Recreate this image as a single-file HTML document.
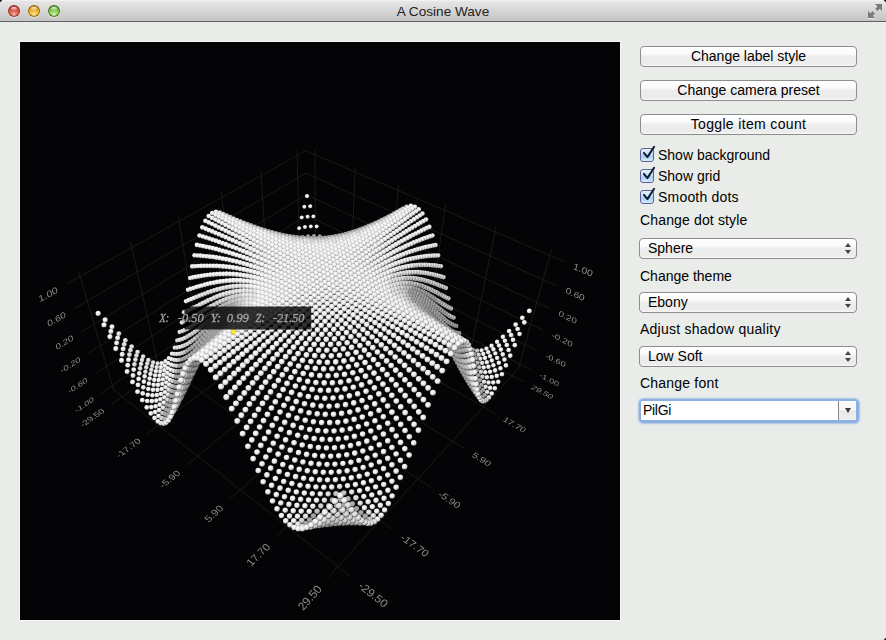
<!DOCTYPE html>
<html><head><meta charset="utf-8">
<style>
*{box-sizing:border-box}
html,body{margin:0;padding:0;width:886px;height:640px;overflow:hidden;background:#eaece9;font-family:"Liberation Sans",sans-serif;}
#title{position:absolute;left:0;top:0;width:886px;height:22px;background:linear-gradient(#f6f6f6 0,#e6e6e6 1.5px,#d6d6d6 50%,#c4c4c4 100%);border-bottom:1px solid #626262;}
#title .t{position:absolute;left:0;width:886px;top:4px;line-height:15px;text-align:center;font-size:13.6px;color:#222}
.tl{position:absolute;top:5px;width:12px;height:12px;border-radius:50%;}
.hl{position:absolute;left:3px;top:1.5px;width:6px;height:3.5px;border-radius:50%;background:linear-gradient(rgba(255,255,255,.9),rgba(255,255,255,.15))}
#plot{position:absolute;left:19px;top:41px;width:602px;height:580px;border:1px solid #f7f8f6;background:#040306}
.t13{position:absolute;font-size:14px;line-height:15px;color:#000;letter-spacing:0px;white-space:nowrap}
.btn{position:absolute;left:640px;width:217px;height:21px;border:1px solid #8e8e8e;border-radius:4px;background:linear-gradient(#fefefe,#fbfbfb 35%,#ececec 52%,#ebecea 85%,#f6f6f6);}
.btn .t13{left:0;width:215px;text-align:center;top:2px}
.cb{position:absolute;left:640px;width:14px;height:14px;border:1px solid #5f5f98;border-radius:3px;background:linear-gradient(#e6f3fe,#c6e2fc 40%,#a6cef6 60%,#d6effe);}
.combo{position:absolute;left:639px;width:218px;height:21px;border:1px solid #8e8e8e;border-radius:4px;background:linear-gradient(#fefefe,#fbfbfb 35%,#ececec 52%,#ebecea 85%,#f6f6f6);}
.combo .t13{left:8px;top:2px}
.arr{position:absolute;left:205px;width:0;height:0;border-left:3px solid transparent;border-right:3px solid transparent}
</style></head><body>
<div id="title"><div class="t">A Cosine Wave</div>
<div class="tl" style="left:8px;background:radial-gradient(circle at 50% 78%,#f2b8ae 0,#e26a5a 30%,transparent 60%),linear-gradient(#b8372a,#d44c3c 50%,#e88070);box-shadow:inset 0 0 0 1px #8c3428,0 1px 0 rgba(255,255,255,.5)"><div class="hl"></div></div>
<div class="tl" style="left:28px;background:radial-gradient(circle at 50% 78%,#fbe8a8 0,#f0c040 30%,transparent 60%),linear-gradient(#c88a10,#e0a828 50%,#f4d070);box-shadow:inset 0 0 0 1px #8e6410,0 1px 0 rgba(255,255,255,.5)"><div class="hl"></div></div>
<div class="tl" style="left:48px;background:radial-gradient(circle at 50% 78%,#d8f2b8 0,#98d060 30%,transparent 60%),linear-gradient(#5c9a2c,#7cba44 50%,#b8e088);box-shadow:inset 0 0 0 1px #3e6e20,0 1px 0 rgba(255,255,255,.5)"><div class="hl"></div></div>
<svg style="position:absolute;left:866px;top:2px" width="18" height="18" viewBox="0 0 18 18"><path d="M9 2h7v7l-2.3-2.3-2.2 2.2-2.2-2.2 2.2-2.2z" fill="#7a7a7a"/><path d="M2 9v7h7l-2.3-2.3 2.2-2.2-2.2-2.2-2.2 2.2z" fill="#7a7a7a"/><path d="M2 16.6h7" stroke="#f4f4f4" stroke-width="0.8"/></svg>
<div style="position:absolute;left:0;top:0;width:3px;height:3px;background:radial-gradient(circle at 100% 100%,transparent 2.5px,#111 3px)"></div><div style="position:absolute;right:0;top:0;width:3px;height:3px;background:radial-gradient(circle at 0 100%,transparent 2.5px,#111 3px)"></div>
</div>
<div id="plot"><svg width="600" height="578" viewBox="0 0 600 578" style="display:block">
<g font-family="Liberation Sans, sans-serif" font-size="10" fill="#8f8e8d" opacity="0.999"><text transform="matrix(0.7979 -0.5436 0.2114 0.6405 73.43 356.61)" text-anchor="end" y="3.6">-1.00</text><text transform="matrix(0.8407 0.4386 -0.1981 0.6405 519.71 332.45)" text-anchor="start" y="3.6">-1.00</text><text transform="matrix(0.8255 -0.5437 0.2235 0.6772 67.03 337.19)" text-anchor="end" y="3.6">-0.60</text><text transform="matrix(0.8676 0.4379 -0.2091 0.6760 525.71 313.05)" text-anchor="start" y="3.6">-0.60</text><text transform="matrix(0.8550 -0.5430 0.2367 0.7173 60.24 316.65)" text-anchor="end" y="3.6">-0.20</text><text transform="matrix(0.8962 0.4364 -0.2210 0.7145 532.05 292.56)" text-anchor="start" y="3.6">-0.20</text><text transform="matrix(0.8866 -0.5411 0.2512 0.7609 53.06 294.87)" text-anchor="end" y="3.6">0.20</text><text transform="matrix(0.9268 0.4340 -0.2340 0.7564 538.75 270.89)" text-anchor="start" y="3.6">0.20</text><text transform="matrix(0.9205 -0.5381 0.2669 0.8087 45.42 271.74)" text-anchor="end" y="3.6">0.60</text><text transform="matrix(0.9594 0.4306 -0.2481 0.8021 545.86 247.93)" text-anchor="start" y="3.6">0.60</text><text transform="matrix(0.9570 -0.5335 0.2842 0.8612 37.30 247.14)" text-anchor="end" y="3.6">1.00</text><text transform="matrix(0.9944 0.4259 -0.2636 0.8520 553.40 223.56)" text-anchor="start" y="3.6">1.00</text><text transform="matrix(0.7930 -0.5539 0.5846 0.4788 83.29 367.86)" text-anchor="end" y="3.6">-29.50</text><text transform="matrix(0.9359 0.7368 -0.7399 0.8521 340.14 542.04)" text-anchor="start" y="3.6">-29.50</text><text transform="matrix(0.7966 -0.6001 0.6334 0.5188 119.45 397.47)" text-anchor="end" y="3.6">-17.70</text><text transform="matrix(0.9182 0.6602 -0.6630 0.7635 381.83 494.04)" text-anchor="start" y="3.6">-17.70</text><text transform="matrix(0.7979 -0.6523 0.6886 0.5640 158.69 429.61)" text-anchor="end" y="3.6">-5.90</text><text transform="matrix(0.8992 0.5949 -0.5975 0.6881 419.29 450.90)" text-anchor="start" y="3.6">-5.90</text><text transform="matrix(0.7964 -0.7117 0.7512 0.6153 201.43 464.61)" text-anchor="end" y="3.6">5.90</text><text transform="matrix(0.8795 0.5389 -0.5412 0.6233 453.13 411.93)" text-anchor="start" y="3.6">5.90</text><text transform="matrix(0.7911 -0.7795 0.8229 0.6740 248.14 502.88)" text-anchor="end" y="3.6">17.70</text><text transform="matrix(0.8595 0.4904 -0.4926 0.5673 483.85 376.54)" text-anchor="start" y="3.6">17.70</text><text transform="matrix(0.7810 -0.8575 0.9053 0.7415 299.43 544.88)" text-anchor="end" y="3.6">29.50</text><text transform="matrix(0.8396 0.4481 -0.4502 0.5184 511.88 344.27)" text-anchor="start" y="3.6">29.50</text></g><defs><radialGradient id="s0" cx="0.42" cy="0.38" r="0.62"><stop offset="0" stop-color="#fafafa"/><stop offset="0.4" stop-color="#f2f2f2"/><stop offset="0.7" stop-color="#d4d4d4"/><stop offset="0.88" stop-color="#9e9e9e"/><stop offset="1" stop-color="#555555"/></radialGradient><radialGradient id="s1" cx="0.42" cy="0.38" r="0.62"><stop offset="0" stop-color="#eaeaea"/><stop offset="0.4" stop-color="#e3e3e3"/><stop offset="0.7" stop-color="#c6c6c6"/><stop offset="0.88" stop-color="#949494"/><stop offset="1" stop-color="#505050"/></radialGradient><radialGradient id="s2" cx="0.42" cy="0.38" r="0.62"><stop offset="0" stop-color="#dadada"/><stop offset="0.4" stop-color="#d3d3d3"/><stop offset="0.7" stop-color="#b9b9b9"/><stop offset="0.88" stop-color="#8a8a8a"/><stop offset="1" stop-color="#4a4a4a"/></radialGradient><radialGradient id="s3" cx="0.42" cy="0.38" r="0.62"><stop offset="0" stop-color="#cacaca"/><stop offset="0.4" stop-color="#c4c4c4"/><stop offset="0.7" stop-color="#ababab"/><stop offset="0.88" stop-color="#808080"/><stop offset="1" stop-color="#454545"/></radialGradient><radialGradient id="s4" cx="0.42" cy="0.38" r="0.62"><stop offset="0" stop-color="#bababa"/><stop offset="0.4" stop-color="#b4b4b4"/><stop offset="0.7" stop-color="#9e9e9e"/><stop offset="0.88" stop-color="#767676"/><stop offset="1" stop-color="#3f3f3f"/></radialGradient><radialGradient id="s5" cx="0.42" cy="0.38" r="0.62"><stop offset="0" stop-color="#aaaaaa"/><stop offset="0.4" stop-color="#a5a5a5"/><stop offset="0.7" stop-color="#909090"/><stop offset="0.88" stop-color="#6b6b6b"/><stop offset="1" stop-color="#3a3a3a"/></radialGradient><radialGradient id="y" cx="0.45" cy="0.4" r="0.6"><stop offset="0" stop-color="#fff27a"/><stop offset="0.6" stop-color="#f5dc0d"/><stop offset="1" stop-color="#a08800"/></radialGradient></defs>
<path d="M90.9 362.5L295.5 219.7M93.7 348.0L331.2 535.0M127.1 391.7L330.8 238.2M137.2 318.2L373.0 487.7M166.3 423.4L368.5 258.1M177.2 290.7L410.7 445.2M209.1 457.8L408.9 279.3M214.0 265.4L444.7 406.8M255.7 495.4L452.1 302.0M248.1 242.0L475.6 371.8M306.9 536.7L498.5 326.3M279.7 220.4L503.8 340.0M93.7 348.0L58.3 228.6M81.1 351.4L287.1 211.1M137.2 318.2L110.6 199.7M74.9 332.0L286.8 192.5M177.2 290.7L158.1 173.6M68.4 311.4L286.5 173.0M214.0 265.4L201.3 149.8M61.6 289.7L286.2 152.6M248.1 242.0L240.7 128.1M54.3 266.6L285.8 131.2M279.7 220.4L277.0 108.1M46.5 242.0L285.5 108.8M295.5 219.7L294.8 107.5M287.1 211.1L511.6 328.2M330.8 238.2L335.2 124.5M286.8 192.5L517.4 308.8M368.5 258.1L378.6 142.9M286.5 173.0L523.5 288.4M408.9 279.3L425.5 162.8M286.2 152.6L529.9 266.7M452.1 302.0L476.2 184.3M285.8 131.2L536.7 243.8M498.5 326.3L531.4 207.6M285.5 108.8L543.9 219.5" stroke="#25221c" stroke-width="0.75" fill="none"/>
<g><circle cx="318.1" cy="235.3" r="2.01" fill="url(#s5)"/><circle cx="315.1" cy="231.2" r="2.01" fill="url(#s5)"/><circle cx="312.4" cy="235.0" r="2.01" fill="url(#s5)"/><circle cx="321.2" cy="238.1" r="2.01" fill="url(#s5)"/><circle cx="309.4" cy="230.7" r="2.01" fill="url(#s5)"/><circle cx="312.0" cy="225.9" r="2.01" fill="url(#s5)"/><circle cx="315.5" cy="238.1" r="2.01" fill="url(#s5)"/><circle cx="306.8" cy="234.8" r="2.01" fill="url(#s5)"/><circle cx="309.8" cy="238.1" r="2.01" fill="url(#s5)"/><circle cx="303.7" cy="230.3" r="2.01" fill="url(#s5)"/><circle cx="301.1" cy="234.7" r="2.01" fill="url(#s5)"/><circle cx="263.9" cy="234.4" r="2.01" fill="url(#s5)"/><circle cx="304.1" cy="238.1" r="2.01" fill="url(#s5)"/><circle cx="306.4" cy="225.3" r="2.01" fill="url(#s5)"/><circle cx="295.4" cy="234.8" r="2.01" fill="url(#s5)"/><circle cx="261.3" cy="238.4" r="2.01" fill="url(#s5)"/><circle cx="298.0" cy="230.2" r="2.01" fill="url(#s5)"/><circle cx="269.6" cy="233.3" r="2.01" fill="url(#s5)"/><circle cx="266.9" cy="237.6" r="2.01" fill="url(#s5)"/><circle cx="289.7" cy="235.0" r="2.01" fill="url(#s5)"/><circle cx="266.5" cy="229.1" r="2.01" fill="url(#s5)"/><circle cx="298.5" cy="238.2" r="2.02" fill="url(#s5)"/><circle cx="272.6" cy="236.8" r="2.02" fill="url(#s5)"/><circle cx="275.3" cy="232.2" r="2.02" fill="url(#s5)"/><circle cx="324.3" cy="239.6" r="2.02" fill="url(#s5)"/><circle cx="292.3" cy="230.4" r="2.02" fill="url(#s5)"/><circle cx="284.0" cy="235.5" r="2.02" fill="url(#s5)"/><circle cx="278.3" cy="236.1" r="2.02" fill="url(#s5)"/><circle cx="318.6" cy="240.0" r="2.02" fill="url(#s5)"/><circle cx="280.9" cy="231.4" r="2.02" fill="url(#s5)"/><circle cx="286.6" cy="230.7" r="2.02" fill="url(#s5)"/><circle cx="292.8" cy="238.5" r="2.02" fill="url(#s5)"/><circle cx="300.7" cy="224.9" r="2.02" fill="url(#s5)"/><circle cx="312.9" cy="240.3" r="2.02" fill="url(#s5)"/><circle cx="287.1" cy="238.8" r="2.02" fill="url(#s5)"/><circle cx="272.2" cy="227.7" r="2.02" fill="url(#s5)"/><circle cx="309.0" cy="219.5" r="2.02" fill="url(#s5)"/><circle cx="281.4" cy="239.2" r="2.02" fill="url(#s5)"/><circle cx="307.2" cy="240.6" r="2.02" fill="url(#s5)"/><circle cx="275.7" cy="239.7" r="2.02" fill="url(#s5)"/><circle cx="269.9" cy="240.2" r="2.02" fill="url(#s5)"/><circle cx="295.0" cy="224.8" r="2.02" fill="url(#s5)"/><circle cx="264.2" cy="240.7" r="2.02" fill="url(#s5)"/><circle cx="277.9" cy="226.5" r="2.02" fill="url(#s5)"/><circle cx="301.5" cy="240.8" r="2.02" fill="url(#s5)"/><circle cx="289.3" cy="225.1" r="2.02" fill="url(#s5)"/><circle cx="258.5" cy="241.0" r="2.02" fill="url(#s5)"/><circle cx="283.6" cy="225.6" r="2.02" fill="url(#s5)"/><circle cx="295.8" cy="241.0" r="2.02" fill="url(#s5)"/><circle cx="269.1" cy="222.5" r="2.02" fill="url(#s5)"/><circle cx="303.3" cy="218.8" r="2.02" fill="url(#s5)"/><circle cx="290.1" cy="241.3" r="2.02" fill="url(#s5)"/><circle cx="284.4" cy="241.6" r="2.02" fill="url(#s5)"/><circle cx="278.7" cy="241.9" r="2.02" fill="url(#s5)"/><circle cx="274.8" cy="221.0" r="2.02" fill="url(#s5)"/><circle cx="297.6" cy="218.4" r="2.02" fill="url(#s5)"/><circle cx="272.9" cy="242.2" r="2.02" fill="url(#s5)"/><circle cx="316.0" cy="241.4" r="2.02" fill="url(#s5)"/><circle cx="267.2" cy="242.4" r="2.02" fill="url(#s5)"/><circle cx="321.7" cy="240.7" r="2.02" fill="url(#s5)"/><circle cx="280.5" cy="219.8" r="2.02" fill="url(#s5)"/><circle cx="310.3" cy="241.9" r="2.02" fill="url(#s5)"/><circle cx="291.9" cy="218.5" r="2.02" fill="url(#s5)"/><circle cx="286.2" cy="219.0" r="2.02" fill="url(#s5)"/><circle cx="304.6" cy="242.3" r="2.02" fill="url(#s5)"/><circle cx="327.5" cy="239.7" r="2.02" fill="url(#s5)"/><circle cx="298.9" cy="242.7" r="2.03" fill="url(#s5)"/><circle cx="261.5" cy="242.5" r="2.03" fill="url(#s5)"/><circle cx="306.0" cy="212.0" r="2.03" fill="url(#s5)"/><circle cx="293.1" cy="243.0" r="2.03" fill="url(#s5)"/><circle cx="287.4" cy="243.2" r="2.03" fill="url(#s5)"/><circle cx="255.7" cy="242.3" r="2.03" fill="url(#s5)"/><circle cx="281.7" cy="243.4" r="2.03" fill="url(#s5)"/><circle cx="271.6" cy="214.8" r="2.03" fill="url(#s5)"/><circle cx="300.3" cy="211.3" r="2.03" fill="url(#s5)"/><circle cx="275.9" cy="243.5" r="2.03" fill="url(#s5)"/><circle cx="277.3" cy="213.2" r="2.03" fill="url(#s5)"/><circle cx="270.2" cy="243.5" r="2.03" fill="url(#s5)"/><circle cx="294.5" cy="211.1" r="2.03" fill="url(#s5)"/><circle cx="283.0" cy="212.1" r="2.03" fill="url(#s5)"/><circle cx="288.8" cy="211.4" r="2.03" fill="url(#s5)"/><circle cx="307.7" cy="242.9" r="2.03" fill="url(#s5)"/><circle cx="264.4" cy="243.4" r="2.03" fill="url(#s5)"/><circle cx="313.4" cy="242.3" r="2.03" fill="url(#s5)"/><circle cx="301.9" cy="243.5" r="2.03" fill="url(#s5)"/><circle cx="319.2" cy="241.4" r="2.03" fill="url(#s5)"/><circle cx="296.2" cy="243.8" r="2.03" fill="url(#s5)"/><circle cx="290.5" cy="244.1" r="2.03" fill="url(#s5)"/><circle cx="324.9" cy="240.2" r="2.03" fill="url(#s5)"/><circle cx="258.6" cy="242.9" r="2.04" fill="url(#s5)"/><circle cx="284.7" cy="244.3" r="2.04" fill="url(#s5)"/><circle cx="302.9" cy="203.6" r="2.04" fill="url(#s5)"/><circle cx="278.9" cy="244.3" r="2.04" fill="url(#s5)"/><circle cx="330.7" cy="238.7" r="2.04" fill="url(#s5)"/><circle cx="274.1" cy="206.1" r="2.04" fill="url(#s5)"/><circle cx="252.8" cy="242.1" r="2.04" fill="url(#s5)"/><circle cx="273.1" cy="244.1" r="2.04" fill="url(#s5)"/><circle cx="297.2" cy="203.1" r="2.04" fill="url(#s5)"/><circle cx="279.9" cy="204.6" r="2.04" fill="url(#s5)"/><circle cx="291.4" cy="203.1" r="2.04" fill="url(#s5)"/><circle cx="285.6" cy="203.6" r="2.04" fill="url(#s5)"/><circle cx="267.3" cy="243.8" r="2.04" fill="url(#s5)"/><circle cx="305.1" cy="243.3" r="2.04" fill="url(#s5)"/><circle cx="299.3" cy="243.9" r="2.04" fill="url(#s5)"/><circle cx="310.8" cy="242.6" r="2.04" fill="url(#s5)"/><circle cx="293.5" cy="244.2" r="2.04" fill="url(#s5)"/><circle cx="316.6" cy="241.6" r="2.04" fill="url(#s5)"/><circle cx="261.5" cy="243.1" r="2.04" fill="url(#s5)"/><circle cx="287.7" cy="244.4" r="2.05" fill="url(#s5)"/><circle cx="322.4" cy="240.3" r="2.05" fill="url(#s5)"/><circle cx="281.9" cy="244.4" r="2.05" fill="url(#s5)"/><circle cx="276.1" cy="244.2" r="2.05" fill="url(#s5)"/><circle cx="255.6" cy="242.1" r="2.05" fill="url(#s5)"/><circle cx="328.2" cy="238.6" r="2.05" fill="url(#s5)"/><circle cx="299.8" cy="194.4" r="2.05" fill="url(#s5)"/><circle cx="276.7" cy="196.5" r="2.05" fill="url(#s5)"/><circle cx="294.0" cy="194.1" r="2.05" fill="url(#s5)"/><circle cx="270.3" cy="243.7" r="2.05" fill="url(#s5)"/><circle cx="282.4" cy="195.1" r="2.05" fill="url(#s5)"/><circle cx="288.2" cy="194.3" r="2.05" fill="url(#s5)"/><circle cx="334.1" cy="236.4" r="2.05" fill="url(#s5)"/><circle cx="249.7" cy="240.6" r="2.05" fill="url(#s5)"/><circle cx="302.4" cy="243.2" r="2.06" fill="url(#s5)"/><circle cx="264.4" cy="242.9" r="2.06" fill="url(#s5)"/><circle cx="296.6" cy="243.7" r="2.06" fill="url(#s5)"/><circle cx="308.2" cy="242.4" r="2.06" fill="url(#s5)"/><circle cx="290.8" cy="243.9" r="2.06" fill="url(#s5)"/><circle cx="314.0" cy="241.3" r="2.06" fill="url(#s5)"/><circle cx="285.0" cy="244.0" r="2.06" fill="url(#s5)"/><circle cx="319.8" cy="239.9" r="2.06" fill="url(#s5)"/><circle cx="258.5" cy="241.8" r="2.06" fill="url(#s5)"/><circle cx="279.1" cy="243.7" r="2.06" fill="url(#s5)"/><circle cx="325.7" cy="238.1" r="2.06" fill="url(#s5)"/><circle cx="296.7" cy="184.6" r="2.06" fill="url(#s0)"/><circle cx="273.3" cy="243.2" r="2.06" fill="url(#s5)"/><circle cx="279.2" cy="186.3" r="2.06" fill="url(#s0)"/><circle cx="290.9" cy="184.6" r="2.06" fill="url(#s0)"/><circle cx="285.0" cy="185.1" r="2.07" fill="url(#s0)"/><circle cx="252.6" cy="240.1" r="2.07" fill="url(#s5)"/><circle cx="331.6" cy="235.8" r="2.07" fill="url(#s5)"/><circle cx="267.4" cy="242.3" r="2.07" fill="url(#s5)"/><circle cx="299.7" cy="242.4" r="2.07" fill="url(#s5)"/><circle cx="305.5" cy="241.7" r="2.07" fill="url(#s5)"/><circle cx="293.9" cy="242.8" r="2.07" fill="url(#s5)"/><circle cx="311.4" cy="240.6" r="2.07" fill="url(#s5)"/><circle cx="288.0" cy="242.9" r="2.07" fill="url(#s5)"/><circle cx="337.5" cy="232.9" r="2.07" fill="url(#s5)"/><circle cx="261.4" cy="241.0" r="2.07" fill="url(#s5)"/><circle cx="317.3" cy="239.2" r="2.07" fill="url(#s5)"/><circle cx="282.1" cy="242.7" r="2.07" fill="url(#s5)"/><circle cx="246.5" cy="237.8" r="2.07" fill="url(#s5)"/><circle cx="323.2" cy="237.3" r="2.08" fill="url(#s5)"/><circle cx="276.2" cy="242.2" r="2.08" fill="url(#s5)"/><circle cx="293.5" cy="174.5" r="2.08" fill="url(#s0)"/><circle cx="281.8" cy="175.6" r="2.08" fill="url(#s0)"/><circle cx="255.4" cy="239.3" r="2.08" fill="url(#s5)"/><circle cx="287.7" cy="174.8" r="2.08" fill="url(#s0)"/><circle cx="270.3" cy="241.3" r="2.08" fill="url(#s5)"/><circle cx="329.1" cy="234.9" r="2.08" fill="url(#s5)"/><circle cx="302.9" cy="240.4" r="2.08" fill="url(#s5)"/><circle cx="297.0" cy="241.1" r="2.08" fill="url(#s5)"/><circle cx="264.3" cy="240.0" r="2.09" fill="url(#s5)"/><circle cx="308.8" cy="239.4" r="2.09" fill="url(#s5)"/><circle cx="291.1" cy="241.3" r="2.09" fill="url(#s5)"/><circle cx="249.4" cy="236.9" r="2.09" fill="url(#s5)"/><circle cx="335.1" cy="232.0" r="2.09" fill="url(#s5)"/><circle cx="285.2" cy="241.3" r="2.09" fill="url(#s5)"/><circle cx="314.7" cy="238.0" r="2.09" fill="url(#s5)"/><circle cx="279.2" cy="240.8" r="2.09" fill="url(#s5)"/><circle cx="320.6" cy="236.2" r="2.09" fill="url(#s5)"/><circle cx="258.3" cy="238.2" r="2.09" fill="url(#s5)"/><circle cx="290.3" cy="164.3" r="2.09" fill="url(#s0)"/><circle cx="284.4" cy="164.8" r="2.09" fill="url(#s0)"/><circle cx="341.1" cy="228.4" r="2.09" fill="url(#s5)"/><circle cx="273.3" cy="239.9" r="2.09" fill="url(#s5)"/><circle cx="326.6" cy="233.8" r="2.10" fill="url(#s5)"/><circle cx="243.2" cy="233.9" r="2.10" fill="url(#s5)"/><circle cx="267.3" cy="238.6" r="2.10" fill="url(#s5)"/><circle cx="252.2" cy="235.8" r="2.10" fill="url(#s5)"/><circle cx="300.1" cy="238.8" r="2.10" fill="url(#s5)"/><circle cx="332.6" cy="230.9" r="2.10" fill="url(#s5)"/><circle cx="294.2" cy="239.2" r="2.10" fill="url(#s5)"/><circle cx="306.1" cy="237.9" r="2.10" fill="url(#s5)"/><circle cx="288.2" cy="239.3" r="2.10" fill="url(#s5)"/><circle cx="312.0" cy="236.5" r="2.10" fill="url(#s5)"/><circle cx="282.3" cy="239.0" r="2.11" fill="url(#s5)"/><circle cx="261.2" cy="236.8" r="2.11" fill="url(#s5)"/><circle cx="318.0" cy="234.7" r="2.11" fill="url(#s5)"/><circle cx="287.1" cy="154.2" r="2.11" fill="url(#s0)"/><circle cx="338.6" cy="227.3" r="2.11" fill="url(#s5)"/><circle cx="246.1" cy="232.7" r="2.11" fill="url(#s5)"/><circle cx="276.3" cy="238.2" r="2.11" fill="url(#s5)"/><circle cx="324.0" cy="232.4" r="2.11" fill="url(#s5)"/><circle cx="255.1" cy="234.4" r="2.11" fill="url(#s5)"/><circle cx="270.3" cy="236.9" r="2.11" fill="url(#s5)"/><circle cx="330.0" cy="229.5" r="2.12" fill="url(#s5)"/><circle cx="344.8" cy="223.0" r="2.12" fill="url(#s5)"/><circle cx="297.4" cy="236.6" r="2.12" fill="url(#s5)"/><circle cx="303.3" cy="235.9" r="2.12" fill="url(#s5)"/><circle cx="291.4" cy="236.9" r="2.12" fill="url(#s5)"/><circle cx="309.3" cy="234.7" r="2.12" fill="url(#s5)"/><circle cx="264.2" cy="235.1" r="2.12" fill="url(#s5)"/><circle cx="239.8" cy="228.9" r="2.12" fill="url(#s5)"/><circle cx="285.4" cy="236.7" r="2.12" fill="url(#s5)"/><circle cx="248.9" cy="231.3" r="2.12" fill="url(#s5)"/><circle cx="315.4" cy="233.0" r="2.12" fill="url(#s5)"/><circle cx="336.2" cy="226.0" r="2.12" fill="url(#s5)"/><circle cx="279.3" cy="236.1" r="2.13" fill="url(#s5)"/><circle cx="321.4" cy="230.8" r="2.13" fill="url(#s5)"/><circle cx="258.0" cy="232.8" r="2.13" fill="url(#s5)"/><circle cx="273.3" cy="234.9" r="2.13" fill="url(#s5)"/><circle cx="327.5" cy="228.0" r="2.13" fill="url(#s5)"/><circle cx="342.3" cy="221.8" r="2.13" fill="url(#s5)"/><circle cx="242.6" cy="227.6" r="2.14" fill="url(#s5)"/><circle cx="267.2" cy="233.2" r="2.14" fill="url(#s5)"/><circle cx="300.6" cy="233.6" r="2.14" fill="url(#s5)"/><circle cx="294.5" cy="234.1" r="2.14" fill="url(#s5)"/><circle cx="251.8" cy="229.8" r="2.14" fill="url(#s5)"/><circle cx="306.6" cy="232.6" r="2.14" fill="url(#s5)"/><circle cx="288.5" cy="234.2" r="2.14" fill="url(#s5)"/><circle cx="333.6" cy="224.5" r="2.14" fill="url(#s5)"/><circle cx="312.7" cy="231.0" r="2.14" fill="url(#s5)"/><circle cx="282.4" cy="233.7" r="2.14" fill="url(#s5)"/><circle cx="261.0" cy="231.0" r="2.14" fill="url(#s5)"/><circle cx="348.6" cy="216.8" r="2.15" fill="url(#s5)"/><circle cx="318.8" cy="228.9" r="2.15" fill="url(#s5)"/><circle cx="276.3" cy="232.7" r="2.15" fill="url(#s5)"/><circle cx="236.2" cy="223.0" r="2.15" fill="url(#s5)"/><circle cx="339.8" cy="220.4" r="2.15" fill="url(#s5)"/><circle cx="245.5" cy="226.1" r="2.15" fill="url(#s5)"/><circle cx="324.9" cy="226.3" r="2.15" fill="url(#s5)"/><circle cx="270.2" cy="231.1" r="2.15" fill="url(#s5)"/><circle cx="254.7" cy="228.1" r="2.15" fill="url(#s5)"/><circle cx="331.1" cy="223.0" r="2.16" fill="url(#s5)"/><circle cx="297.8" cy="231.0" r="2.16" fill="url(#s5)"/><circle cx="303.9" cy="230.2" r="2.16" fill="url(#s5)"/><circle cx="291.7" cy="231.3" r="2.16" fill="url(#s5)"/><circle cx="310.0" cy="228.8" r="2.16" fill="url(#s5)"/><circle cx="264.0" cy="229.0" r="2.16" fill="url(#s5)"/><circle cx="346.1" cy="215.6" r="2.16" fill="url(#s5)"/><circle cx="285.5" cy="231.0" r="2.16" fill="url(#s5)"/><circle cx="316.1" cy="226.9" r="2.16" fill="url(#s5)"/><circle cx="239.0" cy="221.7" r="2.16" fill="url(#s5)"/><circle cx="248.4" cy="224.5" r="2.17" fill="url(#s5)"/><circle cx="279.4" cy="230.2" r="2.17" fill="url(#s5)"/><circle cx="337.3" cy="219.0" r="2.17" fill="url(#s5)"/><circle cx="322.3" cy="224.4" r="2.17" fill="url(#s5)"/><circle cx="257.7" cy="226.3" r="2.17" fill="url(#s5)"/><circle cx="273.2" cy="228.8" r="2.17" fill="url(#s5)"/><circle cx="352.6" cy="210.0" r="2.17" fill="url(#s5)"/><circle cx="328.5" cy="221.3" r="2.17" fill="url(#s5)"/><circle cx="343.6" cy="214.4" r="2.18" fill="url(#s5)"/><circle cx="267.0" cy="226.9" r="2.18" fill="url(#s5)"/><circle cx="301.0" cy="227.5" r="2.18" fill="url(#s5)"/><circle cx="241.9" cy="220.2" r="2.18" fill="url(#s5)"/><circle cx="294.9" cy="228.1" r="2.18" fill="url(#s5)"/><circle cx="232.4" cy="216.4" r="2.18" fill="url(#s5)"/><circle cx="307.2" cy="226.4" r="2.18" fill="url(#s5)"/><circle cx="288.7" cy="228.1" r="2.18" fill="url(#s5)"/><circle cx="251.3" cy="222.9" r="2.18" fill="url(#s5)"/><circle cx="313.4" cy="224.7" r="2.18" fill="url(#s5)"/><circle cx="334.7" cy="217.5" r="2.18" fill="url(#s5)"/><circle cx="282.5" cy="227.5" r="2.18" fill="url(#s5)"/><circle cx="260.7" cy="224.3" r="2.19" fill="url(#s5)"/><circle cx="319.6" cy="222.4" r="2.19" fill="url(#s5)"/><circle cx="276.3" cy="226.4" r="2.19" fill="url(#s5)"/><circle cx="350.1" cy="209.0" r="2.19" fill="url(#s5)"/><circle cx="325.8" cy="219.5" r="2.19" fill="url(#s5)"/><circle cx="341.1" cy="213.1" r="2.19" fill="url(#s5)"/><circle cx="235.3" cy="215.2" r="2.19" fill="url(#s5)"/><circle cx="244.8" cy="218.7" r="2.19" fill="url(#s5)"/><circle cx="270.0" cy="224.6" r="2.19" fill="url(#s5)"/><circle cx="254.3" cy="221.1" r="2.20" fill="url(#s5)"/><circle cx="298.2" cy="224.7" r="2.20" fill="url(#s5)"/><circle cx="304.4" cy="223.8" r="2.20" fill="url(#s5)"/><circle cx="292.0" cy="225.0" r="2.20" fill="url(#s5)"/><circle cx="332.1" cy="215.9" r="2.20" fill="url(#s5)"/><circle cx="310.6" cy="222.4" r="2.20" fill="url(#s5)"/><circle cx="285.7" cy="224.7" r="2.20" fill="url(#s5)"/><circle cx="263.7" cy="222.3" r="2.20" fill="url(#s5)"/><circle cx="356.6" cy="202.9" r="2.20" fill="url(#s5)"/><circle cx="347.5" cy="207.9" r="2.20" fill="url(#s5)"/><circle cx="316.9" cy="220.3" r="2.21" fill="url(#s5)"/><circle cx="279.5" cy="223.8" r="2.21" fill="url(#s5)"/><circle cx="238.2" cy="213.9" r="2.21" fill="url(#s5)"/><circle cx="247.8" cy="217.2" r="2.21" fill="url(#s5)"/><circle cx="338.5" cy="211.7" r="2.21" fill="url(#s5)"/><circle cx="228.6" cy="209.4" r="2.21" fill="url(#s5)"/><circle cx="323.1" cy="217.6" r="2.21" fill="url(#s5)"/><circle cx="273.2" cy="222.3" r="2.21" fill="url(#s5)"/><circle cx="257.3" cy="219.3" r="2.21" fill="url(#s5)"/><circle cx="329.5" cy="214.3" r="2.22" fill="url(#s5)"/><circle cx="354.1" cy="202.1" r="2.22" fill="url(#s5)"/><circle cx="301.5" cy="221.1" r="2.22" fill="url(#s5)"/><circle cx="266.8" cy="220.1" r="2.22" fill="url(#s5)"/><circle cx="295.3" cy="221.7" r="2.22" fill="url(#s5)"/><circle cx="345.0" cy="206.9" r="2.22" fill="url(#s5)"/><circle cx="307.8" cy="219.9" r="2.22" fill="url(#s5)"/><circle cx="289.0" cy="221.7" r="2.22" fill="url(#s5)"/><circle cx="241.2" cy="212.6" r="2.22" fill="url(#s5)"/><circle cx="314.1" cy="218.1" r="2.22" fill="url(#s5)"/><circle cx="250.8" cy="215.6" r="2.22" fill="url(#s5)"/><circle cx="231.5" cy="208.4" r="2.22" fill="url(#s5)"/><circle cx="282.7" cy="221.0" r="2.23" fill="url(#s5)"/><circle cx="335.9" cy="210.4" r="2.23" fill="url(#s5)"/><circle cx="320.4" cy="215.7" r="2.23" fill="url(#s5)"/><circle cx="260.4" cy="217.4" r="2.23" fill="url(#s5)"/><circle cx="276.3" cy="219.8" r="2.23" fill="url(#s5)"/><circle cx="360.8" cy="195.7" r="2.23" fill="url(#s5)"/><circle cx="351.6" cy="201.4" r="2.23" fill="url(#s5)"/><circle cx="326.8" cy="212.7" r="2.24" fill="url(#s5)"/><circle cx="445.7" cy="302.2" r="2.24" fill="url(#s5)"/><circle cx="342.4" cy="205.8" r="2.24" fill="url(#s5)"/><circle cx="269.9" cy="218.0" r="2.24" fill="url(#s5)"/><circle cx="244.2" cy="211.3" r="2.24" fill="url(#s5)"/><circle cx="442.4" cy="297.4" r="2.24" fill="url(#s5)"/><circle cx="234.4" cy="207.3" r="2.24" fill="url(#s5)"/><circle cx="449.2" cy="305.7" r="2.24" fill="url(#s5)"/><circle cx="253.8" cy="214.0" r="2.24" fill="url(#s5)"/><circle cx="298.6" cy="218.3" r="2.24" fill="url(#s5)"/><circle cx="304.9" cy="217.4" r="2.24" fill="url(#s5)"/><circle cx="292.3" cy="218.6" r="2.24" fill="url(#s5)"/><circle cx="224.6" cy="202.2" r="2.24" fill="url(#s5)"/><circle cx="333.2" cy="209.0" r="2.24" fill="url(#s5)"/><circle cx="439.3" cy="291.3" r="2.24" fill="url(#s5)"/><circle cx="311.3" cy="215.9" r="2.24" fill="url(#s5)"/><circle cx="285.9" cy="218.2" r="2.24" fill="url(#s5)"/><circle cx="453.0" cy="307.9" r="2.25" fill="url(#s5)"/><circle cx="263.5" cy="215.5" r="2.25" fill="url(#s5)"/><circle cx="317.7" cy="213.8" r="2.25" fill="url(#s5)"/><circle cx="358.2" cy="195.2" r="2.25" fill="url(#s5)"/><circle cx="349.0" cy="200.6" r="2.25" fill="url(#s5)"/><circle cx="443.5" cy="303.1" r="2.25" fill="url(#s5)"/><circle cx="279.5" cy="217.3" r="2.25" fill="url(#s5)"/><circle cx="447.0" cy="307.3" r="2.25" fill="url(#s5)"/><circle cx="436.4" cy="284.1" r="2.25" fill="url(#s5)"/><circle cx="440.3" cy="297.6" r="2.25" fill="url(#s5)"/><circle cx="339.7" cy="204.7" r="2.25" fill="url(#s5)"/><circle cx="237.4" cy="206.3" r="2.25" fill="url(#s5)"/><circle cx="247.2" cy="209.9" r="2.25" fill="url(#s5)"/><circle cx="324.1" cy="211.0" r="2.25" fill="url(#s5)"/><circle cx="450.6" cy="310.4" r="2.25" fill="url(#s5)"/><circle cx="273.1" cy="215.7" r="2.26" fill="url(#s5)"/><circle cx="457.2" cy="308.8" r="2.26" fill="url(#s3)"/><circle cx="227.5" cy="201.4" r="2.26" fill="url(#s5)"/><circle cx="256.9" cy="212.3" r="2.26" fill="url(#s5)"/><circle cx="437.3" cy="291.1" r="2.26" fill="url(#s5)"/><circle cx="330.5" cy="207.6" r="2.26" fill="url(#s5)"/><circle cx="454.6" cy="312.2" r="2.26" fill="url(#s5)"/><circle cx="444.8" cy="308.4" r="2.26" fill="url(#s5)"/><circle cx="302.0" cy="214.8" r="2.26" fill="url(#s5)"/><circle cx="355.7" cy="194.8" r="2.26" fill="url(#s5)"/><circle cx="295.6" cy="215.4" r="2.26" fill="url(#s5)"/><circle cx="448.3" cy="312.3" r="2.26" fill="url(#s5)"/><circle cx="441.5" cy="303.5" r="2.26" fill="url(#s5)"/><circle cx="266.6" cy="213.5" r="2.26" fill="url(#s5)"/><circle cx="365.0" cy="188.6" r="2.26" fill="url(#s5)"/><circle cx="433.7" cy="275.8" r="2.26" fill="url(#s3)"/><circle cx="308.4" cy="213.6" r="2.26" fill="url(#s5)"/><circle cx="346.3" cy="199.8" r="2.26" fill="url(#s5)"/><circle cx="289.2" cy="215.4" r="2.26" fill="url(#s5)"/><circle cx="314.8" cy="211.8" r="2.27" fill="url(#s5)"/><circle cx="240.5" cy="205.3" r="2.27" fill="url(#s5)"/><circle cx="438.3" cy="297.5" r="2.27" fill="url(#s5)"/><circle cx="282.8" cy="214.7" r="2.27" fill="url(#s5)"/><circle cx="452.1" cy="314.9" r="2.27" fill="url(#s5)"/><circle cx="250.3" cy="208.6" r="2.27" fill="url(#s5)"/><circle cx="434.5" cy="283.5" r="2.27" fill="url(#s5)"/><circle cx="337.1" cy="203.6" r="2.27" fill="url(#s5)"/><circle cx="230.5" cy="200.7" r="2.27" fill="url(#s5)"/><circle cx="461.7" cy="308.4" r="2.27" fill="url(#s0)"/><circle cx="321.3" cy="209.3" r="2.27" fill="url(#s5)"/><circle cx="260.1" cy="210.7" r="2.27" fill="url(#s5)"/><circle cx="458.8" cy="312.8" r="2.27" fill="url(#s2)"/><circle cx="276.3" cy="213.5" r="2.27" fill="url(#s5)"/><circle cx="446.1" cy="313.6" r="2.27" fill="url(#s5)"/><circle cx="442.7" cy="309.1" r="2.28" fill="url(#s5)"/><circle cx="220.5" cy="195.0" r="2.28" fill="url(#s5)"/><circle cx="152.0" cy="311.7" r="2.28" fill="url(#s0)"/><circle cx="435.4" cy="290.5" r="2.28" fill="url(#s5)"/><circle cx="353.0" cy="194.4" r="2.28" fill="url(#s5)"/><circle cx="362.4" cy="188.5" r="2.28" fill="url(#s5)"/><circle cx="456.2" cy="316.4" r="2.28" fill="url(#s5)"/><circle cx="148.9" cy="316.3" r="2.28" fill="url(#s0)"/><circle cx="449.8" cy="317.0" r="2.28" fill="url(#s5)"/><circle cx="431.1" cy="266.6" r="2.28" fill="url(#s3)"/><circle cx="327.8" cy="206.3" r="2.28" fill="url(#s5)"/><circle cx="154.8" cy="305.7" r="2.28" fill="url(#s1)"/><circle cx="439.5" cy="303.6" r="2.28" fill="url(#s5)"/><circle cx="343.7" cy="199.1" r="2.28" fill="url(#s5)"/><circle cx="269.8" cy="211.6" r="2.28" fill="url(#s5)"/><circle cx="431.7" cy="275.0" r="2.28" fill="url(#s3)"/><circle cx="243.5" cy="204.2" r="2.28" fill="url(#s5)"/><circle cx="299.1" cy="212.2" r="2.28" fill="url(#s5)"/><circle cx="145.5" cy="319.4" r="2.28" fill="url(#s0)"/><circle cx="233.6" cy="200.0" r="2.28" fill="url(#s5)"/><circle cx="305.5" cy="211.3" r="2.28" fill="url(#s5)"/><circle cx="453.6" cy="319.5" r="2.28" fill="url(#s5)"/><circle cx="253.4" cy="207.3" r="2.28" fill="url(#s5)"/><circle cx="292.6" cy="212.5" r="2.28" fill="url(#s5)"/><circle cx="436.4" cy="297.1" r="2.29" fill="url(#s5)"/><circle cx="157.3" cy="298.5" r="2.29" fill="url(#s1)"/><circle cx="312.0" cy="209.8" r="2.29" fill="url(#s5)"/><circle cx="334.3" cy="202.6" r="2.29" fill="url(#s5)"/><circle cx="432.5" cy="282.6" r="2.29" fill="url(#s5)"/><circle cx="286.1" cy="212.2" r="2.29" fill="url(#s5)"/><circle cx="151.7" cy="317.3" r="2.29" fill="url(#s0)"/><circle cx="444.0" cy="314.3" r="2.29" fill="url(#s5)"/><circle cx="223.5" cy="194.6" r="2.29" fill="url(#s5)"/><circle cx="154.6" cy="312.1" r="2.29" fill="url(#s1)"/><circle cx="463.4" cy="312.1" r="2.29" fill="url(#s0)"/><circle cx="447.5" cy="318.5" r="2.29" fill="url(#s5)"/><circle cx="263.2" cy="209.1" r="2.29" fill="url(#s5)"/><circle cx="466.5" cy="306.7" r="2.29" fill="url(#s0)"/><circle cx="460.5" cy="316.8" r="2.29" fill="url(#s1)"/><circle cx="318.5" cy="207.7" r="2.29" fill="url(#s5)"/><circle cx="440.7" cy="309.2" r="2.29" fill="url(#s5)"/><circle cx="359.8" cy="188.5" r="2.29" fill="url(#s5)"/><circle cx="148.4" cy="321.3" r="2.29" fill="url(#s0)"/><circle cx="279.6" cy="211.2" r="2.29" fill="url(#s5)"/><circle cx="350.4" cy="194.0" r="2.29" fill="url(#s5)"/><circle cx="451.2" cy="321.8" r="2.29" fill="url(#s5)"/><circle cx="157.3" cy="305.6" r="2.29" fill="url(#s1)"/><circle cx="369.4" cy="182.0" r="2.29" fill="url(#s5)"/><circle cx="457.8" cy="320.8" r="2.29" fill="url(#s4)"/><circle cx="433.4" cy="289.7" r="2.29" fill="url(#s5)"/><circle cx="428.5" cy="256.6" r="2.29" fill="url(#s2)"/><circle cx="141.8" cy="321.2" r="2.29" fill="url(#s0)"/><circle cx="159.7" cy="290.1" r="2.30" fill="url(#s1)"/><circle cx="437.5" cy="303.2" r="2.30" fill="url(#s5)"/><circle cx="325.0" cy="204.9" r="2.30" fill="url(#s5)"/><circle cx="341.0" cy="198.4" r="2.30" fill="url(#s5)"/><circle cx="429.1" cy="265.6" r="2.30" fill="url(#s3)"/><circle cx="246.7" cy="203.3" r="2.30" fill="url(#s5)"/><circle cx="236.7" cy="199.3" r="2.30" fill="url(#s5)"/><circle cx="273.1" cy="209.7" r="2.30" fill="url(#s5)"/><circle cx="429.8" cy="273.9" r="2.30" fill="url(#s3)"/><circle cx="144.9" cy="323.9" r="2.30" fill="url(#s0)"/><circle cx="455.2" cy="324.0" r="2.30" fill="url(#s5)"/><circle cx="256.6" cy="206.0" r="2.30" fill="url(#s5)"/><circle cx="154.4" cy="318.0" r="2.30" fill="url(#s1)"/><circle cx="159.9" cy="297.9" r="2.30" fill="url(#s1)"/><circle cx="226.6" cy="194.3" r="2.30" fill="url(#s5)"/><circle cx="151.3" cy="322.7" r="2.30" fill="url(#s0)"/><circle cx="157.2" cy="312.1" r="2.30" fill="url(#s1)"/><circle cx="445.4" cy="319.4" r="2.30" fill="url(#s5)"/><circle cx="331.6" cy="201.6" r="2.30" fill="url(#s5)"/><circle cx="434.4" cy="296.3" r="2.30" fill="url(#s5)"/><circle cx="441.9" cy="314.6" r="2.30" fill="url(#s5)"/><circle cx="448.9" cy="323.4" r="2.30" fill="url(#s5)"/><circle cx="302.5" cy="209.1" r="2.30" fill="url(#s5)"/><circle cx="296.0" cy="209.7" r="2.30" fill="url(#s5)"/><circle cx="357.2" cy="188.5" r="2.30" fill="url(#s5)"/><circle cx="430.6" cy="281.6" r="2.31" fill="url(#s5)"/><circle cx="309.1" cy="207.9" r="2.31" fill="url(#s5)"/><circle cx="366.7" cy="182.3" r="2.31" fill="url(#s5)"/><circle cx="266.5" cy="207.5" r="2.31" fill="url(#s5)"/><circle cx="465.1" cy="316.1" r="2.31" fill="url(#s0)"/><circle cx="289.5" cy="209.6" r="2.31" fill="url(#s5)"/><circle cx="347.7" cy="193.7" r="2.31" fill="url(#s5)"/><circle cx="147.9" cy="326.2" r="2.31" fill="url(#s0)"/><circle cx="462.2" cy="321.1" r="2.31" fill="url(#s1)"/><circle cx="216.4" cy="188.2" r="2.31" fill="url(#s5)"/><circle cx="438.7" cy="308.9" r="2.31" fill="url(#s5)"/><circle cx="159.9" cy="305.1" r="2.31" fill="url(#s1)"/><circle cx="468.3" cy="310.3" r="2.31" fill="url(#s0)"/><circle cx="452.7" cy="326.5" r="2.31" fill="url(#s5)"/><circle cx="161.9" cy="280.6" r="2.31" fill="url(#s1)"/><circle cx="315.6" cy="206.1" r="2.31" fill="url(#s5)"/><circle cx="137.7" cy="321.5" r="2.31" fill="url(#s1)"/><circle cx="459.4" cy="325.3" r="2.31" fill="url(#s3)"/><circle cx="283.0" cy="209.0" r="2.31" fill="url(#s5)"/><circle cx="239.8" cy="198.7" r="2.31" fill="url(#s5)"/><circle cx="338.2" cy="197.7" r="2.31" fill="url(#s5)"/><circle cx="162.2" cy="289.2" r="2.31" fill="url(#s1)"/><circle cx="141.0" cy="325.3" r="2.31" fill="url(#s0)"/><circle cx="426.0" cy="246.1" r="2.31" fill="url(#s2)"/><circle cx="249.8" cy="202.3" r="2.31" fill="url(#s5)"/><circle cx="426.5" cy="255.7" r="2.31" fill="url(#s2)"/><circle cx="471.6" cy="303.9" r="2.31" fill="url(#s0)"/><circle cx="154.0" cy="323.5" r="2.31" fill="url(#s1)"/><circle cx="431.5" cy="288.7" r="2.31" fill="url(#s5)"/><circle cx="322.2" cy="203.7" r="2.31" fill="url(#s5)"/><circle cx="157.0" cy="318.2" r="2.31" fill="url(#s1)"/><circle cx="435.6" cy="302.4" r="2.31" fill="url(#s5)"/><circle cx="229.7" cy="194.0" r="2.31" fill="url(#s5)"/><circle cx="427.1" cy="264.6" r="2.31" fill="url(#s3)"/><circle cx="276.4" cy="207.8" r="2.32" fill="url(#s5)"/><circle cx="259.8" cy="204.7" r="2.32" fill="url(#s5)"/><circle cx="456.7" cy="328.7" r="2.32" fill="url(#s5)"/><circle cx="150.8" cy="327.8" r="2.32" fill="url(#s0)"/><circle cx="144.3" cy="328.4" r="2.32" fill="url(#s0)"/><circle cx="162.4" cy="297.1" r="2.32" fill="url(#s1)"/><circle cx="446.8" cy="324.4" r="2.32" fill="url(#s5)"/><circle cx="159.8" cy="311.8" r="2.32" fill="url(#s1)"/><circle cx="443.3" cy="319.7" r="2.32" fill="url(#s5)"/><circle cx="427.8" cy="272.8" r="2.32" fill="url(#s4)"/><circle cx="364.1" cy="182.7" r="2.32" fill="url(#s5)"/><circle cx="354.5" cy="188.5" r="2.32" fill="url(#s5)"/><circle cx="450.4" cy="328.2" r="2.32" fill="url(#s5)"/><circle cx="219.4" cy="188.2" r="2.32" fill="url(#s5)"/><circle cx="328.8" cy="200.7" r="2.32" fill="url(#s5)"/><circle cx="373.7" cy="176.0" r="2.32" fill="url(#s5)"/><circle cx="440.0" cy="314.3" r="2.32" fill="url(#s5)"/><circle cx="345.0" cy="193.4" r="2.32" fill="url(#s5)"/><circle cx="432.5" cy="295.2" r="2.32" fill="url(#s5)"/><circle cx="147.3" cy="330.9" r="2.32" fill="url(#s0)"/><circle cx="269.8" cy="205.9" r="2.32" fill="url(#s5)"/><circle cx="463.8" cy="325.6" r="2.32" fill="url(#s0)"/><circle cx="466.9" cy="320.4" r="2.32" fill="url(#s0)"/><circle cx="164.0" cy="270.3" r="2.32" fill="url(#s1)"/><circle cx="454.3" cy="331.2" r="2.32" fill="url(#s5)"/><circle cx="299.5" cy="206.9" r="2.32" fill="url(#s5)"/><circle cx="162.4" cy="304.3" r="2.32" fill="url(#s1)"/><circle cx="428.6" cy="280.4" r="2.32" fill="url(#s5)"/><circle cx="306.1" cy="206.0" r="2.33" fill="url(#s5)"/><circle cx="164.5" cy="279.6" r="2.33" fill="url(#s1)"/><circle cx="243.0" cy="198.1" r="2.33" fill="url(#s5)"/><circle cx="293.0" cy="207.2" r="2.33" fill="url(#s5)"/><circle cx="156.7" cy="323.9" r="2.33" fill="url(#s2)"/><circle cx="461.0" cy="329.9" r="2.33" fill="url(#s2)"/><circle cx="436.8" cy="308.2" r="2.33" fill="url(#s5)"/><circle cx="470.1" cy="314.3" r="2.33" fill="url(#s0)"/><circle cx="253.0" cy="201.4" r="2.33" fill="url(#s5)"/><circle cx="153.6" cy="328.9" r="2.33" fill="url(#s1)"/><circle cx="232.8" cy="193.7" r="2.33" fill="url(#s5)"/><circle cx="312.7" cy="204.5" r="2.33" fill="url(#s5)"/><circle cx="335.4" cy="197.1" r="2.33" fill="url(#s5)"/><circle cx="159.6" cy="318.0" r="2.33" fill="url(#s3)"/><circle cx="136.8" cy="325.3" r="2.33" fill="url(#s1)"/><circle cx="286.4" cy="206.9" r="2.33" fill="url(#s5)"/><circle cx="164.7" cy="288.1" r="2.33" fill="url(#s1)"/><circle cx="423.9" cy="245.3" r="2.33" fill="url(#s2)"/><circle cx="133.2" cy="320.5" r="2.33" fill="url(#s1)"/><circle cx="140.3" cy="329.4" r="2.33" fill="url(#s0)"/><circle cx="424.5" cy="254.7" r="2.33" fill="url(#s2)"/><circle cx="423.5" cy="235.3" r="2.33" fill="url(#s1)"/><circle cx="150.3" cy="332.8" r="2.33" fill="url(#s0)"/><circle cx="319.3" cy="202.4" r="2.33" fill="url(#s5)"/><circle cx="263.1" cy="203.5" r="2.33" fill="url(#s5)"/><circle cx="222.6" cy="188.3" r="2.33" fill="url(#s5)"/><circle cx="361.4" cy="183.1" r="2.33" fill="url(#s5)"/><circle cx="473.5" cy="307.4" r="2.33" fill="url(#s0)"/><circle cx="458.3" cy="333.4" r="2.33" fill="url(#s5)"/><circle cx="351.8" cy="188.6" r="2.33" fill="url(#s5)"/><circle cx="371.0" cy="176.8" r="2.33" fill="url(#s5)"/><circle cx="429.6" cy="287.4" r="2.33" fill="url(#s5)"/><circle cx="143.6" cy="332.9" r="2.33" fill="url(#s0)"/><circle cx="425.1" cy="263.4" r="2.33" fill="url(#s3)"/><circle cx="279.7" cy="205.9" r="2.33" fill="url(#s5)"/><circle cx="448.3" cy="329.2" r="2.33" fill="url(#s5)"/><circle cx="444.7" cy="324.7" r="2.33" fill="url(#s5)"/><circle cx="433.7" cy="301.3" r="2.33" fill="url(#s5)"/><circle cx="162.4" cy="311.1" r="2.33" fill="url(#s2)"/><circle cx="164.9" cy="296.0" r="2.33" fill="url(#s1)"/><circle cx="452.0" cy="333.0" r="2.34" fill="url(#s5)"/><circle cx="441.3" cy="319.4" r="2.34" fill="url(#s5)"/><circle cx="325.9" cy="199.8" r="2.34" fill="url(#s5)"/><circle cx="342.2" cy="193.1" r="2.34" fill="url(#s5)"/><circle cx="425.8" cy="271.5" r="2.34" fill="url(#s4)"/><circle cx="212.2" cy="182.1" r="2.34" fill="url(#s5)"/><circle cx="146.8" cy="335.7" r="2.34" fill="url(#s0)"/><circle cx="477.2" cy="299.9" r="2.34" fill="url(#s0)"/><circle cx="246.2" cy="197.6" r="2.34" fill="url(#s5)"/><circle cx="273.1" cy="204.4" r="2.34" fill="url(#s5)"/><circle cx="465.4" cy="330.3" r="2.34" fill="url(#s0)"/><circle cx="156.4" cy="329.4" r="2.34" fill="url(#s3)"/><circle cx="236.0" cy="193.5" r="2.34" fill="url(#s5)"/><circle cx="438.1" cy="313.5" r="2.34" fill="url(#s5)"/><circle cx="468.5" cy="324.9" r="2.34" fill="url(#s0)"/><circle cx="455.8" cy="336.0" r="2.34" fill="url(#s5)"/><circle cx="159.4" cy="323.8" r="2.34" fill="url(#s5)"/><circle cx="166.6" cy="269.2" r="2.34" fill="url(#s1)"/><circle cx="166.1" cy="259.3" r="2.34" fill="url(#s0)"/><circle cx="256.3" cy="200.5" r="2.34" fill="url(#s5)"/><circle cx="153.2" cy="334.1" r="2.34" fill="url(#s1)"/><circle cx="164.9" cy="303.3" r="2.34" fill="url(#s2)"/><circle cx="462.5" cy="334.8" r="2.34" fill="url(#s2)"/><circle cx="167.0" cy="278.4" r="2.34" fill="url(#s1)"/><circle cx="430.6" cy="293.9" r="2.34" fill="url(#s5)"/><circle cx="332.6" cy="196.6" r="2.34" fill="url(#s5)"/><circle cx="225.7" cy="188.5" r="2.34" fill="url(#s5)"/><circle cx="471.9" cy="318.6" r="2.34" fill="url(#s0)"/><circle cx="358.6" cy="183.5" r="2.34" fill="url(#s5)"/><circle cx="368.3" cy="177.5" r="2.34" fill="url(#s5)"/><circle cx="303.1" cy="204.2" r="2.34" fill="url(#s5)"/><circle cx="162.2" cy="317.4" r="2.34" fill="url(#s5)"/><circle cx="426.7" cy="279.0" r="2.34" fill="url(#s5)"/><circle cx="296.4" cy="204.8" r="2.34" fill="url(#s5)"/><circle cx="309.7" cy="203.0" r="2.35" fill="url(#s5)"/><circle cx="378.1" cy="171.0" r="2.35" fill="url(#s5)"/><circle cx="434.9" cy="307.0" r="2.35" fill="url(#s5)"/><circle cx="349.0" cy="188.7" r="2.35" fill="url(#s5)"/><circle cx="167.3" cy="286.9" r="2.35" fill="url(#s1)"/><circle cx="149.8" cy="337.8" r="2.35" fill="url(#s0)"/><circle cx="289.8" cy="204.8" r="2.35" fill="url(#s5)"/><circle cx="266.4" cy="202.3" r="2.35" fill="url(#s5)"/><circle cx="421.8" cy="244.4" r="2.35" fill="url(#s2)"/><circle cx="421.3" cy="234.7" r="2.35" fill="url(#s1)"/><circle cx="136.0" cy="329.3" r="2.35" fill="url(#s0)"/><circle cx="139.6" cy="333.7" r="2.35" fill="url(#s0)"/><circle cx="459.9" cy="338.3" r="2.35" fill="url(#s5)"/><circle cx="316.4" cy="201.3" r="2.35" fill="url(#s5)"/><circle cx="420.9" cy="224.3" r="2.35" fill="url(#s1)"/><circle cx="422.4" cy="253.6" r="2.35" fill="url(#s2)"/><circle cx="215.3" cy="182.6" r="2.35" fill="url(#s5)"/><circle cx="132.3" cy="324.1" r="2.35" fill="url(#s1)"/><circle cx="446.2" cy="329.4" r="2.35" fill="url(#s5)"/><circle cx="475.4" cy="311.5" r="2.35" fill="url(#s0)"/><circle cx="449.8" cy="333.9" r="2.35" fill="url(#s5)"/><circle cx="142.9" cy="337.5" r="2.35" fill="url(#s0)"/><circle cx="283.2" cy="204.2" r="2.35" fill="url(#s5)"/><circle cx="339.4" cy="193.0" r="2.35" fill="url(#s5)"/><circle cx="442.8" cy="324.3" r="2.35" fill="url(#s5)"/><circle cx="164.9" cy="310.1" r="2.35" fill="url(#s3)"/><circle cx="453.5" cy="337.7" r="2.35" fill="url(#s5)"/><circle cx="167.4" cy="294.7" r="2.35" fill="url(#s2)"/><circle cx="423.1" cy="262.2" r="2.35" fill="url(#s3)"/><circle cx="239.2" cy="193.4" r="2.35" fill="url(#s5)"/><circle cx="249.4" cy="197.1" r="2.35" fill="url(#s5)"/><circle cx="323.0" cy="199.0" r="2.35" fill="url(#s5)"/><circle cx="427.7" cy="285.9" r="2.35" fill="url(#s5)"/><circle cx="128.4" cy="318.2" r="2.35" fill="url(#s1)"/><circle cx="156.0" cy="334.7" r="2.35" fill="url(#s5)"/><circle cx="159.0" cy="329.4" r="2.35" fill="url(#s5)"/><circle cx="431.8" cy="299.9" r="2.35" fill="url(#s5)"/><circle cx="146.2" cy="340.5" r="2.36" fill="url(#s0)"/><circle cx="439.4" cy="318.6" r="2.36" fill="url(#s5)"/><circle cx="467.0" cy="335.3" r="2.36" fill="url(#s0)"/><circle cx="228.9" cy="188.6" r="2.36" fill="url(#s5)"/><circle cx="276.5" cy="203.0" r="2.36" fill="url(#s5)"/><circle cx="470.2" cy="329.8" r="2.36" fill="url(#s0)"/><circle cx="259.6" cy="199.7" r="2.36" fill="url(#s5)"/><circle cx="365.6" cy="178.4" r="2.36" fill="url(#s5)"/><circle cx="457.4" cy="340.8" r="2.36" fill="url(#s5)"/><circle cx="152.7" cy="339.2" r="2.36" fill="url(#s2)"/><circle cx="375.4" cy="172.1" r="2.36" fill="url(#s5)"/><circle cx="355.9" cy="184.0" r="2.36" fill="url(#s5)"/><circle cx="161.9" cy="323.3" r="2.36" fill="url(#s5)"/><circle cx="464.1" cy="339.8" r="2.36" fill="url(#s1)"/><circle cx="168.7" cy="258.2" r="2.36" fill="url(#s0)"/><circle cx="423.8" cy="270.1" r="2.36" fill="url(#s5)"/><circle cx="479.1" cy="303.6" r="2.36" fill="url(#s0)"/><circle cx="169.2" cy="268.0" r="2.36" fill="url(#s1)"/><circle cx="329.8" cy="196.1" r="2.36" fill="url(#s5)"/><circle cx="473.5" cy="323.4" r="2.36" fill="url(#s0)"/><circle cx="168.1" cy="247.8" r="2.36" fill="url(#s0)"/><circle cx="218.5" cy="183.1" r="2.36" fill="url(#s5)"/><circle cx="346.2" cy="188.9" r="2.36" fill="url(#s5)"/><circle cx="167.4" cy="302.0" r="2.36" fill="url(#s2)"/><circle cx="169.6" cy="277.0" r="2.36" fill="url(#s1)"/><circle cx="436.2" cy="312.3" r="2.36" fill="url(#s5)"/><circle cx="164.7" cy="316.4" r="2.36" fill="url(#s5)"/><circle cx="269.7" cy="201.3" r="2.36" fill="url(#s5)"/><circle cx="149.2" cy="342.7" r="2.36" fill="url(#s0)"/><circle cx="300.0" cy="202.5" r="2.36" fill="url(#s5)"/><circle cx="461.5" cy="343.2" r="2.36" fill="url(#s5)"/><circle cx="419.1" cy="234.0" r="2.36" fill="url(#s1)"/><circle cx="306.7" cy="201.6" r="2.36" fill="url(#s5)"/><circle cx="428.7" cy="292.3" r="2.36" fill="url(#s5)"/><circle cx="418.6" cy="224.0" r="2.36" fill="url(#s1)"/><circle cx="169.8" cy="285.5" r="2.37" fill="url(#s1)"/><circle cx="138.8" cy="338.2" r="2.37" fill="url(#s0)"/><circle cx="419.6" cy="243.6" r="2.37" fill="url(#s2)"/><circle cx="293.3" cy="202.8" r="2.37" fill="url(#s5)"/><circle cx="135.2" cy="333.5" r="2.37" fill="url(#s0)"/><circle cx="242.5" cy="193.2" r="2.37" fill="url(#s5)"/><circle cx="424.7" cy="277.4" r="2.37" fill="url(#s5)"/><circle cx="336.5" cy="192.9" r="2.37" fill="url(#s5)"/><circle cx="313.4" cy="200.2" r="2.37" fill="url(#s5)"/><circle cx="208.0" cy="177.0" r="2.37" fill="url(#s5)"/><circle cx="418.2" cy="213.5" r="2.37" fill="url(#s0)"/><circle cx="447.8" cy="334.0" r="2.37" fill="url(#s5)"/><circle cx="477.2" cy="316.0" r="2.37" fill="url(#s0)"/><circle cx="252.7" cy="196.7" r="2.37" fill="url(#s5)"/><circle cx="142.3" cy="342.2" r="2.37" fill="url(#s0)"/><circle cx="451.4" cy="338.5" r="2.37" fill="url(#s5)"/><circle cx="232.1" cy="188.8" r="2.37" fill="url(#s5)"/><circle cx="420.3" cy="252.5" r="2.37" fill="url(#s3)"/><circle cx="286.6" cy="202.5" r="2.37" fill="url(#s5)"/><circle cx="433.0" cy="305.5" r="2.37" fill="url(#s5)"/><circle cx="372.6" cy="173.3" r="2.37" fill="url(#s5)"/><circle cx="444.3" cy="329.0" r="2.37" fill="url(#s5)"/><circle cx="362.8" cy="179.2" r="2.37" fill="url(#s5)"/><circle cx="382.4" cy="167.2" r="2.37" fill="url(#s5)"/><circle cx="483.0" cy="294.9" r="2.37" fill="url(#s0)"/><circle cx="131.4" cy="327.9" r="2.37" fill="url(#s1)"/><circle cx="158.6" cy="334.8" r="2.37" fill="url(#s5)"/><circle cx="455.2" cy="342.3" r="2.37" fill="url(#s5)"/><circle cx="320.1" cy="198.2" r="2.37" fill="url(#s5)"/><circle cx="155.5" cy="339.9" r="2.37" fill="url(#s5)"/><circle cx="353.1" cy="184.6" r="2.37" fill="url(#s5)"/><circle cx="167.4" cy="308.7" r="2.37" fill="url(#s5)"/><circle cx="468.6" cy="340.6" r="2.37" fill="url(#s0)"/><circle cx="262.9" cy="199.0" r="2.37" fill="url(#s5)"/><circle cx="221.7" cy="183.6" r="2.37" fill="url(#s5)"/><circle cx="471.8" cy="335.1" r="2.37" fill="url(#s0)"/><circle cx="161.6" cy="328.9" r="2.37" fill="url(#s5)"/><circle cx="169.9" cy="293.2" r="2.37" fill="url(#s2)"/><circle cx="440.9" cy="323.4" r="2.37" fill="url(#s5)"/><circle cx="145.6" cy="345.3" r="2.37" fill="url(#s0)"/><circle cx="421.0" cy="260.8" r="2.37" fill="url(#s4)"/><circle cx="279.9" cy="201.7" r="2.37" fill="url(#s5)"/><circle cx="152.2" cy="344.2" r="2.37" fill="url(#s3)"/><circle cx="465.7" cy="344.9" r="2.37" fill="url(#s1)"/><circle cx="459.0" cy="345.6" r="2.37" fill="url(#s5)"/><circle cx="343.4" cy="189.2" r="2.37" fill="url(#s5)"/><circle cx="127.4" cy="321.6" r="2.37" fill="url(#s1)"/><circle cx="326.8" cy="195.8" r="2.37" fill="url(#s5)"/><circle cx="171.4" cy="257.1" r="2.38" fill="url(#s0)"/><circle cx="475.2" cy="328.5" r="2.38" fill="url(#s0)"/><circle cx="425.7" cy="284.2" r="2.38" fill="url(#s5)"/><circle cx="164.5" cy="322.3" r="2.38" fill="url(#s5)"/><circle cx="171.8" cy="266.7" r="2.38" fill="url(#s1)"/><circle cx="170.8" cy="246.9" r="2.38" fill="url(#s0)"/><circle cx="481.0" cy="307.7" r="2.38" fill="url(#s0)"/><circle cx="211.2" cy="177.8" r="2.38" fill="url(#s5)"/><circle cx="437.6" cy="317.2" r="2.38" fill="url(#s5)"/><circle cx="429.9" cy="298.2" r="2.38" fill="url(#s5)"/><circle cx="273.1" cy="200.3" r="2.38" fill="url(#s5)"/><circle cx="245.7" cy="193.2" r="2.38" fill="url(#s5)"/><circle cx="170.2" cy="236.1" r="2.38" fill="url(#s0)"/><circle cx="379.7" cy="168.7" r="2.38" fill="url(#s5)"/><circle cx="421.8" cy="268.6" r="2.38" fill="url(#s5)"/><circle cx="172.1" cy="275.6" r="2.38" fill="url(#s1)"/><circle cx="235.4" cy="189.1" r="2.38" fill="url(#s5)"/><circle cx="369.9" cy="174.5" r="2.38" fill="url(#s5)"/><circle cx="148.7" cy="347.7" r="2.38" fill="url(#s1)"/><circle cx="170.0" cy="300.4" r="2.38" fill="url(#s2)"/><circle cx="360.0" cy="180.2" r="2.38" fill="url(#s5)"/><circle cx="463.1" cy="348.2" r="2.38" fill="url(#s5)"/><circle cx="256.0" cy="196.3" r="2.38" fill="url(#s5)"/><circle cx="416.3" cy="223.7" r="2.38" fill="url(#s1)"/><circle cx="333.6" cy="192.8" r="2.38" fill="url(#s5)"/><circle cx="416.9" cy="233.5" r="2.38" fill="url(#s1)"/><circle cx="415.9" cy="213.6" r="2.38" fill="url(#s0)"/><circle cx="167.2" cy="315.0" r="2.38" fill="url(#s5)"/><circle cx="225.0" cy="184.2" r="2.38" fill="url(#s5)"/><circle cx="123.2" cy="314.7" r="2.38" fill="url(#s1)"/><circle cx="138.1" cy="343.0" r="2.38" fill="url(#s0)"/><circle cx="303.6" cy="200.4" r="2.38" fill="url(#s5)"/><circle cx="478.9" cy="320.9" r="2.38" fill="url(#s0)"/><circle cx="415.5" cy="203.2" r="2.38" fill="url(#s0)"/><circle cx="350.3" cy="185.2" r="2.38" fill="url(#s5)"/><circle cx="296.9" cy="200.9" r="2.38" fill="url(#s5)"/><circle cx="417.5" cy="242.7" r="2.38" fill="url(#s2)"/><circle cx="434.4" cy="310.6" r="2.38" fill="url(#s5)"/><circle cx="134.4" cy="338.0" r="2.38" fill="url(#s0)"/><circle cx="310.4" cy="199.3" r="2.38" fill="url(#s5)"/><circle cx="141.7" cy="347.1" r="2.38" fill="url(#s0)"/><circle cx="172.4" cy="283.9" r="2.38" fill="url(#s1)"/><circle cx="449.4" cy="338.4" r="2.39" fill="url(#s5)"/><circle cx="158.2" cy="339.9" r="2.39" fill="url(#s5)"/><circle cx="290.1" cy="201.0" r="2.39" fill="url(#s5)"/><circle cx="453.1" cy="342.9" r="2.39" fill="url(#s5)"/><circle cx="470.2" cy="346.0" r="2.39" fill="url(#s0)"/><circle cx="266.3" cy="198.4" r="2.39" fill="url(#s5)"/><circle cx="473.3" cy="340.6" r="2.39" fill="url(#s0)"/><circle cx="155.0" cy="344.9" r="2.39" fill="url(#s5)"/><circle cx="161.2" cy="334.2" r="2.39" fill="url(#s5)"/><circle cx="317.1" cy="197.6" r="2.39" fill="url(#s5)"/><circle cx="214.5" cy="178.7" r="2.39" fill="url(#s5)"/><circle cx="445.9" cy="333.4" r="2.39" fill="url(#s5)"/><circle cx="426.8" cy="290.4" r="2.39" fill="url(#s5)"/><circle cx="418.1" cy="251.4" r="2.39" fill="url(#s3)"/><circle cx="422.8" cy="275.7" r="2.39" fill="url(#s5)"/><circle cx="386.7" cy="164.8" r="2.39" fill="url(#s2)"/><circle cx="456.8" cy="346.9" r="2.39" fill="url(#s5)"/><circle cx="130.5" cy="332.1" r="2.39" fill="url(#s0)"/><circle cx="485.0" cy="298.8" r="2.39" fill="url(#s0)"/><circle cx="340.5" cy="189.5" r="2.39" fill="url(#s5)"/><circle cx="145.0" cy="350.3" r="2.39" fill="url(#s0)"/><circle cx="283.4" cy="200.4" r="2.39" fill="url(#s5)"/><circle cx="376.9" cy="170.2" r="2.39" fill="url(#s5)"/><circle cx="467.3" cy="350.2" r="2.39" fill="url(#s1)"/><circle cx="442.5" cy="327.8" r="2.39" fill="url(#s5)"/><circle cx="164.2" cy="327.9" r="2.39" fill="url(#s5)"/><circle cx="476.8" cy="334.0" r="2.39" fill="url(#s0)"/><circle cx="151.6" cy="349.2" r="2.39" fill="url(#s4)"/><circle cx="169.9" cy="307.1" r="2.39" fill="url(#s5)"/><circle cx="323.9" cy="195.5" r="2.39" fill="url(#s5)"/><circle cx="367.1" cy="175.8" r="2.39" fill="url(#s5)"/><circle cx="172.5" cy="291.6" r="2.39" fill="url(#s2)"/><circle cx="238.7" cy="189.4" r="2.39" fill="url(#s5)"/><circle cx="431.2" cy="303.6" r="2.39" fill="url(#s5)"/><circle cx="203.9" cy="173.1" r="2.39" fill="url(#s5)"/><circle cx="249.1" cy="193.2" r="2.39" fill="url(#s5)"/><circle cx="460.7" cy="350.3" r="2.39" fill="url(#s5)"/><circle cx="174.1" cy="256.0" r="2.39" fill="url(#s0)"/><circle cx="173.6" cy="246.1" r="2.39" fill="url(#s0)"/><circle cx="357.2" cy="181.1" r="2.39" fill="url(#s5)"/><circle cx="418.9" cy="259.5" r="2.39" fill="url(#s4)"/><circle cx="482.8" cy="312.5" r="2.39" fill="url(#s0)"/><circle cx="228.3" cy="184.8" r="2.39" fill="url(#s5)"/><circle cx="276.6" cy="199.4" r="2.39" fill="url(#s5)"/><circle cx="173.0" cy="235.5" r="2.39" fill="url(#s0)"/><circle cx="174.5" cy="265.4" r="2.39" fill="url(#s1)"/><circle cx="439.1" cy="321.8" r="2.39" fill="url(#s5)"/><circle cx="259.4" cy="196.0" r="2.39" fill="url(#s5)"/><circle cx="126.4" cy="325.5" r="2.39" fill="url(#s1)"/><circle cx="167.0" cy="320.9" r="2.40" fill="url(#s5)"/><circle cx="330.7" cy="192.9" r="2.40" fill="url(#s5)"/><circle cx="347.4" cy="185.9" r="2.40" fill="url(#s5)"/><circle cx="148.1" cy="352.7" r="2.40" fill="url(#s1)"/><circle cx="413.5" cy="213.7" r="2.40" fill="url(#s0)"/><circle cx="217.8" cy="179.7" r="2.40" fill="url(#s5)"/><circle cx="413.0" cy="203.6" r="2.40" fill="url(#s0)"/><circle cx="412.5" cy="193.6" r="2.40" fill="url(#s0)"/><circle cx="414.0" cy="223.5" r="2.40" fill="url(#s1)"/><circle cx="172.3" cy="224.5" r="2.40" fill="url(#s0)"/><circle cx="383.9" cy="166.6" r="2.40" fill="url(#s2)"/><circle cx="464.8" cy="353.2" r="2.40" fill="url(#s5)"/><circle cx="480.5" cy="326.4" r="2.40" fill="url(#s0)"/><circle cx="174.8" cy="274.1" r="2.40" fill="url(#s1)"/><circle cx="423.8" cy="282.3" r="2.40" fill="url(#s5)"/><circle cx="414.6" cy="232.9" r="2.40" fill="url(#s1)"/><circle cx="137.5" cy="348.0" r="2.40" fill="url(#s0)"/><circle cx="374.1" cy="171.7" r="2.40" fill="url(#s5)"/><circle cx="474.9" cy="346.4" r="2.40" fill="url(#s0)"/><circle cx="419.8" cy="267.0" r="2.40" fill="url(#s5)"/><circle cx="435.8" cy="315.4" r="2.40" fill="url(#s5)"/><circle cx="172.5" cy="298.7" r="2.40" fill="url(#s3)"/><circle cx="428.1" cy="296.1" r="2.40" fill="url(#s5)"/><circle cx="269.7" cy="197.8" r="2.40" fill="url(#s5)"/><circle cx="471.8" cy="351.6" r="2.40" fill="url(#s0)"/><circle cx="141.0" cy="352.2" r="2.40" fill="url(#s0)"/><circle cx="207.2" cy="174.3" r="2.40" fill="url(#s5)"/><circle cx="300.5" cy="199.2" r="2.40" fill="url(#s5)"/><circle cx="133.7" cy="342.8" r="2.40" fill="url(#s0)"/><circle cx="307.3" cy="198.4" r="2.40" fill="url(#s5)"/><circle cx="489.2" cy="289.2" r="2.40" fill="url(#s0)"/><circle cx="364.2" cy="177.1" r="2.40" fill="url(#s5)"/><circle cx="415.2" cy="241.8" r="2.40" fill="url(#s2)"/><circle cx="337.6" cy="189.9" r="2.40" fill="url(#s5)"/><circle cx="390.9" cy="164.0" r="2.40" fill="url(#s0)"/><circle cx="157.7" cy="344.9" r="2.40" fill="url(#s5)"/><circle cx="293.7" cy="199.5" r="2.40" fill="url(#s5)"/><circle cx="169.7" cy="313.3" r="2.40" fill="url(#s5)"/><circle cx="160.8" cy="339.3" r="2.40" fill="url(#s5)"/><circle cx="314.1" cy="197.1" r="2.40" fill="url(#s5)"/><circle cx="242.0" cy="189.8" r="2.40" fill="url(#s5)"/><circle cx="122.1" cy="318.1" r="2.40" fill="url(#s1)"/><circle cx="154.4" cy="349.8" r="2.40" fill="url(#s5)"/><circle cx="174.9" cy="282.2" r="2.40" fill="url(#s1)"/><circle cx="478.3" cy="339.9" r="2.40" fill="url(#s0)"/><circle cx="231.6" cy="185.5" r="2.40" fill="url(#s5)"/><circle cx="252.5" cy="193.2" r="2.40" fill="url(#s5)"/><circle cx="354.4" cy="182.1" r="2.40" fill="url(#s5)"/><circle cx="451.2" cy="342.5" r="2.41" fill="url(#s5)"/><circle cx="454.8" cy="347.1" r="2.41" fill="url(#s5)"/><circle cx="286.9" cy="199.3" r="2.41" fill="url(#s5)"/><circle cx="144.4" cy="355.4" r="2.41" fill="url(#s0)"/><circle cx="163.7" cy="333.1" r="2.41" fill="url(#s5)"/><circle cx="469.0" cy="355.5" r="2.41" fill="url(#s1)"/><circle cx="486.9" cy="303.2" r="2.41" fill="url(#s0)"/><circle cx="129.7" cy="336.7" r="2.41" fill="url(#s0)"/><circle cx="320.9" cy="195.3" r="2.41" fill="url(#s5)"/><circle cx="447.6" cy="337.5" r="2.41" fill="url(#s5)"/><circle cx="416.0" cy="250.2" r="2.41" fill="url(#s3)"/><circle cx="221.1" cy="180.7" r="2.41" fill="url(#s5)"/><circle cx="458.6" cy="351.3" r="2.41" fill="url(#s5)"/><circle cx="381.1" cy="168.3" r="2.41" fill="url(#s2)"/><circle cx="432.6" cy="308.6" r="2.41" fill="url(#s5)"/><circle cx="151.0" cy="354.1" r="2.41" fill="url(#s5)"/><circle cx="409.4" cy="185.0" r="2.41" fill="url(#s0)"/><circle cx="262.8" cy="195.8" r="2.41" fill="url(#s5)"/><circle cx="484.5" cy="317.7" r="2.41" fill="url(#s0)"/><circle cx="176.3" cy="245.2" r="2.41" fill="url(#s0)"/><circle cx="344.5" cy="186.6" r="2.41" fill="url(#s5)"/><circle cx="444.2" cy="332.0" r="2.41" fill="url(#s5)"/><circle cx="280.1" cy="198.5" r="2.41" fill="url(#s5)"/><circle cx="175.8" cy="235.0" r="2.41" fill="url(#s0)"/><circle cx="420.8" cy="273.9" r="2.41" fill="url(#s5)"/><circle cx="176.8" cy="254.9" r="2.41" fill="url(#s1)"/><circle cx="409.9" cy="194.5" r="2.41" fill="url(#s0)"/><circle cx="371.3" cy="173.3" r="2.41" fill="url(#s5)"/><circle cx="210.5" cy="175.6" r="2.41" fill="url(#s5)"/><circle cx="462.5" cy="354.9" r="2.41" fill="url(#s5)"/><circle cx="166.6" cy="326.4" r="2.41" fill="url(#s5)"/><circle cx="327.7" cy="193.0" r="2.41" fill="url(#s5)"/><circle cx="424.9" cy="288.4" r="2.41" fill="url(#s5)"/><circle cx="410.5" cy="204.2" r="2.41" fill="url(#s0)"/><circle cx="175.2" cy="224.3" r="2.41" fill="url(#s0)"/><circle cx="172.4" cy="305.2" r="2.41" fill="url(#s5)"/><circle cx="388.1" cy="165.9" r="2.41" fill="url(#s0)"/><circle cx="482.0" cy="332.3" r="2.41" fill="url(#s0)"/><circle cx="411.0" cy="213.8" r="2.41" fill="url(#s0)"/><circle cx="175.0" cy="289.8" r="2.41" fill="url(#s2)"/><circle cx="394.9" cy="164.8" r="2.41" fill="url(#s0)"/><circle cx="177.2" cy="264.1" r="2.41" fill="url(#s1)"/><circle cx="199.9" cy="170.7" r="2.41" fill="url(#s2)"/><circle cx="361.4" cy="178.4" r="2.41" fill="url(#s5)"/><circle cx="416.8" cy="258.1" r="2.41" fill="url(#s4)"/><circle cx="411.6" cy="223.3" r="2.41" fill="url(#s1)"/><circle cx="440.8" cy="326.1" r="2.41" fill="url(#s5)"/><circle cx="125.5" cy="329.8" r="2.41" fill="url(#s1)"/><circle cx="147.5" cy="357.7" r="2.41" fill="url(#s2)"/><circle cx="174.6" cy="213.4" r="2.41" fill="url(#s0)"/><circle cx="117.6" cy="310.1" r="2.42" fill="url(#s1)"/><circle cx="273.2" cy="197.3" r="2.42" fill="url(#s5)"/><circle cx="245.4" cy="190.2" r="2.42" fill="url(#s5)"/><circle cx="234.9" cy="186.2" r="2.42" fill="url(#s5)"/><circle cx="466.5" cy="358.0" r="2.42" fill="url(#s2)"/><circle cx="406.1" cy="177.6" r="2.42" fill="url(#s0)"/><circle cx="136.9" cy="353.2" r="2.42" fill="url(#s0)"/><circle cx="429.4" cy="301.4" r="2.42" fill="url(#s5)"/><circle cx="334.6" cy="190.4" r="2.42" fill="url(#s5)"/><circle cx="412.2" cy="232.4" r="2.42" fill="url(#s1)"/><circle cx="351.5" cy="183.2" r="2.42" fill="url(#s5)"/><circle cx="169.5" cy="319.1" r="2.42" fill="url(#s5)"/><circle cx="378.3" cy="170.2" r="2.42" fill="url(#s1)"/><circle cx="224.4" cy="181.7" r="2.42" fill="url(#s5)"/><circle cx="255.9" cy="193.4" r="2.42" fill="url(#s5)"/><circle cx="177.4" cy="272.6" r="2.42" fill="url(#s1)"/><circle cx="140.4" cy="357.4" r="2.42" fill="url(#s0)"/><circle cx="133.1" cy="347.9" r="2.42" fill="url(#s0)"/><circle cx="398.8" cy="167.4" r="2.42" fill="url(#s0)"/><circle cx="304.2" cy="197.7" r="2.42" fill="url(#s5)"/><circle cx="437.4" cy="319.8" r="2.42" fill="url(#s5)"/><circle cx="402.5" cy="171.7" r="2.42" fill="url(#s0)"/><circle cx="297.3" cy="198.3" r="2.42" fill="url(#s5)"/><circle cx="213.8" cy="176.9" r="2.42" fill="url(#s5)"/><circle cx="311.0" cy="196.7" r="2.42" fill="url(#s5)"/><circle cx="406.7" cy="186.2" r="2.42" fill="url(#s0)"/><circle cx="157.1" cy="349.7" r="2.42" fill="url(#s5)"/><circle cx="413.0" cy="241.0" r="2.42" fill="url(#s2)"/><circle cx="368.4" cy="174.9" r="2.42" fill="url(#s4)"/><circle cx="491.2" cy="293.2" r="2.42" fill="url(#s0)"/><circle cx="160.2" cy="344.2" r="2.42" fill="url(#s5)"/><circle cx="385.3" cy="167.9" r="2.42" fill="url(#s0)"/><circle cx="290.5" cy="198.3" r="2.42" fill="url(#s5)"/><circle cx="421.8" cy="280.3" r="2.42" fill="url(#s5)"/><circle cx="203.2" cy="172.2" r="2.42" fill="url(#s2)"/><circle cx="317.9" cy="195.2" r="2.42" fill="url(#s5)"/><circle cx="175.0" cy="296.7" r="2.42" fill="url(#s3)"/><circle cx="392.1" cy="166.9" r="2.42" fill="url(#s0)"/><circle cx="266.3" cy="195.6" r="2.42" fill="url(#s5)"/><circle cx="417.7" cy="265.4" r="2.42" fill="url(#s5)"/><circle cx="153.8" cy="354.6" r="2.42" fill="url(#s5)"/><circle cx="341.6" cy="187.4" r="2.42" fill="url(#s5)"/><circle cx="488.7" cy="308.2" r="2.42" fill="url(#s0)"/><circle cx="407.4" cy="195.4" r="2.42" fill="url(#s0)"/><circle cx="143.8" cy="360.6" r="2.42" fill="url(#s0)"/><circle cx="486.0" cy="323.5" r="2.42" fill="url(#s0)"/><circle cx="163.3" cy="338.1" r="2.42" fill="url(#s5)"/><circle cx="129.0" cy="341.7" r="2.42" fill="url(#s0)"/><circle cx="177.6" cy="280.5" r="2.42" fill="url(#s2)"/><circle cx="121.1" cy="322.1" r="2.42" fill="url(#s1)"/><circle cx="358.5" cy="179.8" r="2.42" fill="url(#s5)"/><circle cx="172.2" cy="311.3" r="2.42" fill="url(#s5)"/><circle cx="283.6" cy="197.9" r="2.42" fill="url(#s5)"/><circle cx="408.0" cy="204.7" r="2.42" fill="url(#s0)"/><circle cx="178.7" cy="234.5" r="2.43" fill="url(#s0)"/><circle cx="426.2" cy="293.9" r="2.43" fill="url(#s5)"/><circle cx="324.7" cy="193.2" r="2.43" fill="url(#s5)"/><circle cx="179.2" cy="244.4" r="2.43" fill="url(#s0)"/><circle cx="178.2" cy="224.1" r="2.43" fill="url(#s0)"/><circle cx="434.1" cy="313.1" r="2.43" fill="url(#s5)"/><circle cx="150.4" cy="359.0" r="2.43" fill="url(#s5)"/><circle cx="456.7" cy="351.1" r="2.43" fill="url(#s5)"/><circle cx="238.3" cy="187.0" r="2.43" fill="url(#s5)"/><circle cx="453.0" cy="346.4" r="2.43" fill="url(#s5)"/><circle cx="403.4" cy="179.2" r="2.43" fill="url(#s0)"/><circle cx="413.7" cy="249.1" r="2.43" fill="url(#s3)"/><circle cx="375.4" cy="172.0" r="2.43" fill="url(#s1)"/><circle cx="408.6" cy="214.0" r="2.43" fill="url(#s0)"/><circle cx="248.8" cy="190.7" r="2.43" fill="url(#s5)"/><circle cx="177.6" cy="213.6" r="2.43" fill="url(#s0)"/><circle cx="166.2" cy="331.5" r="2.43" fill="url(#s5)"/><circle cx="227.7" cy="182.7" r="2.43" fill="url(#s5)"/><circle cx="179.6" cy="253.8" r="2.43" fill="url(#s1)"/><circle cx="460.5" cy="355.4" r="2.43" fill="url(#s5)"/><circle cx="396.0" cy="169.4" r="2.43" fill="url(#s0)"/><circle cx="449.5" cy="341.3" r="2.43" fill="url(#s5)"/><circle cx="177.0" cy="203.0" r="2.43" fill="url(#s0)"/><circle cx="348.5" cy="184.3" r="2.43" fill="url(#s5)"/><circle cx="217.1" cy="178.2" r="2.43" fill="url(#s5)"/><circle cx="399.8" cy="173.6" r="2.43" fill="url(#s0)"/><circle cx="276.7" cy="196.9" r="2.43" fill="url(#s5)"/><circle cx="196.0" cy="170.0" r="2.43" fill="url(#s0)"/><circle cx="331.7" cy="190.9" r="2.43" fill="url(#s5)"/><circle cx="409.2" cy="223.1" r="2.43" fill="url(#s1)"/><circle cx="259.3" cy="193.6" r="2.43" fill="url(#s5)"/><circle cx="206.6" cy="173.8" r="2.43" fill="url(#s2)"/><circle cx="464.3" cy="359.3" r="2.43" fill="url(#s2)"/><circle cx="382.4" cy="169.9" r="2.43" fill="url(#s0)"/><circle cx="445.9" cy="335.8" r="2.43" fill="url(#s5)"/><circle cx="365.5" cy="176.6" r="2.43" fill="url(#s4)"/><circle cx="389.3" cy="168.9" r="2.43" fill="url(#s0)"/><circle cx="179.9" cy="262.7" r="2.43" fill="url(#s1)"/><circle cx="404.1" cy="187.5" r="2.43" fill="url(#s0)"/><circle cx="146.9" cy="362.7" r="2.43" fill="url(#s5)"/><circle cx="124.7" cy="334.5" r="2.43" fill="url(#s0)"/><circle cx="136.3" cy="358.7" r="2.43" fill="url(#s0)"/><circle cx="418.7" cy="272.0" r="2.43" fill="url(#s5)"/><circle cx="169.1" cy="324.5" r="2.43" fill="url(#s5)"/><circle cx="177.6" cy="287.8" r="2.43" fill="url(#s2)"/><circle cx="430.8" cy="306.1" r="2.43" fill="url(#s5)"/><circle cx="174.9" cy="303.1" r="2.43" fill="url(#s5)"/><circle cx="409.9" cy="231.9" r="2.43" fill="url(#s1)"/><circle cx="139.8" cy="362.8" r="2.43" fill="url(#s0)"/><circle cx="132.5" cy="353.4" r="2.43" fill="url(#s0)"/><circle cx="414.6" cy="256.7" r="2.43" fill="url(#s5)"/><circle cx="442.5" cy="329.9" r="2.43" fill="url(#s5)"/><circle cx="423.0" cy="286.1" r="2.44" fill="url(#s5)"/><circle cx="338.6" cy="188.3" r="2.44" fill="url(#s5)"/><circle cx="404.7" cy="196.3" r="2.44" fill="url(#s0)"/><circle cx="269.8" cy="195.6" r="2.44" fill="url(#s5)"/><circle cx="355.6" cy="181.2" r="2.44" fill="url(#s5)"/><circle cx="301.0" cy="197.2" r="2.44" fill="url(#s5)"/><circle cx="307.9" cy="196.4" r="2.44" fill="url(#s5)"/><circle cx="116.5" cy="313.6" r="2.44" fill="url(#s1)"/><circle cx="372.6" cy="173.8" r="2.44" fill="url(#s1)"/><circle cx="495.7" cy="282.7" r="2.44" fill="url(#s0)"/><circle cx="294.1" cy="197.5" r="2.44" fill="url(#s5)"/><circle cx="180.1" cy="270.9" r="2.44" fill="url(#s1)"/><circle cx="314.8" cy="195.2" r="2.44" fill="url(#s5)"/><circle cx="241.7" cy="187.8" r="2.44" fill="url(#s5)"/><circle cx="400.6" cy="180.8" r="2.44" fill="url(#s0)"/><circle cx="490.3" cy="313.8" r="2.44" fill="url(#s0)"/><circle cx="393.2" cy="171.4" r="2.44" fill="url(#s0)"/><circle cx="231.1" cy="183.8" r="2.44" fill="url(#s5)"/><circle cx="199.4" cy="171.7" r="2.44" fill="url(#s0)"/><circle cx="493.1" cy="297.9" r="2.44" fill="url(#s0)"/><circle cx="220.5" cy="179.5" r="2.44" fill="url(#s5)"/><circle cx="405.4" cy="205.3" r="2.44" fill="url(#s0)"/><circle cx="252.3" cy="191.2" r="2.44" fill="url(#s5)"/><circle cx="209.9" cy="175.3" r="2.44" fill="url(#s2)"/><circle cx="397.0" cy="175.4" r="2.44" fill="url(#s0)"/><circle cx="410.6" cy="240.2" r="2.44" fill="url(#s2)"/><circle cx="171.9" cy="316.9" r="2.44" fill="url(#s5)"/><circle cx="156.4" cy="354.3" r="2.44" fill="url(#s5)"/><circle cx="287.2" cy="197.3" r="2.44" fill="url(#s5)"/><circle cx="128.4" cy="347.1" r="2.44" fill="url(#s0)"/><circle cx="321.7" cy="193.6" r="2.44" fill="url(#s5)"/><circle cx="439.1" cy="323.7" r="2.44" fill="url(#s5)"/><circle cx="179.6" cy="193.6" r="2.44" fill="url(#s0)"/><circle cx="159.6" cy="348.8" r="2.44" fill="url(#s5)"/><circle cx="181.1" cy="224.0" r="2.44" fill="url(#s0)"/><circle cx="143.1" cy="365.8" r="2.44" fill="url(#s1)"/><circle cx="180.6" cy="213.8" r="2.44" fill="url(#s0)"/><circle cx="379.6" cy="171.9" r="2.44" fill="url(#s0)"/><circle cx="180.1" cy="203.6" r="2.44" fill="url(#s0)"/><circle cx="181.6" cy="234.0" r="2.44" fill="url(#s0)"/><circle cx="386.5" cy="170.9" r="2.44" fill="url(#s0)"/><circle cx="345.6" cy="185.5" r="2.44" fill="url(#s5)"/><circle cx="153.2" cy="359.3" r="2.44" fill="url(#s5)"/><circle cx="192.3" cy="171.1" r="2.44" fill="url(#s0)"/><circle cx="362.6" cy="178.3" r="2.44" fill="url(#s3)"/><circle cx="427.6" cy="298.9" r="2.44" fill="url(#s5)"/><circle cx="162.7" cy="342.8" r="2.44" fill="url(#s5)"/><circle cx="406.0" cy="214.3" r="2.44" fill="url(#s0)"/><circle cx="182.0" cy="243.6" r="2.44" fill="url(#s0)"/><circle cx="262.8" cy="193.8" r="2.44" fill="url(#s5)"/><circle cx="120.2" cy="326.5" r="2.44" fill="url(#s1)"/><circle cx="401.4" cy="188.8" r="2.44" fill="url(#s0)"/><circle cx="328.6" cy="191.5" r="2.44" fill="url(#s5)"/><circle cx="280.3" cy="196.7" r="2.44" fill="url(#s5)"/><circle cx="177.6" cy="294.6" r="2.44" fill="url(#s4)"/><circle cx="415.6" cy="263.7" r="2.44" fill="url(#s5)"/><circle cx="149.7" cy="363.8" r="2.45" fill="url(#s5)"/><circle cx="180.2" cy="278.6" r="2.45" fill="url(#s2)"/><circle cx="419.8" cy="278.2" r="2.45" fill="url(#s5)"/><circle cx="182.4" cy="252.7" r="2.45" fill="url(#s1)"/><circle cx="165.7" cy="336.3" r="2.45" fill="url(#s5)"/><circle cx="435.7" cy="317.2" r="2.45" fill="url(#s5)"/><circle cx="202.7" cy="173.4" r="2.45" fill="url(#s0)"/><circle cx="406.7" cy="223.0" r="2.45" fill="url(#s1)"/><circle cx="411.5" cy="248.0" r="2.45" fill="url(#s3)"/><circle cx="369.6" cy="175.7" r="2.45" fill="url(#s1)"/><circle cx="352.6" cy="182.7" r="2.45" fill="url(#s5)"/><circle cx="390.4" cy="173.4" r="2.45" fill="url(#s0)"/><circle cx="182.4" cy="185.5" r="2.45" fill="url(#s0)"/><circle cx="234.6" cy="184.9" r="2.45" fill="url(#s5)"/><circle cx="223.9" cy="180.9" r="2.45" fill="url(#s4)"/><circle cx="213.3" cy="176.9" r="2.45" fill="url(#s1)"/><circle cx="174.7" cy="309.0" r="2.45" fill="url(#s5)"/><circle cx="335.6" cy="189.2" r="2.45" fill="url(#s5)"/><circle cx="135.7" cy="364.4" r="2.45" fill="url(#s0)"/><circle cx="397.9" cy="182.4" r="2.45" fill="url(#s0)"/><circle cx="402.1" cy="197.3" r="2.45" fill="url(#s0)"/><circle cx="245.2" cy="188.7" r="2.45" fill="url(#s5)"/><circle cx="188.8" cy="174.1" r="2.45" fill="url(#s0)"/><circle cx="273.3" cy="195.6" r="2.45" fill="url(#s5)"/><circle cx="124.0" cy="339.8" r="2.45" fill="url(#s0)"/><circle cx="458.7" cy="354.8" r="2.45" fill="url(#s5)"/><circle cx="394.2" cy="177.3" r="2.45" fill="url(#s0)"/><circle cx="455.0" cy="349.9" r="2.45" fill="url(#s5)"/><circle cx="131.9" cy="359.2" r="2.45" fill="url(#s0)"/><circle cx="462.5" cy="359.3" r="2.45" fill="url(#s1)"/><circle cx="376.7" cy="173.9" r="2.45" fill="url(#s0)"/><circle cx="195.7" cy="172.9" r="2.45" fill="url(#s0)"/><circle cx="383.6" cy="173.0" r="2.45" fill="url(#s0)"/><circle cx="168.7" cy="329.4" r="2.45" fill="url(#s5)"/><circle cx="182.7" cy="261.3" r="2.45" fill="url(#s1)"/><circle cx="146.2" cy="367.7" r="2.45" fill="url(#s5)"/><circle cx="185.5" cy="178.9" r="2.45" fill="url(#s0)"/><circle cx="182.8" cy="194.6" r="2.45" fill="url(#s0)"/><circle cx="255.8" cy="191.8" r="2.45" fill="url(#s5)"/><circle cx="424.3" cy="291.4" r="2.45" fill="url(#s5)"/><circle cx="139.2" cy="368.3" r="2.45" fill="url(#s0)"/><circle cx="111.7" cy="304.6" r="2.45" fill="url(#s1)"/><circle cx="451.4" cy="344.7" r="2.45" fill="url(#s5)"/><circle cx="407.5" cy="231.4" r="2.45" fill="url(#s1)"/><circle cx="304.7" cy="196.3" r="2.45" fill="url(#s5)"/><circle cx="183.2" cy="204.2" r="2.45" fill="url(#s0)"/><circle cx="359.7" cy="180.0" r="2.45" fill="url(#s3)"/><circle cx="311.7" cy="195.3" r="2.45" fill="url(#s5)"/><circle cx="297.8" cy="196.8" r="2.45" fill="url(#s5)"/><circle cx="402.8" cy="206.0" r="2.45" fill="url(#s0)"/><circle cx="432.4" cy="310.4" r="2.45" fill="url(#s5)"/><circle cx="342.6" cy="186.7" r="2.45" fill="url(#s5)"/><circle cx="183.7" cy="214.1" r="2.45" fill="url(#s0)"/><circle cx="447.9" cy="339.2" r="2.45" fill="url(#s5)"/><circle cx="494.9" cy="303.3" r="2.45" fill="url(#s0)"/><circle cx="184.2" cy="223.9" r="2.45" fill="url(#s0)"/><circle cx="318.6" cy="194.0" r="2.45" fill="url(#s5)"/><circle cx="290.9" cy="196.9" r="2.45" fill="url(#s5)"/><circle cx="206.1" cy="175.2" r="2.46" fill="url(#s0)"/><circle cx="180.2" cy="285.7" r="2.46" fill="url(#s3)"/><circle cx="398.7" cy="190.2" r="2.46" fill="url(#s0)"/><circle cx="266.3" cy="194.2" r="2.46" fill="url(#s5)"/><circle cx="127.8" cy="352.9" r="2.46" fill="url(#s0)"/><circle cx="412.4" cy="255.3" r="2.46" fill="url(#s5)"/><circle cx="497.7" cy="287.1" r="2.46" fill="url(#s0)"/><circle cx="416.6" cy="270.1" r="2.46" fill="url(#s5)"/><circle cx="184.6" cy="233.5" r="2.46" fill="url(#s0)"/><circle cx="171.5" cy="322.1" r="2.46" fill="url(#s5)"/><circle cx="216.7" cy="178.5" r="2.46" fill="url(#s1)"/><circle cx="387.5" cy="175.4" r="2.46" fill="url(#s0)"/><circle cx="366.7" cy="177.6" r="2.46" fill="url(#s1)"/><circle cx="177.4" cy="300.8" r="2.46" fill="url(#s5)"/><circle cx="192.1" cy="175.9" r="2.46" fill="url(#s0)"/><circle cx="115.5" cy="317.7" r="2.46" fill="url(#s1)"/><circle cx="325.6" cy="192.2" r="2.46" fill="url(#s5)"/><circle cx="185.7" cy="186.8" r="2.46" fill="url(#s0)"/><circle cx="227.4" cy="182.3" r="2.46" fill="url(#s4)"/><circle cx="182.8" cy="269.3" r="2.46" fill="url(#s1)"/><circle cx="403.5" cy="214.6" r="2.46" fill="url(#s0)"/><circle cx="238.0" cy="186.1" r="2.46" fill="url(#s5)"/><circle cx="283.9" cy="196.5" r="2.46" fill="url(#s5)"/><circle cx="444.4" cy="333.3" r="2.46" fill="url(#s5)"/><circle cx="142.5" cy="371.1" r="2.46" fill="url(#s3)"/><circle cx="349.6" cy="184.2" r="2.46" fill="url(#s4)"/><circle cx="199.0" cy="174.7" r="2.46" fill="url(#s0)"/><circle cx="408.3" cy="239.4" r="2.46" fill="url(#s2)"/><circle cx="395.1" cy="184.1" r="2.46" fill="url(#s0)"/><circle cx="185.0" cy="242.8" r="2.46" fill="url(#s0)"/><circle cx="248.7" cy="189.6" r="2.46" fill="url(#s5)"/><circle cx="188.8" cy="180.5" r="2.46" fill="url(#s0)"/><circle cx="391.4" cy="179.1" r="2.46" fill="url(#s0)"/><circle cx="373.7" cy="175.9" r="2.46" fill="url(#s0)"/><circle cx="380.7" cy="175.1" r="2.46" fill="url(#s0)"/><circle cx="421.1" cy="283.8" r="2.46" fill="url(#s5)"/><circle cx="155.7" cy="358.7" r="2.46" fill="url(#s5)"/><circle cx="429.1" cy="303.4" r="2.46" fill="url(#s5)"/><circle cx="158.9" cy="353.1" r="2.46" fill="url(#s5)"/><circle cx="332.6" cy="190.2" r="2.46" fill="url(#s5)"/><circle cx="399.4" cy="198.4" r="2.46" fill="url(#s0)"/><circle cx="119.4" cy="331.5" r="2.46" fill="url(#s0)"/><circle cx="186.0" cy="195.6" r="2.46" fill="url(#s0)"/><circle cx="152.4" cy="363.8" r="2.46" fill="url(#s5)"/><circle cx="276.9" cy="195.7" r="2.46" fill="url(#s5)"/><circle cx="162.1" cy="347.1" r="2.46" fill="url(#s5)"/><circle cx="259.3" cy="192.5" r="2.46" fill="url(#s5)"/><circle cx="440.9" cy="327.2" r="2.46" fill="url(#s5)"/><circle cx="404.2" cy="223.0" r="2.46" fill="url(#s1)"/><circle cx="356.7" cy="181.7" r="2.46" fill="url(#s2)"/><circle cx="209.5" cy="176.9" r="2.46" fill="url(#s0)"/><circle cx="185.3" cy="251.6" r="2.46" fill="url(#s1)"/><circle cx="174.4" cy="314.5" r="2.46" fill="url(#s5)"/><circle cx="135.2" cy="370.2" r="2.46" fill="url(#s0)"/><circle cx="186.4" cy="204.9" r="2.46" fill="url(#s0)"/><circle cx="131.4" cy="365.3" r="2.46" fill="url(#s0)"/><circle cx="123.4" cy="345.5" r="2.47" fill="url(#s0)"/><circle cx="339.6" cy="188.0" r="2.47" fill="url(#s5)"/><circle cx="149.0" cy="368.4" r="2.47" fill="url(#s5)"/><circle cx="165.1" cy="340.8" r="2.47" fill="url(#s5)"/><circle cx="220.1" cy="180.1" r="2.47" fill="url(#s1)"/><circle cx="195.5" cy="177.6" r="2.47" fill="url(#s0)"/><circle cx="182.9" cy="276.7" r="2.47" fill="url(#s2)"/><circle cx="186.8" cy="214.4" r="2.47" fill="url(#s0)"/><circle cx="384.7" cy="177.5" r="2.47" fill="url(#s0)"/><circle cx="202.4" cy="176.5" r="2.47" fill="url(#s0)"/><circle cx="230.8" cy="183.7" r="2.47" fill="url(#s3)"/><circle cx="413.4" cy="262.0" r="2.47" fill="url(#s5)"/><circle cx="400.1" cy="206.7" r="2.47" fill="url(#s0)"/><circle cx="180.2" cy="292.3" r="2.47" fill="url(#s5)"/><circle cx="409.2" cy="246.9" r="2.47" fill="url(#s3)"/><circle cx="395.9" cy="191.6" r="2.47" fill="url(#s0)"/><circle cx="189.0" cy="188.2" r="2.47" fill="url(#s0)"/><circle cx="363.8" cy="179.6" r="2.47" fill="url(#s1)"/><circle cx="308.5" cy="195.6" r="2.47" fill="url(#s5)"/><circle cx="269.9" cy="194.6" r="2.47" fill="url(#s5)"/><circle cx="301.5" cy="196.3" r="2.47" fill="url(#s5)"/><circle cx="241.5" cy="187.3" r="2.47" fill="url(#s5)"/><circle cx="138.6" cy="373.9" r="2.47" fill="url(#s0)"/><circle cx="437.5" cy="320.8" r="2.47" fill="url(#s5)"/><circle cx="192.2" cy="182.1" r="2.47" fill="url(#s0)"/><circle cx="315.5" cy="194.5" r="2.47" fill="url(#s5)"/><circle cx="187.2" cy="223.9" r="2.47" fill="url(#s0)"/><circle cx="425.8" cy="296.2" r="2.47" fill="url(#s5)"/><circle cx="294.6" cy="196.6" r="2.47" fill="url(#s5)"/><circle cx="370.8" cy="178.0" r="2.47" fill="url(#s0)"/><circle cx="405.0" cy="231.0" r="2.47" fill="url(#s1)"/><circle cx="346.6" cy="185.7" r="2.47" fill="url(#s4)"/><circle cx="377.8" cy="177.2" r="2.47" fill="url(#s0)"/><circle cx="185.5" cy="259.9" r="2.47" fill="url(#s1)"/><circle cx="388.5" cy="181.1" r="2.47" fill="url(#s0)"/><circle cx="392.3" cy="185.8" r="2.47" fill="url(#s0)"/><circle cx="168.1" cy="334.0" r="2.47" fill="url(#s5)"/><circle cx="127.3" cy="359.1" r="2.47" fill="url(#s0)"/><circle cx="417.8" cy="276.0" r="2.47" fill="url(#s5)"/><circle cx="145.5" cy="372.5" r="2.47" fill="url(#s5)"/><circle cx="252.2" cy="190.5" r="2.47" fill="url(#s5)"/><circle cx="322.5" cy="193.1" r="2.47" fill="url(#s5)"/><circle cx="287.6" cy="196.5" r="2.47" fill="url(#s5)"/><circle cx="187.6" cy="233.1" r="2.47" fill="url(#s0)"/><circle cx="213.0" cy="178.7" r="2.47" fill="url(#s0)"/><circle cx="177.2" cy="306.5" r="2.47" fill="url(#s5)"/><circle cx="189.3" cy="196.6" r="2.47" fill="url(#s0)"/><circle cx="400.9" cy="214.9" r="2.47" fill="url(#s0)"/><circle cx="499.6" cy="292.1" r="2.47" fill="url(#s0)"/><circle cx="110.5" cy="308.3" r="2.47" fill="url(#s1)"/><circle cx="329.5" cy="191.3" r="2.47" fill="url(#s5)"/><circle cx="353.7" cy="183.5" r="2.47" fill="url(#s2)"/><circle cx="396.7" cy="199.4" r="2.47" fill="url(#s0)"/><circle cx="262.8" cy="193.2" r="2.47" fill="url(#s5)"/><circle cx="198.9" cy="179.4" r="2.47" fill="url(#s0)"/><circle cx="460.8" cy="358.0" r="2.47" fill="url(#s1)"/><circle cx="502.4" cy="275.9" r="2.47" fill="url(#s0)"/><circle cx="223.6" cy="181.8" r="2.47" fill="url(#s1)"/><circle cx="434.1" cy="314.2" r="2.47" fill="url(#s5)"/><circle cx="205.9" cy="178.3" r="2.48" fill="url(#s0)"/><circle cx="457.1" cy="353.0" r="2.48" fill="url(#s3)"/><circle cx="280.6" cy="196.0" r="2.48" fill="url(#s5)"/><circle cx="171.1" cy="326.9" r="2.48" fill="url(#s5)"/><circle cx="187.9" cy="242.0" r="2.48" fill="url(#s0)"/><circle cx="114.5" cy="322.4" r="2.48" fill="url(#s1)"/><circle cx="189.6" cy="205.6" r="2.48" fill="url(#s0)"/><circle cx="234.3" cy="185.2" r="2.48" fill="url(#s3)"/><circle cx="381.8" cy="179.5" r="2.48" fill="url(#s0)"/><circle cx="192.3" cy="189.5" r="2.48" fill="url(#s0)"/><circle cx="453.5" cy="347.7" r="2.48" fill="url(#s5)"/><circle cx="141.8" cy="376.2" r="2.48" fill="url(#s2)"/><circle cx="336.5" cy="189.3" r="2.48" fill="url(#s5)"/><circle cx="410.1" cy="253.9" r="2.48" fill="url(#s5)"/><circle cx="360.8" cy="181.5" r="2.48" fill="url(#s1)"/><circle cx="182.9" cy="283.6" r="2.48" fill="url(#s3)"/><circle cx="422.4" cy="288.8" r="2.48" fill="url(#s5)"/><circle cx="195.5" cy="183.7" r="2.48" fill="url(#s0)"/><circle cx="405.9" cy="238.7" r="2.48" fill="url(#s2)"/><circle cx="118.7" cy="337.1" r="2.48" fill="url(#s0)"/><circle cx="185.6" cy="267.6" r="2.48" fill="url(#s1)"/><circle cx="245.0" cy="188.5" r="2.48" fill="url(#s5)"/><circle cx="393.1" cy="193.0" r="2.48" fill="url(#s0)"/><circle cx="374.9" cy="179.3" r="2.48" fill="url(#s0)"/><circle cx="367.8" cy="180.0" r="2.48" fill="url(#s0)"/><circle cx="401.7" cy="223.0" r="2.48" fill="url(#s1)"/><circle cx="122.8" cy="351.6" r="2.48" fill="url(#s0)"/><circle cx="130.9" cy="371.5" r="2.48" fill="url(#s0)"/><circle cx="190.0" cy="214.7" r="2.48" fill="url(#s0)"/><circle cx="449.9" cy="342.2" r="2.48" fill="url(#s5)"/><circle cx="414.5" cy="268.1" r="2.48" fill="url(#s5)"/><circle cx="134.6" cy="376.1" r="2.48" fill="url(#s0)"/><circle cx="273.5" cy="195.1" r="2.48" fill="url(#s5)"/><circle cx="385.6" cy="183.0" r="2.48" fill="url(#s0)"/><circle cx="216.4" cy="180.5" r="2.48" fill="url(#s0)"/><circle cx="397.5" cy="207.4" r="2.48" fill="url(#s0)"/><circle cx="343.6" cy="187.3" r="2.48" fill="url(#s3)"/><circle cx="389.4" cy="187.5" r="2.48" fill="url(#s0)"/><circle cx="255.7" cy="191.5" r="2.48" fill="url(#s5)"/><circle cx="180.0" cy="298.3" r="2.48" fill="url(#s5)"/><circle cx="430.7" cy="307.4" r="2.48" fill="url(#s5)"/><circle cx="188.2" cy="250.5" r="2.48" fill="url(#s1)"/><circle cx="174.0" cy="319.4" r="2.48" fill="url(#s5)"/><circle cx="305.3" cy="196.0" r="2.48" fill="url(#s5)"/><circle cx="202.3" cy="181.2" r="2.48" fill="url(#s0)"/><circle cx="154.9" cy="362.8" r="2.48" fill="url(#s5)"/><circle cx="312.3" cy="195.2" r="2.48" fill="url(#s5)"/><circle cx="192.5" cy="197.7" r="2.48" fill="url(#s0)"/><circle cx="158.2" cy="357.2" r="2.48" fill="url(#s5)"/><circle cx="190.3" cy="223.9" r="2.48" fill="url(#s0)"/><circle cx="446.4" cy="336.3" r="2.48" fill="url(#s5)"/><circle cx="209.3" cy="180.2" r="2.48" fill="url(#s0)"/><circle cx="298.3" cy="196.5" r="2.48" fill="url(#s5)"/><circle cx="227.1" cy="183.4" r="2.48" fill="url(#s1)"/><circle cx="126.8" cy="365.5" r="2.48" fill="url(#s0)"/><circle cx="151.6" cy="368.0" r="2.48" fill="url(#s5)"/><circle cx="319.4" cy="193.9" r="2.48" fill="url(#s5)"/><circle cx="350.7" cy="185.3" r="2.48" fill="url(#s1)"/><circle cx="161.3" cy="351.2" r="2.48" fill="url(#s5)"/><circle cx="291.3" cy="196.6" r="2.49" fill="url(#s5)"/><circle cx="266.4" cy="194.0" r="2.49" fill="url(#s5)"/><circle cx="237.8" cy="186.7" r="2.49" fill="url(#s2)"/><circle cx="138.0" cy="379.4" r="2.49" fill="url(#s0)"/><circle cx="419.1" cy="281.3" r="2.49" fill="url(#s5)"/><circle cx="378.8" cy="181.6" r="2.49" fill="url(#s0)"/><circle cx="326.4" cy="192.5" r="2.49" fill="url(#s5)"/><circle cx="198.9" cy="185.4" r="2.49" fill="url(#s0)"/><circle cx="195.6" cy="190.9" r="2.49" fill="url(#s0)"/><circle cx="148.2" cy="372.8" r="2.49" fill="url(#s5)"/><circle cx="393.9" cy="200.6" r="2.49" fill="url(#s0)"/><circle cx="406.8" cy="245.9" r="2.49" fill="url(#s3)"/><circle cx="402.5" cy="230.7" r="2.49" fill="url(#s1)"/><circle cx="190.6" cy="232.8" r="2.49" fill="url(#s0)"/><circle cx="357.8" cy="183.5" r="2.49" fill="url(#s0)"/><circle cx="164.4" cy="344.8" r="2.49" fill="url(#s5)"/><circle cx="442.9" cy="330.3" r="2.49" fill="url(#s5)"/><circle cx="185.7" cy="274.8" r="2.49" fill="url(#s2)"/><circle cx="398.3" cy="215.4" r="2.49" fill="url(#s0)"/><circle cx="192.8" cy="206.3" r="2.49" fill="url(#s0)"/><circle cx="248.6" cy="189.8" r="2.49" fill="url(#s4)"/><circle cx="284.2" cy="196.4" r="2.49" fill="url(#s5)"/><circle cx="427.3" cy="300.4" r="2.49" fill="url(#s5)"/><circle cx="219.9" cy="182.3" r="2.49" fill="url(#s0)"/><circle cx="371.9" cy="181.4" r="2.49" fill="url(#s0)"/><circle cx="188.3" cy="258.5" r="2.49" fill="url(#s1)"/><circle cx="333.5" cy="190.7" r="2.49" fill="url(#s4)"/><circle cx="364.9" cy="182.1" r="2.49" fill="url(#s0)"/><circle cx="176.8" cy="311.7" r="2.49" fill="url(#s5)"/><circle cx="411.2" cy="260.3" r="2.49" fill="url(#s5)"/><circle cx="105.4" cy="298.4" r="2.49" fill="url(#s1)"/><circle cx="182.8" cy="289.9" r="2.49" fill="url(#s5)"/><circle cx="382.7" cy="185.0" r="2.49" fill="url(#s0)"/><circle cx="390.3" cy="194.5" r="2.49" fill="url(#s0)"/><circle cx="144.7" cy="377.2" r="2.49" fill="url(#s4)"/><circle cx="205.7" cy="183.0" r="2.49" fill="url(#s0)"/><circle cx="167.5" cy="338.1" r="2.49" fill="url(#s5)"/><circle cx="212.8" cy="182.0" r="2.49" fill="url(#s0)"/><circle cx="259.3" cy="192.6" r="2.49" fill="url(#s5)"/><circle cx="386.6" cy="189.3" r="2.49" fill="url(#s0)"/><circle cx="340.5" cy="188.9" r="2.49" fill="url(#s2)"/><circle cx="277.2" cy="195.7" r="2.49" fill="url(#s5)"/><circle cx="230.6" cy="185.1" r="2.49" fill="url(#s1)"/><circle cx="504.4" cy="280.6" r="2.49" fill="url(#s0)"/><circle cx="193.2" cy="215.1" r="2.49" fill="url(#s0)"/><circle cx="118.1" cy="343.1" r="2.49" fill="url(#s0)"/><circle cx="190.9" cy="241.3" r="2.49" fill="url(#s0)"/><circle cx="439.4" cy="324.0" r="2.49" fill="url(#s5)"/><circle cx="122.4" cy="358.2" r="2.49" fill="url(#s0)"/><circle cx="109.5" cy="312.7" r="2.49" fill="url(#s1)"/><circle cx="113.8" cy="327.7" r="2.49" fill="url(#s0)"/><circle cx="195.9" cy="198.8" r="2.49" fill="url(#s0)"/><circle cx="394.8" cy="208.3" r="2.50" fill="url(#s0)"/><circle cx="415.8" cy="273.7" r="2.50" fill="url(#s5)"/><circle cx="241.4" cy="188.2" r="2.50" fill="url(#s2)"/><circle cx="347.7" cy="187.1" r="2.50" fill="url(#s1)"/><circle cx="202.3" cy="187.0" r="2.50" fill="url(#s0)"/><circle cx="399.1" cy="223.1" r="2.50" fill="url(#s1)"/><circle cx="375.9" cy="183.7" r="2.50" fill="url(#s0)"/><circle cx="199.0" cy="192.3" r="2.50" fill="url(#s0)"/><circle cx="170.5" cy="331.1" r="2.50" fill="url(#s5)"/><circle cx="403.4" cy="238.0" r="2.50" fill="url(#s2)"/><circle cx="423.9" cy="293.3" r="2.50" fill="url(#s5)"/><circle cx="309.1" cy="195.9" r="2.50" fill="url(#s5)"/><circle cx="141.0" cy="381.2" r="2.50" fill="url(#s1)"/><circle cx="270.1" cy="194.8" r="2.50" fill="url(#s5)"/><circle cx="302.1" cy="196.6" r="2.50" fill="url(#s5)"/><circle cx="179.7" cy="303.8" r="2.50" fill="url(#s5)"/><circle cx="193.5" cy="223.9" r="2.50" fill="url(#s0)"/><circle cx="316.2" cy="194.9" r="2.50" fill="url(#s5)"/><circle cx="223.4" cy="184.1" r="2.50" fill="url(#s0)"/><circle cx="354.8" cy="185.5" r="2.50" fill="url(#s0)"/><circle cx="252.1" cy="191.1" r="2.50" fill="url(#s3)"/><circle cx="188.4" cy="265.9" r="2.50" fill="url(#s1)"/><circle cx="295.0" cy="196.9" r="2.50" fill="url(#s5)"/><circle cx="435.9" cy="317.5" r="2.50" fill="url(#s5)"/><circle cx="407.8" cy="252.5" r="2.50" fill="url(#s5)"/><circle cx="368.9" cy="183.6" r="2.50" fill="url(#s0)"/><circle cx="323.3" cy="193.7" r="2.50" fill="url(#s4)"/><circle cx="361.9" cy="184.2" r="2.50" fill="url(#s0)"/><circle cx="391.2" cy="201.8" r="2.50" fill="url(#s0)"/><circle cx="196.1" cy="207.1" r="2.50" fill="url(#s0)"/><circle cx="191.1" cy="249.5" r="2.50" fill="url(#s1)"/><circle cx="209.2" cy="184.8" r="2.50" fill="url(#s0)"/><circle cx="185.6" cy="281.4" r="2.50" fill="url(#s4)"/><circle cx="216.3" cy="183.9" r="2.50" fill="url(#s0)"/><circle cx="379.8" cy="186.9" r="2.50" fill="url(#s0)"/><circle cx="287.9" cy="196.8" r="2.50" fill="url(#s5)"/><circle cx="330.4" cy="192.2" r="2.50" fill="url(#s3)"/><circle cx="234.2" cy="186.8" r="2.50" fill="url(#s1)"/><circle cx="173.5" cy="323.9" r="2.50" fill="url(#s5)"/><circle cx="387.5" cy="196.0" r="2.50" fill="url(#s0)"/><circle cx="262.9" cy="193.7" r="2.50" fill="url(#s4)"/><circle cx="383.7" cy="191.1" r="2.50" fill="url(#s0)"/><circle cx="459.4" cy="355.6" r="2.50" fill="url(#s1)"/><circle cx="193.8" cy="232.5" r="2.50" fill="url(#s0)"/><circle cx="395.6" cy="215.9" r="2.50" fill="url(#s0)"/><circle cx="337.5" cy="190.6" r="2.50" fill="url(#s2)"/><circle cx="412.4" cy="266.2" r="2.50" fill="url(#s5)"/><circle cx="280.9" cy="196.4" r="2.50" fill="url(#s5)"/><circle cx="199.2" cy="200.0" r="2.50" fill="url(#s0)"/><circle cx="420.5" cy="286.0" r="2.51" fill="url(#s5)"/><circle cx="244.9" cy="189.7" r="2.51" fill="url(#s1)"/><circle cx="205.8" cy="188.7" r="2.51" fill="url(#s0)"/><circle cx="432.4" cy="310.9" r="2.51" fill="url(#s5)"/><circle cx="455.8" cy="350.2" r="2.51" fill="url(#s2)"/><circle cx="400.0" cy="230.5" r="2.51" fill="url(#s1)"/><circle cx="196.4" cy="215.6" r="2.51" fill="url(#s0)"/><circle cx="182.6" cy="295.7" r="2.51" fill="url(#s5)"/><circle cx="344.6" cy="189.0" r="2.51" fill="url(#s1)"/><circle cx="202.4" cy="193.8" r="2.51" fill="url(#s0)"/><circle cx="226.9" cy="185.9" r="2.51" fill="url(#s0)"/><circle cx="372.9" cy="185.8" r="2.51" fill="url(#s0)"/><circle cx="117.6" cy="349.7" r="2.51" fill="url(#s0)"/><circle cx="154.0" cy="366.5" r="2.51" fill="url(#s5)"/><circle cx="157.3" cy="360.8" r="2.51" fill="url(#s5)"/><circle cx="404.4" cy="244.9" r="2.51" fill="url(#s3)"/><circle cx="452.1" cy="344.6" r="2.51" fill="url(#s5)"/><circle cx="150.7" cy="371.9" r="2.51" fill="url(#s5)"/><circle cx="351.7" cy="187.5" r="2.51" fill="url(#s0)"/><circle cx="255.8" cy="192.5" r="2.51" fill="url(#s2)"/><circle cx="273.7" cy="195.8" r="2.51" fill="url(#s4)"/><circle cx="191.3" cy="257.2" r="2.51" fill="url(#s1)"/><circle cx="212.7" cy="186.6" r="2.51" fill="url(#s0)"/><circle cx="392.0" cy="209.2" r="2.51" fill="url(#s0)"/><circle cx="176.4" cy="316.4" r="2.51" fill="url(#s5)"/><circle cx="365.9" cy="185.7" r="2.51" fill="url(#s0)"/><circle cx="160.5" cy="354.8" r="2.51" fill="url(#s5)"/><circle cx="219.8" cy="185.7" r="2.51" fill="url(#s0)"/><circle cx="113.1" cy="333.6" r="2.51" fill="url(#s0)"/><circle cx="358.8" cy="186.3" r="2.51" fill="url(#s0)"/><circle cx="188.5" cy="272.8" r="2.51" fill="url(#s3)"/><circle cx="194.0" cy="240.7" r="2.51" fill="url(#s0)"/><circle cx="147.3" cy="376.9" r="2.51" fill="url(#s4)"/><circle cx="237.7" cy="188.5" r="2.51" fill="url(#s0)"/><circle cx="305.9" cy="196.8" r="2.51" fill="url(#s4)"/><circle cx="313.0" cy="196.0" r="2.51" fill="url(#s3)"/><circle cx="448.5" cy="338.8" r="2.51" fill="url(#s5)"/><circle cx="376.9" cy="189.0" r="2.51" fill="url(#s0)"/><circle cx="429.0" cy="304.1" r="2.51" fill="url(#s5)"/><circle cx="108.6" cy="317.7" r="2.51" fill="url(#s0)"/><circle cx="104.3" cy="302.4" r="2.51" fill="url(#s1)"/><circle cx="163.6" cy="348.5" r="2.51" fill="url(#s5)"/><circle cx="320.1" cy="195.0" r="2.51" fill="url(#s3)"/><circle cx="298.8" cy="197.3" r="2.51" fill="url(#s4)"/><circle cx="199.4" cy="208.0" r="2.51" fill="url(#s0)"/><circle cx="196.7" cy="224.0" r="2.51" fill="url(#s0)"/><circle cx="509.4" cy="268.9" r="2.51" fill="url(#s0)"/><circle cx="396.5" cy="223.2" r="2.51" fill="url(#s1)"/><circle cx="408.9" cy="258.7" r="2.51" fill="url(#s5)"/><circle cx="417.1" cy="278.8" r="2.51" fill="url(#s5)"/><circle cx="388.3" cy="203.0" r="2.51" fill="url(#s0)"/><circle cx="327.2" cy="193.7" r="2.51" fill="url(#s2)"/><circle cx="266.6" cy="194.9" r="2.51" fill="url(#s3)"/><circle cx="291.7" cy="197.4" r="2.51" fill="url(#s4)"/><circle cx="143.8" cy="381.6" r="2.51" fill="url(#s1)"/><circle cx="209.2" cy="190.4" r="2.51" fill="url(#s0)"/><circle cx="380.8" cy="192.9" r="2.51" fill="url(#s0)"/><circle cx="248.5" cy="191.3" r="2.51" fill="url(#s1)"/><circle cx="384.6" cy="197.6" r="2.51" fill="url(#s0)"/><circle cx="185.5" cy="287.4" r="2.52" fill="url(#s5)"/><circle cx="334.3" cy="192.3" r="2.52" fill="url(#s1)"/><circle cx="230.5" cy="187.7" r="2.52" fill="url(#s0)"/><circle cx="166.7" cy="341.9" r="2.52" fill="url(#s5)"/><circle cx="202.6" cy="201.2" r="2.52" fill="url(#s0)"/><circle cx="445.0" cy="332.8" r="2.52" fill="url(#s5)"/><circle cx="400.9" cy="237.5" r="2.52" fill="url(#s2)"/><circle cx="179.3" cy="308.7" r="2.52" fill="url(#s5)"/><circle cx="205.8" cy="195.3" r="2.52" fill="url(#s0)"/><circle cx="284.6" cy="197.2" r="2.52" fill="url(#s3)"/><circle cx="369.9" cy="188.0" r="2.52" fill="url(#s0)"/><circle cx="341.5" cy="190.9" r="2.52" fill="url(#s1)"/><circle cx="216.2" cy="188.4" r="2.52" fill="url(#s0)"/><circle cx="223.3" cy="187.6" r="2.52" fill="url(#s0)"/><circle cx="194.2" cy="248.5" r="2.52" fill="url(#s1)"/><circle cx="425.5" cy="297.2" r="2.52" fill="url(#s5)"/><circle cx="392.9" cy="216.4" r="2.52" fill="url(#s0)"/><circle cx="348.6" cy="189.6" r="2.52" fill="url(#s0)"/><circle cx="259.4" cy="193.9" r="2.52" fill="url(#s2)"/><circle cx="196.9" cy="232.2" r="2.52" fill="url(#s0)"/><circle cx="199.7" cy="216.1" r="2.52" fill="url(#s0)"/><circle cx="362.9" cy="187.9" r="2.52" fill="url(#s0)"/><circle cx="191.3" cy="264.3" r="2.52" fill="url(#s2)"/><circle cx="355.8" cy="188.5" r="2.52" fill="url(#s0)"/><circle cx="241.3" cy="190.3" r="2.52" fill="url(#s0)"/><circle cx="169.8" cy="335.0" r="2.52" fill="url(#s5)"/><circle cx="277.4" cy="196.8" r="2.52" fill="url(#s3)"/><circle cx="441.4" cy="326.6" r="2.52" fill="url(#s5)"/><circle cx="413.6" cy="271.5" r="2.52" fill="url(#s5)"/><circle cx="405.5" cy="251.3" r="2.52" fill="url(#s5)"/><circle cx="373.9" cy="191.0" r="2.52" fill="url(#s0)"/><circle cx="389.2" cy="210.1" r="2.52" fill="url(#s0)"/><circle cx="397.4" cy="230.3" r="2.52" fill="url(#s1)"/><circle cx="212.7" cy="192.1" r="2.52" fill="url(#s0)"/><circle cx="188.4" cy="279.2" r="2.52" fill="url(#s4)"/><circle cx="112.6" cy="340.1" r="2.52" fill="url(#s0)"/><circle cx="182.3" cy="300.9" r="2.52" fill="url(#s5)"/><circle cx="202.8" cy="208.9" r="2.52" fill="url(#s0)"/><circle cx="234.1" cy="189.6" r="2.52" fill="url(#s0)"/><circle cx="309.8" cy="197.2" r="2.52" fill="url(#s2)"/><circle cx="252.2" cy="192.9" r="2.52" fill="url(#s1)"/><circle cx="270.3" cy="196.1" r="2.52" fill="url(#s2)"/><circle cx="316.9" cy="196.4" r="2.52" fill="url(#s2)"/><circle cx="302.6" cy="197.8" r="2.52" fill="url(#s3)"/><circle cx="172.8" cy="327.9" r="2.53" fill="url(#s5)"/><circle cx="324.0" cy="195.3" r="2.53" fill="url(#s1)"/><circle cx="377.8" cy="194.7" r="2.53" fill="url(#s0)"/><circle cx="437.9" cy="320.3" r="2.53" fill="url(#s5)"/><circle cx="422.0" cy="290.2" r="2.53" fill="url(#s5)"/><circle cx="385.5" cy="204.4" r="2.53" fill="url(#s0)"/><circle cx="295.5" cy="198.1" r="2.53" fill="url(#s3)"/><circle cx="209.3" cy="196.8" r="2.53" fill="url(#s0)"/><circle cx="206.0" cy="202.4" r="2.53" fill="url(#s0)"/><circle cx="199.9" cy="224.2" r="2.53" fill="url(#s0)"/><circle cx="381.7" cy="199.2" r="2.53" fill="url(#s0)"/><circle cx="331.2" cy="194.1" r="2.53" fill="url(#s1)"/><circle cx="226.9" cy="189.5" r="2.53" fill="url(#s0)"/><circle cx="219.7" cy="190.3" r="2.53" fill="url(#s0)"/><circle cx="366.9" cy="190.1" r="2.53" fill="url(#s0)"/><circle cx="197.1" cy="240.1" r="2.53" fill="url(#s0)"/><circle cx="338.3" cy="192.8" r="2.53" fill="url(#s1)"/><circle cx="288.3" cy="198.1" r="2.53" fill="url(#s2)"/><circle cx="402.0" cy="244.0" r="2.53" fill="url(#s4)"/><circle cx="410.2" cy="264.2" r="2.53" fill="url(#s5)"/><circle cx="194.3" cy="255.8" r="2.53" fill="url(#s1)"/><circle cx="107.8" cy="323.3" r="2.53" fill="url(#s0)"/><circle cx="263.1" cy="195.4" r="2.53" fill="url(#s1)"/><circle cx="244.9" cy="192.0" r="2.53" fill="url(#s0)"/><circle cx="393.8" cy="223.5" r="2.53" fill="url(#s1)"/><circle cx="359.8" cy="190.1" r="2.53" fill="url(#s0)"/><circle cx="345.5" cy="191.6" r="2.53" fill="url(#s0)"/><circle cx="352.7" cy="190.7" r="2.53" fill="url(#s0)"/><circle cx="175.8" cy="320.6" r="2.53" fill="url(#s5)"/><circle cx="434.3" cy="313.8" r="2.53" fill="url(#s5)"/><circle cx="281.2" cy="197.9" r="2.53" fill="url(#s2)"/><circle cx="98.9" cy="291.7" r="2.53" fill="url(#s1)"/><circle cx="185.2" cy="292.9" r="2.53" fill="url(#s5)"/><circle cx="103.2" cy="307.0" r="2.53" fill="url(#s0)"/><circle cx="203.0" cy="216.7" r="2.53" fill="url(#s0)"/><circle cx="191.3" cy="270.9" r="2.53" fill="url(#s3)"/><circle cx="370.9" cy="193.0" r="2.53" fill="url(#s0)"/><circle cx="418.6" cy="283.2" r="2.53" fill="url(#s5)"/><circle cx="216.2" cy="193.9" r="2.53" fill="url(#s0)"/><circle cx="237.7" cy="191.5" r="2.53" fill="url(#s0)"/><circle cx="255.8" cy="194.5" r="2.53" fill="url(#s1)"/><circle cx="153.0" cy="369.9" r="2.53" fill="url(#s5)"/><circle cx="390.1" cy="217.1" r="2.53" fill="url(#s0)"/><circle cx="149.7" cy="375.4" r="2.53" fill="url(#s3)"/><circle cx="156.3" cy="364.1" r="2.53" fill="url(#s5)"/><circle cx="200.1" cy="232.1" r="2.53" fill="url(#s0)"/><circle cx="274.0" cy="197.4" r="2.54" fill="url(#s2)"/><circle cx="398.4" cy="237.0" r="2.54" fill="url(#s2)"/><circle cx="230.5" cy="191.4" r="2.54" fill="url(#s0)"/><circle cx="223.3" cy="192.1" r="2.54" fill="url(#s0)"/><circle cx="206.2" cy="209.8" r="2.54" fill="url(#s0)"/><circle cx="406.6" cy="257.1" r="2.54" fill="url(#s5)"/><circle cx="159.5" cy="358.0" r="2.54" fill="url(#s5)"/><circle cx="146.2" cy="380.6" r="2.54" fill="url(#s0)"/><circle cx="212.8" cy="198.3" r="2.54" fill="url(#s0)"/><circle cx="458.2" cy="352.1" r="2.54" fill="url(#s0)"/><circle cx="374.8" cy="196.6" r="2.54" fill="url(#s0)"/><circle cx="197.2" cy="247.6" r="2.54" fill="url(#s1)"/><circle cx="430.8" cy="307.2" r="2.54" fill="url(#s5)"/><circle cx="313.7" cy="197.8" r="2.54" fill="url(#s1)"/><circle cx="386.4" cy="211.1" r="2.54" fill="url(#s0)"/><circle cx="306.5" cy="198.5" r="2.54" fill="url(#s2)"/><circle cx="178.9" cy="313.1" r="2.54" fill="url(#s5)"/><circle cx="320.8" cy="197.0" r="2.54" fill="url(#s1)"/><circle cx="363.8" cy="192.3" r="2.54" fill="url(#s0)"/><circle cx="209.4" cy="203.7" r="2.54" fill="url(#s0)"/><circle cx="328.0" cy="195.9" r="2.54" fill="url(#s1)"/><circle cx="299.3" cy="199.0" r="2.54" fill="url(#s2)"/><circle cx="248.6" cy="193.8" r="2.54" fill="url(#s0)"/><circle cx="162.7" cy="351.7" r="2.54" fill="url(#s5)"/><circle cx="378.7" cy="200.9" r="2.54" fill="url(#s0)"/><circle cx="382.6" cy="205.7" r="2.54" fill="url(#s0)"/><circle cx="335.2" cy="194.8" r="2.54" fill="url(#s0)"/><circle cx="454.6" cy="346.5" r="2.54" fill="url(#s2)"/><circle cx="266.8" cy="196.8" r="2.54" fill="url(#s1)"/><circle cx="188.2" cy="284.9" r="2.54" fill="url(#s5)"/><circle cx="356.7" cy="192.3" r="2.54" fill="url(#s0)"/><circle cx="415.0" cy="276.2" r="2.54" fill="url(#s5)"/><circle cx="342.4" cy="193.7" r="2.54" fill="url(#s0)"/><circle cx="292.1" cy="199.1" r="2.54" fill="url(#s2)"/><circle cx="349.6" cy="192.8" r="2.54" fill="url(#s0)"/><circle cx="194.3" cy="262.7" r="2.54" fill="url(#s2)"/><circle cx="203.2" cy="224.4" r="2.54" fill="url(#s0)"/><circle cx="394.8" cy="230.2" r="2.54" fill="url(#s1)"/><circle cx="165.9" cy="345.1" r="2.54" fill="url(#s5)"/><circle cx="241.3" cy="193.3" r="2.54" fill="url(#s0)"/><circle cx="219.8" cy="195.6" r="2.54" fill="url(#s0)"/><circle cx="450.9" cy="340.7" r="2.54" fill="url(#s4)"/><circle cx="285.0" cy="199.1" r="2.54" fill="url(#s1)"/><circle cx="403.1" cy="250.1" r="2.54" fill="url(#s5)"/><circle cx="427.3" cy="300.6" r="2.54" fill="url(#s5)"/><circle cx="367.9" cy="195.1" r="2.54" fill="url(#s0)"/><circle cx="259.5" cy="196.2" r="2.54" fill="url(#s1)"/><circle cx="107.2" cy="329.6" r="2.54" fill="url(#s0)"/><circle cx="181.9" cy="305.5" r="2.54" fill="url(#s5)"/><circle cx="200.3" cy="239.6" r="2.54" fill="url(#s0)"/><circle cx="234.1" cy="193.3" r="2.54" fill="url(#s0)"/><circle cx="226.9" cy="194.0" r="2.54" fill="url(#s0)"/><circle cx="206.4" cy="217.3" r="2.55" fill="url(#s0)"/><circle cx="169.0" cy="338.3" r="2.55" fill="url(#s5)"/><circle cx="391.1" cy="223.8" r="2.55" fill="url(#s0)"/><circle cx="277.7" cy="198.8" r="2.55" fill="url(#s1)"/><circle cx="447.3" cy="334.7" r="2.55" fill="url(#s5)"/><circle cx="216.3" cy="199.9" r="2.55" fill="url(#s0)"/><circle cx="411.5" cy="269.3" r="2.55" fill="url(#s5)"/><circle cx="191.2" cy="276.9" r="2.55" fill="url(#s5)"/><circle cx="252.3" cy="195.6" r="2.55" fill="url(#s0)"/><circle cx="360.8" cy="194.5" r="2.55" fill="url(#s0)"/><circle cx="209.6" cy="210.8" r="2.55" fill="url(#s0)"/><circle cx="371.8" cy="198.6" r="2.55" fill="url(#s0)"/><circle cx="212.9" cy="205.0" r="2.55" fill="url(#s0)"/><circle cx="197.3" cy="254.6" r="2.55" fill="url(#s1)"/><circle cx="399.5" cy="243.2" r="2.55" fill="url(#s4)"/><circle cx="423.7" cy="293.9" r="2.55" fill="url(#s5)"/><circle cx="387.3" cy="217.8" r="2.55" fill="url(#s0)"/><circle cx="317.6" cy="198.7" r="2.55" fill="url(#s1)"/><circle cx="310.4" cy="199.4" r="2.55" fill="url(#s1)"/><circle cx="270.5" cy="198.4" r="2.55" fill="url(#s1)"/><circle cx="324.8" cy="197.8" r="2.55" fill="url(#s1)"/><circle cx="102.3" cy="312.4" r="2.55" fill="url(#s0)"/><circle cx="353.6" cy="194.5" r="2.55" fill="url(#s0)"/><circle cx="303.2" cy="199.9" r="2.55" fill="url(#s1)"/><circle cx="332.0" cy="196.8" r="2.55" fill="url(#s0)"/><circle cx="172.1" cy="331.4" r="2.55" fill="url(#s5)"/><circle cx="203.4" cy="232.0" r="2.55" fill="url(#s0)"/><circle cx="443.6" cy="328.6" r="2.55" fill="url(#s5)"/><circle cx="339.2" cy="195.9" r="2.55" fill="url(#s0)"/><circle cx="375.8" cy="202.6" r="2.55" fill="url(#s0)"/><circle cx="346.4" cy="195.1" r="2.55" fill="url(#s0)"/><circle cx="184.9" cy="297.8" r="2.55" fill="url(#s5)"/><circle cx="245.0" cy="195.2" r="2.55" fill="url(#s0)"/><circle cx="383.5" cy="212.2" r="2.55" fill="url(#s0)"/><circle cx="296.0" cy="200.2" r="2.55" fill="url(#s1)"/><circle cx="223.4" cy="197.4" r="2.55" fill="url(#s0)"/><circle cx="379.7" cy="207.1" r="2.55" fill="url(#s0)"/><circle cx="97.7" cy="296.0" r="2.55" fill="url(#s0)"/><circle cx="407.9" cy="262.4" r="2.55" fill="url(#s5)"/><circle cx="263.2" cy="197.9" r="2.55" fill="url(#s0)"/><circle cx="237.7" cy="195.3" r="2.55" fill="url(#s0)"/><circle cx="288.8" cy="200.3" r="2.55" fill="url(#s1)"/><circle cx="230.5" cy="195.9" r="2.55" fill="url(#s0)"/><circle cx="364.8" cy="197.2" r="2.55" fill="url(#s0)"/><circle cx="395.8" cy="236.6" r="2.55" fill="url(#s2)"/><circle cx="194.2" cy="269.0" r="2.55" fill="url(#s3)"/><circle cx="440.0" cy="322.4" r="2.56" fill="url(#s5)"/><circle cx="206.5" cy="224.7" r="2.56" fill="url(#s0)"/><circle cx="420.1" cy="287.1" r="2.56" fill="url(#s5)"/><circle cx="200.4" cy="246.7" r="2.56" fill="url(#s1)"/><circle cx="175.2" cy="324.3" r="2.56" fill="url(#s5)"/><circle cx="281.5" cy="200.2" r="2.56" fill="url(#s1)"/><circle cx="219.9" cy="201.5" r="2.56" fill="url(#s0)"/><circle cx="256.0" cy="197.4" r="2.56" fill="url(#s0)"/><circle cx="187.9" cy="290.1" r="2.56" fill="url(#s5)"/><circle cx="357.7" cy="196.7" r="2.56" fill="url(#s0)"/><circle cx="209.8" cy="218.0" r="2.56" fill="url(#s0)"/><circle cx="392.1" cy="230.3" r="2.56" fill="url(#s1)"/><circle cx="216.4" cy="206.3" r="2.56" fill="url(#s0)"/><circle cx="404.3" cy="255.6" r="2.56" fill="url(#s5)"/><circle cx="368.8" cy="200.5" r="2.56" fill="url(#s0)"/><circle cx="274.3" cy="199.9" r="2.56" fill="url(#s1)"/><circle cx="213.1" cy="211.9" r="2.56" fill="url(#s0)"/><circle cx="436.4" cy="316.1" r="2.56" fill="url(#s5)"/><circle cx="248.7" cy="197.1" r="2.56" fill="url(#s0)"/><circle cx="350.5" cy="196.8" r="2.56" fill="url(#s0)"/><circle cx="178.3" cy="317.0" r="2.56" fill="url(#s5)"/><circle cx="321.6" cy="199.7" r="2.56" fill="url(#s0)"/><circle cx="226.9" cy="199.2" r="2.56" fill="url(#s0)"/><circle cx="314.3" cy="200.4" r="2.56" fill="url(#s1)"/><circle cx="328.8" cy="198.9" r="2.56" fill="url(#s0)"/><circle cx="203.5" cy="239.2" r="2.56" fill="url(#s0)"/><circle cx="343.3" cy="197.3" r="2.56" fill="url(#s0)"/><circle cx="416.5" cy="280.4" r="2.56" fill="url(#s5)"/><circle cx="336.0" cy="198.0" r="2.56" fill="url(#s0)"/><circle cx="307.1" cy="201.0" r="2.56" fill="url(#s1)"/><circle cx="197.3" cy="261.1" r="2.56" fill="url(#s2)"/><circle cx="388.3" cy="224.3" r="2.56" fill="url(#s0)"/><circle cx="241.4" cy="197.2" r="2.56" fill="url(#s0)"/><circle cx="372.8" cy="204.3" r="2.56" fill="url(#s0)"/><circle cx="299.8" cy="201.5" r="2.56" fill="url(#s1)"/><circle cx="234.1" cy="197.8" r="2.56" fill="url(#s0)"/><circle cx="267.0" cy="199.6" r="2.56" fill="url(#s0)"/><circle cx="151.8" cy="372.7" r="2.56" fill="url(#s2)"/><circle cx="148.5" cy="378.4" r="2.56" fill="url(#s0)"/><circle cx="155.2" cy="366.8" r="2.56" fill="url(#s5)"/><circle cx="384.5" cy="218.6" r="2.56" fill="url(#s0)"/><circle cx="191.0" cy="282.4" r="2.56" fill="url(#s5)"/><circle cx="292.6" cy="201.7" r="2.56" fill="url(#s1)"/><circle cx="400.6" cy="249.0" r="2.56" fill="url(#s5)"/><circle cx="376.7" cy="208.6" r="2.56" fill="url(#s0)"/><circle cx="432.8" cy="309.8" r="2.57" fill="url(#s5)"/><circle cx="361.7" cy="199.4" r="2.57" fill="url(#s0)"/><circle cx="380.6" cy="213.4" r="2.57" fill="url(#s0)"/><circle cx="158.4" cy="360.7" r="2.57" fill="url(#s5)"/><circle cx="206.7" cy="231.9" r="2.57" fill="url(#s0)"/><circle cx="101.6" cy="318.4" r="2.57" fill="url(#s0)"/><circle cx="259.7" cy="199.3" r="2.57" fill="url(#s0)"/><circle cx="223.4" cy="203.1" r="2.57" fill="url(#s0)"/><circle cx="181.4" cy="309.6" r="2.57" fill="url(#s5)"/><circle cx="285.3" cy="201.7" r="2.57" fill="url(#s1)"/><circle cx="412.9" cy="273.7" r="2.57" fill="url(#s5)"/><circle cx="161.7" cy="354.4" r="2.57" fill="url(#s5)"/><circle cx="200.4" cy="253.4" r="2.57" fill="url(#s1)"/><circle cx="354.5" cy="199.0" r="2.57" fill="url(#s0)"/><circle cx="252.4" cy="199.1" r="2.57" fill="url(#s0)"/><circle cx="396.9" cy="242.5" r="2.57" fill="url(#s3)"/><circle cx="209.9" cy="225.1" r="2.57" fill="url(#s0)"/><circle cx="278.1" cy="201.6" r="2.57" fill="url(#s0)"/><circle cx="220.0" cy="207.7" r="2.57" fill="url(#s0)"/><circle cx="429.2" cy="303.4" r="2.57" fill="url(#s5)"/><circle cx="230.6" cy="201.0" r="2.57" fill="url(#s0)"/><circle cx="365.7" cy="202.5" r="2.57" fill="url(#s0)"/><circle cx="164.9" cy="347.9" r="2.57" fill="url(#s5)"/><circle cx="347.3" cy="199.1" r="2.57" fill="url(#s0)"/><circle cx="194.1" cy="274.7" r="2.57" fill="url(#s5)"/><circle cx="213.2" cy="218.8" r="2.57" fill="url(#s0)"/><circle cx="245.1" cy="199.2" r="2.57" fill="url(#s0)"/><circle cx="216.6" cy="213.0" r="2.57" fill="url(#s0)"/><circle cx="340.1" cy="199.5" r="2.57" fill="url(#s0)"/><circle cx="237.8" cy="199.8" r="2.57" fill="url(#s0)"/><circle cx="332.8" cy="200.2" r="2.57" fill="url(#s0)"/><circle cx="325.5" cy="200.9" r="2.57" fill="url(#s0)"/><circle cx="96.7" cy="301.0" r="2.57" fill="url(#s0)"/><circle cx="184.4" cy="302.2" r="2.57" fill="url(#s5)"/><circle cx="318.3" cy="201.7" r="2.57" fill="url(#s0)"/><circle cx="409.2" cy="267.1" r="2.57" fill="url(#s5)"/><circle cx="270.8" cy="201.4" r="2.57" fill="url(#s0)"/><circle cx="311.0" cy="202.3" r="2.57" fill="url(#s0)"/><circle cx="393.1" cy="236.3" r="2.57" fill="url(#s2)"/><circle cx="203.5" cy="246.0" r="2.57" fill="url(#s1)"/><circle cx="457.2" cy="347.7" r="2.57" fill="url(#s0)"/><circle cx="303.7" cy="202.8" r="2.57" fill="url(#s0)"/><circle cx="168.1" cy="341.2" r="2.57" fill="url(#s5)"/><circle cx="92.1" cy="284.8" r="2.57" fill="url(#s0)"/><circle cx="369.8" cy="206.1" r="2.58" fill="url(#s0)"/><circle cx="425.5" cy="296.9" r="2.58" fill="url(#s5)"/><circle cx="296.5" cy="203.1" r="2.58" fill="url(#s0)"/><circle cx="263.5" cy="201.1" r="2.58" fill="url(#s0)"/><circle cx="358.6" cy="201.5" r="2.58" fill="url(#s0)"/><circle cx="389.3" cy="230.4" r="2.58" fill="url(#s1)"/><circle cx="227.0" cy="204.8" r="2.58" fill="url(#s0)"/><circle cx="453.5" cy="341.9" r="2.58" fill="url(#s1)"/><circle cx="197.2" cy="267.1" r="2.58" fill="url(#s3)"/><circle cx="289.2" cy="203.2" r="2.58" fill="url(#s0)"/><circle cx="373.7" cy="210.2" r="2.58" fill="url(#s0)"/><circle cx="405.6" cy="260.6" r="2.58" fill="url(#s5)"/><circle cx="171.2" cy="334.3" r="2.58" fill="url(#s5)"/><circle cx="206.7" cy="238.8" r="2.58" fill="url(#s0)"/><circle cx="187.6" cy="294.7" r="2.58" fill="url(#s5)"/><circle cx="385.5" cy="224.8" r="2.58" fill="url(#s0)"/><circle cx="256.1" cy="201.0" r="2.58" fill="url(#s0)"/><circle cx="377.7" cy="214.7" r="2.58" fill="url(#s0)"/><circle cx="381.6" cy="219.5" r="2.58" fill="url(#s0)"/><circle cx="351.4" cy="201.2" r="2.58" fill="url(#s0)"/><circle cx="281.9" cy="203.2" r="2.58" fill="url(#s0)"/><circle cx="449.8" cy="336.0" r="2.58" fill="url(#s3)"/><circle cx="234.2" cy="202.9" r="2.58" fill="url(#s0)"/><circle cx="421.8" cy="290.5" r="2.58" fill="url(#s5)"/><circle cx="248.8" cy="201.2" r="2.58" fill="url(#s0)"/><circle cx="223.5" cy="209.2" r="2.58" fill="url(#s0)"/><circle cx="241.5" cy="201.7" r="2.58" fill="url(#s0)"/><circle cx="344.1" cy="201.4" r="2.58" fill="url(#s0)"/><circle cx="210.0" cy="232.0" r="2.58" fill="url(#s0)"/><circle cx="362.7" cy="204.5" r="2.58" fill="url(#s0)"/><circle cx="401.8" cy="254.2" r="2.58" fill="url(#s5)"/><circle cx="174.4" cy="327.4" r="2.58" fill="url(#s5)"/><circle cx="274.6" cy="203.1" r="2.58" fill="url(#s0)"/><circle cx="336.9" cy="201.8" r="2.58" fill="url(#s0)"/><circle cx="200.4" cy="259.6" r="2.58" fill="url(#s2)"/><circle cx="329.6" cy="202.4" r="2.58" fill="url(#s0)"/><circle cx="220.1" cy="214.1" r="2.58" fill="url(#s0)"/><circle cx="322.3" cy="203.1" r="2.58" fill="url(#s0)"/><circle cx="213.3" cy="225.6" r="2.58" fill="url(#s0)"/><circle cx="446.1" cy="330.1" r="2.58" fill="url(#s5)"/><circle cx="315.0" cy="203.7" r="2.58" fill="url(#s0)"/><circle cx="190.7" cy="287.3" r="2.58" fill="url(#s5)"/><circle cx="216.7" cy="219.6" r="2.58" fill="url(#s0)"/><circle cx="307.7" cy="204.2" r="2.59" fill="url(#s0)"/><circle cx="267.2" cy="203.0" r="2.59" fill="url(#s0)"/><circle cx="418.2" cy="284.0" r="2.59" fill="url(#s5)"/><circle cx="300.4" cy="204.6" r="2.59" fill="url(#s0)"/><circle cx="398.1" cy="248.0" r="2.59" fill="url(#s5)"/><circle cx="230.7" cy="206.5" r="2.59" fill="url(#s0)"/><circle cx="366.7" cy="208.0" r="2.59" fill="url(#s0)"/><circle cx="355.5" cy="203.7" r="2.59" fill="url(#s0)"/><circle cx="177.6" cy="320.3" r="2.59" fill="url(#s5)"/><circle cx="442.3" cy="324.0" r="2.59" fill="url(#s5)"/><circle cx="293.1" cy="204.8" r="2.59" fill="url(#s0)"/><circle cx="203.5" cy="252.4" r="2.59" fill="url(#s1)"/><circle cx="259.9" cy="203.0" r="2.59" fill="url(#s0)"/><circle cx="252.5" cy="203.1" r="2.59" fill="url(#s0)"/><circle cx="394.3" cy="242.0" r="2.59" fill="url(#s3)"/><circle cx="237.9" cy="204.7" r="2.59" fill="url(#s0)"/><circle cx="285.7" cy="204.9" r="2.59" fill="url(#s0)"/><circle cx="193.8" cy="279.9" r="2.59" fill="url(#s5)"/><circle cx="95.9" cy="306.7" r="2.59" fill="url(#s0)"/><circle cx="414.5" cy="277.6" r="2.59" fill="url(#s5)"/><circle cx="348.2" cy="203.5" r="2.59" fill="url(#s0)"/><circle cx="370.7" cy="211.8" r="2.59" fill="url(#s0)"/><circle cx="245.2" cy="203.7" r="2.59" fill="url(#s0)"/><circle cx="438.6" cy="317.9" r="2.59" fill="url(#s5)"/><circle cx="227.2" cy="210.7" r="2.59" fill="url(#s0)"/><circle cx="180.7" cy="313.2" r="2.59" fill="url(#s5)"/><circle cx="206.8" cy="245.3" r="2.59" fill="url(#s1)"/><circle cx="340.9" cy="203.7" r="2.59" fill="url(#s0)"/><circle cx="278.4" cy="205.0" r="2.59" fill="url(#s0)"/><circle cx="390.4" cy="236.2" r="2.59" fill="url(#s2)"/><circle cx="374.7" cy="216.0" r="2.59" fill="url(#s0)"/><circle cx="333.6" cy="204.1" r="2.59" fill="url(#s0)"/><circle cx="359.5" cy="206.6" r="2.59" fill="url(#s0)"/><circle cx="386.6" cy="230.7" r="2.59" fill="url(#s1)"/><circle cx="326.3" cy="204.6" r="2.59" fill="url(#s0)"/><circle cx="378.7" cy="220.5" r="2.59" fill="url(#s0)"/><circle cx="410.7" cy="271.3" r="2.59" fill="url(#s5)"/><circle cx="319.0" cy="205.2" r="2.59" fill="url(#s0)"/><circle cx="382.6" cy="225.5" r="2.59" fill="url(#s0)"/><circle cx="271.1" cy="204.9" r="2.60" fill="url(#s0)"/><circle cx="210.1" cy="238.6" r="2.60" fill="url(#s0)"/><circle cx="197.0" cy="272.5" r="2.60" fill="url(#s5)"/><circle cx="91.0" cy="289.4" r="2.60" fill="url(#s0)"/><circle cx="223.7" cy="215.3" r="2.60" fill="url(#s0)"/><circle cx="311.7" cy="205.8" r="2.60" fill="url(#s0)"/><circle cx="434.9" cy="311.8" r="2.60" fill="url(#s5)"/><circle cx="150.5" cy="375.0" r="2.60" fill="url(#s0)"/><circle cx="304.3" cy="206.2" r="2.60" fill="url(#s0)"/><circle cx="183.9" cy="306.0" r="2.60" fill="url(#s5)"/><circle cx="234.3" cy="208.2" r="2.60" fill="url(#s0)"/><circle cx="153.8" cy="369.0" r="2.60" fill="url(#s2)"/><circle cx="213.4" cy="232.2" r="2.60" fill="url(#s0)"/><circle cx="263.7" cy="205.0" r="2.60" fill="url(#s0)"/><circle cx="220.2" cy="220.5" r="2.60" fill="url(#s0)"/><circle cx="216.8" cy="226.1" r="2.60" fill="url(#s0)"/><circle cx="297.0" cy="206.5" r="2.60" fill="url(#s0)"/><circle cx="352.3" cy="206.0" r="2.60" fill="url(#s0)"/><circle cx="157.2" cy="362.8" r="2.60" fill="url(#s5)"/><circle cx="407.0" cy="265.0" r="2.60" fill="url(#s5)"/><circle cx="363.6" cy="209.9" r="2.60" fill="url(#s0)"/><circle cx="256.3" cy="205.1" r="2.60" fill="url(#s0)"/><circle cx="241.6" cy="206.6" r="2.60" fill="url(#s0)"/><circle cx="431.2" cy="305.6" r="2.60" fill="url(#s5)"/><circle cx="200.2" cy="265.3" r="2.60" fill="url(#s3)"/><circle cx="289.6" cy="206.7" r="2.60" fill="url(#s0)"/><circle cx="249.0" cy="205.6" r="2.60" fill="url(#s0)"/><circle cx="160.5" cy="356.5" r="2.60" fill="url(#s5)"/><circle cx="345.0" cy="205.8" r="2.60" fill="url(#s0)"/><circle cx="187.1" cy="298.8" r="2.60" fill="url(#s5)"/><circle cx="282.3" cy="206.8" r="2.60" fill="url(#s0)"/><circle cx="403.2" cy="258.9" r="2.60" fill="url(#s5)"/><circle cx="230.8" cy="212.2" r="2.60" fill="url(#s0)"/><circle cx="163.7" cy="350.0" r="2.60" fill="url(#s5)"/><circle cx="337.7" cy="206.0" r="2.60" fill="url(#s0)"/><circle cx="367.7" cy="213.5" r="2.60" fill="url(#s0)"/><circle cx="427.5" cy="299.4" r="2.60" fill="url(#s5)"/><circle cx="203.5" cy="258.3" r="2.60" fill="url(#s2)"/><circle cx="330.4" cy="206.4" r="2.60" fill="url(#s0)"/><circle cx="274.9" cy="206.9" r="2.60" fill="url(#s0)"/><circle cx="323.0" cy="206.9" r="2.61" fill="url(#s0)"/><circle cx="356.4" cy="208.7" r="2.61" fill="url(#s0)"/><circle cx="399.3" cy="253.0" r="2.61" fill="url(#s5)"/><circle cx="167.0" cy="343.4" r="2.61" fill="url(#s5)"/><circle cx="315.7" cy="207.4" r="2.61" fill="url(#s0)"/><circle cx="190.3" cy="291.6" r="2.61" fill="url(#s5)"/><circle cx="267.5" cy="207.0" r="2.61" fill="url(#s0)"/><circle cx="371.7" cy="217.4" r="2.61" fill="url(#s0)"/><circle cx="308.3" cy="207.9" r="2.61" fill="url(#s0)"/><circle cx="227.3" cy="216.6" r="2.61" fill="url(#s0)"/><circle cx="238.0" cy="210.0" r="2.61" fill="url(#s0)"/><circle cx="206.8" cy="251.4" r="2.61" fill="url(#s1)"/><circle cx="423.7" cy="293.2" r="2.61" fill="url(#s5)"/><circle cx="395.5" cy="247.2" r="2.61" fill="url(#s5)"/><circle cx="300.9" cy="208.2" r="2.61" fill="url(#s0)"/><circle cx="260.1" cy="207.2" r="2.61" fill="url(#s0)"/><circle cx="170.2" cy="336.7" r="2.61" fill="url(#s5)"/><circle cx="245.4" cy="208.5" r="2.61" fill="url(#s0)"/><circle cx="349.1" cy="208.2" r="2.61" fill="url(#s0)"/><circle cx="375.7" cy="221.6" r="2.61" fill="url(#s0)"/><circle cx="252.7" cy="207.6" r="2.61" fill="url(#s0)"/><circle cx="293.6" cy="208.5" r="2.61" fill="url(#s0)"/><circle cx="391.6" cy="241.6" r="2.61" fill="url(#s3)"/><circle cx="223.8" cy="221.5" r="2.61" fill="url(#s0)"/><circle cx="210.1" cy="244.8" r="2.61" fill="url(#s1)"/><circle cx="379.7" cy="226.2" r="2.61" fill="url(#s0)"/><circle cx="193.5" cy="284.5" r="2.61" fill="url(#s5)"/><circle cx="387.7" cy="236.2" r="2.61" fill="url(#s2)"/><circle cx="360.5" cy="211.8" r="2.61" fill="url(#s0)"/><circle cx="383.7" cy="231.1" r="2.61" fill="url(#s1)"/><circle cx="213.5" cy="238.4" r="2.61" fill="url(#s0)"/><circle cx="220.3" cy="226.8" r="2.61" fill="url(#s0)"/><circle cx="286.2" cy="208.7" r="2.61" fill="url(#s0)"/><circle cx="419.9" cy="287.1" r="2.61" fill="url(#s5)"/><circle cx="341.8" cy="208.1" r="2.61" fill="url(#s0)"/><circle cx="216.9" cy="232.4" r="2.61" fill="url(#s0)"/><circle cx="173.5" cy="330.0" r="2.61" fill="url(#s5)"/><circle cx="234.5" cy="213.8" r="2.61" fill="url(#s0)"/><circle cx="334.4" cy="208.3" r="2.61" fill="url(#s0)"/><circle cx="278.8" cy="208.8" r="2.61" fill="url(#s0)"/><circle cx="90.0" cy="294.7" r="2.61" fill="url(#s0)"/><circle cx="456.3" cy="342.4" r="2.62" fill="url(#s0)"/><circle cx="327.1" cy="208.7" r="2.62" fill="url(#s0)"/><circle cx="196.8" cy="277.4" r="2.62" fill="url(#s5)"/><circle cx="416.1" cy="281.0" r="2.62" fill="url(#s5)"/><circle cx="271.4" cy="209.0" r="2.62" fill="url(#s0)"/><circle cx="319.7" cy="209.2" r="2.62" fill="url(#s0)"/><circle cx="176.7" cy="323.1" r="2.62" fill="url(#s5)"/><circle cx="364.6" cy="215.2" r="2.62" fill="url(#s0)"/><circle cx="353.2" cy="210.9" r="2.62" fill="url(#s0)"/><circle cx="312.3" cy="209.6" r="2.62" fill="url(#s0)"/><circle cx="241.8" cy="211.8" r="2.62" fill="url(#s0)"/><circle cx="85.2" cy="277.9" r="2.62" fill="url(#s0)"/><circle cx="452.5" cy="336.7" r="2.62" fill="url(#s1)"/><circle cx="263.9" cy="209.2" r="2.62" fill="url(#s0)"/><circle cx="304.9" cy="210.0" r="2.62" fill="url(#s0)"/><circle cx="230.9" cy="218.0" r="2.62" fill="url(#s0)"/><circle cx="249.1" cy="210.5" r="2.62" fill="url(#s0)"/><circle cx="256.5" cy="209.6" r="2.62" fill="url(#s0)"/><circle cx="412.3" cy="274.9" r="2.62" fill="url(#s5)"/><circle cx="200.0" cy="270.5" r="2.62" fill="url(#s5)"/><circle cx="297.5" cy="210.4" r="2.62" fill="url(#s0)"/><circle cx="180.0" cy="316.2" r="2.62" fill="url(#s5)"/><circle cx="345.9" cy="210.5" r="2.62" fill="url(#s0)"/><circle cx="448.7" cy="330.9" r="2.62" fill="url(#s3)"/><circle cx="368.7" cy="218.9" r="2.62" fill="url(#s0)"/><circle cx="290.1" cy="210.6" r="2.62" fill="url(#s0)"/><circle cx="408.5" cy="269.0" r="2.62" fill="url(#s5)"/><circle cx="203.4" cy="263.6" r="2.62" fill="url(#s4)"/><circle cx="227.4" cy="222.5" r="2.62" fill="url(#s0)"/><circle cx="338.5" cy="210.5" r="2.62" fill="url(#s0)"/><circle cx="357.3" cy="213.8" r="2.62" fill="url(#s0)"/><circle cx="444.9" cy="325.0" r="2.62" fill="url(#s4)"/><circle cx="282.7" cy="210.8" r="2.62" fill="url(#s0)"/><circle cx="183.2" cy="309.3" r="2.62" fill="url(#s5)"/><circle cx="372.7" cy="222.8" r="2.62" fill="url(#s0)"/><circle cx="238.2" cy="215.4" r="2.62" fill="url(#s0)"/><circle cx="404.6" cy="263.1" r="2.62" fill="url(#s5)"/><circle cx="331.1" cy="210.7" r="2.62" fill="url(#s0)"/><circle cx="206.7" cy="257.0" r="2.63" fill="url(#s2)"/><circle cx="275.2" cy="211.0" r="2.63" fill="url(#s0)"/><circle cx="223.9" cy="227.5" r="2.63" fill="url(#s0)"/><circle cx="323.7" cy="211.1" r="2.63" fill="url(#s0)"/><circle cx="441.0" cy="319.1" r="2.63" fill="url(#s5)"/><circle cx="376.8" cy="227.1" r="2.63" fill="url(#s0)"/><circle cx="400.7" cy="257.4" r="2.63" fill="url(#s5)"/><circle cx="210.1" cy="250.6" r="2.63" fill="url(#s1)"/><circle cx="316.3" cy="211.5" r="2.63" fill="url(#s0)"/><circle cx="267.8" cy="211.2" r="2.63" fill="url(#s0)"/><circle cx="220.4" cy="232.8" r="2.63" fill="url(#s0)"/><circle cx="245.5" cy="213.6" r="2.63" fill="url(#s0)"/><circle cx="186.5" cy="302.3" r="2.63" fill="url(#s5)"/><circle cx="213.5" cy="244.4" r="2.63" fill="url(#s1)"/><circle cx="216.9" cy="238.4" r="2.63" fill="url(#s0)"/><circle cx="350.0" cy="213.0" r="2.63" fill="url(#s0)"/><circle cx="260.4" cy="211.7" r="2.63" fill="url(#s0)"/><circle cx="308.9" cy="211.9" r="2.63" fill="url(#s0)"/><circle cx="396.8" cy="251.9" r="2.63" fill="url(#s5)"/><circle cx="380.8" cy="231.6" r="2.63" fill="url(#s1)"/><circle cx="252.9" cy="212.4" r="2.63" fill="url(#s0)"/><circle cx="361.5" cy="217.0" r="2.63" fill="url(#s0)"/><circle cx="392.8" cy="246.5" r="2.63" fill="url(#s5)"/><circle cx="437.2" cy="313.2" r="2.63" fill="url(#s5)"/><circle cx="384.8" cy="236.3" r="2.63" fill="url(#s2)"/><circle cx="301.5" cy="212.3" r="2.63" fill="url(#s0)"/><circle cx="388.8" cy="241.3" r="2.63" fill="url(#s3)"/><circle cx="234.6" cy="219.3" r="2.63" fill="url(#s0)"/><circle cx="189.8" cy="295.4" r="2.63" fill="url(#s5)"/><circle cx="294.0" cy="212.6" r="2.63" fill="url(#s0)"/><circle cx="342.6" cy="212.8" r="2.63" fill="url(#s0)"/><circle cx="433.4" cy="307.2" r="2.63" fill="url(#s5)"/><circle cx="286.6" cy="212.8" r="2.63" fill="url(#s0)"/><circle cx="152.3" cy="370.4" r="2.63" fill="url(#s0)"/><circle cx="335.2" cy="212.8" r="2.63" fill="url(#s0)"/><circle cx="365.6" cy="220.5" r="2.63" fill="url(#s0)"/><circle cx="155.7" cy="364.3" r="2.63" fill="url(#s1)"/><circle cx="193.1" cy="288.6" r="2.63" fill="url(#s5)"/><circle cx="279.1" cy="213.0" r="2.64" fill="url(#s0)"/><circle cx="241.9" cy="217.0" r="2.64" fill="url(#s0)"/><circle cx="231.0" cy="223.7" r="2.64" fill="url(#s0)"/><circle cx="354.2" cy="215.8" r="2.64" fill="url(#s0)"/><circle cx="429.6" cy="301.3" r="2.64" fill="url(#s5)"/><circle cx="327.8" cy="213.1" r="2.64" fill="url(#s0)"/><circle cx="159.1" cy="358.0" r="2.64" fill="url(#s4)"/><circle cx="271.7" cy="213.3" r="2.64" fill="url(#s0)"/><circle cx="320.4" cy="213.4" r="2.64" fill="url(#s0)"/><circle cx="249.3" cy="215.4" r="2.64" fill="url(#s0)"/><circle cx="84.1" cy="282.9" r="2.64" fill="url(#s0)"/><circle cx="196.4" cy="281.8" r="2.64" fill="url(#s5)"/><circle cx="264.2" cy="213.7" r="2.64" fill="url(#s0)"/><circle cx="162.4" cy="351.6" r="2.64" fill="url(#s5)"/><circle cx="312.9" cy="213.8" r="2.64" fill="url(#s0)"/><circle cx="256.8" cy="214.4" r="2.64" fill="url(#s0)"/><circle cx="425.7" cy="295.4" r="2.64" fill="url(#s5)"/><circle cx="369.7" cy="224.1" r="2.64" fill="url(#s0)"/><circle cx="227.5" cy="228.3" r="2.64" fill="url(#s0)"/><circle cx="305.5" cy="214.2" r="2.64" fill="url(#s0)"/><circle cx="346.8" cy="215.3" r="2.64" fill="url(#s0)"/><circle cx="165.8" cy="345.1" r="2.64" fill="url(#s5)"/><circle cx="199.8" cy="275.1" r="2.64" fill="url(#s5)"/><circle cx="421.8" cy="289.6" r="2.64" fill="url(#s5)"/><circle cx="298.0" cy="214.5" r="2.64" fill="url(#s0)"/><circle cx="238.3" cy="220.8" r="2.64" fill="url(#s0)"/><circle cx="358.3" cy="218.9" r="2.64" fill="url(#s0)"/><circle cx="223.9" cy="233.3" r="2.64" fill="url(#s0)"/><circle cx="373.8" cy="228.1" r="2.64" fill="url(#s0)"/><circle cx="169.1" cy="338.6" r="2.64" fill="url(#s5)"/><circle cx="203.1" cy="268.5" r="2.64" fill="url(#s5)"/><circle cx="339.4" cy="215.1" r="2.64" fill="url(#s0)"/><circle cx="290.6" cy="214.8" r="2.64" fill="url(#s0)"/><circle cx="417.9" cy="283.8" r="2.64" fill="url(#s5)"/><circle cx="220.4" cy="238.5" r="2.64" fill="url(#s0)"/><circle cx="206.5" cy="262.1" r="2.64" fill="url(#s4)"/><circle cx="283.1" cy="215.1" r="2.64" fill="url(#s0)"/><circle cx="331.9" cy="215.2" r="2.65" fill="url(#s0)"/><circle cx="172.4" cy="331.9" r="2.65" fill="url(#s5)"/><circle cx="377.9" cy="232.3" r="2.65" fill="url(#s1)"/><circle cx="216.9" cy="244.1" r="2.65" fill="url(#s1)"/><circle cx="210.0" cy="255.9" r="2.65" fill="url(#s2)"/><circle cx="414.0" cy="278.0" r="2.65" fill="url(#s5)"/><circle cx="245.7" cy="218.7" r="2.65" fill="url(#s0)"/><circle cx="213.4" cy="249.9" r="2.65" fill="url(#s1)"/><circle cx="275.6" cy="215.4" r="2.65" fill="url(#s0)"/><circle cx="324.5" cy="215.5" r="2.65" fill="url(#s0)"/><circle cx="350.9" cy="217.9" r="2.65" fill="url(#s0)"/><circle cx="268.1" cy="215.8" r="2.65" fill="url(#s0)"/><circle cx="410.1" cy="272.4" r="2.65" fill="url(#s5)"/><circle cx="382.0" cy="236.6" r="2.65" fill="url(#s1)"/><circle cx="234.7" cy="224.9" r="2.65" fill="url(#s0)"/><circle cx="253.1" cy="217.3" r="2.65" fill="url(#s0)"/><circle cx="362.4" cy="222.1" r="2.65" fill="url(#s0)"/><circle cx="175.8" cy="325.3" r="2.65" fill="url(#s5)"/><circle cx="317.0" cy="215.8" r="2.65" fill="url(#s0)"/><circle cx="260.6" cy="216.4" r="2.65" fill="url(#s0)"/><circle cx="406.1" cy="266.8" r="2.65" fill="url(#s5)"/><circle cx="386.0" cy="241.2" r="2.65" fill="url(#s2)"/><circle cx="309.5" cy="216.2" r="2.65" fill="url(#s0)"/><circle cx="402.1" cy="261.4" r="2.65" fill="url(#s5)"/><circle cx="390.1" cy="246.0" r="2.65" fill="url(#s4)"/><circle cx="179.1" cy="318.6" r="2.65" fill="url(#s5)"/><circle cx="398.1" cy="256.1" r="2.65" fill="url(#s5)"/><circle cx="394.1" cy="251.0" r="2.65" fill="url(#s5)"/><circle cx="302.0" cy="216.6" r="2.65" fill="url(#s0)"/><circle cx="343.5" cy="217.5" r="2.65" fill="url(#s0)"/><circle cx="294.5" cy="216.9" r="2.65" fill="url(#s0)"/><circle cx="231.1" cy="229.2" r="2.65" fill="url(#s0)"/><circle cx="366.6" cy="225.6" r="2.65" fill="url(#s0)"/><circle cx="242.1" cy="222.3" r="2.65" fill="url(#s0)"/><circle cx="182.5" cy="311.9" r="2.65" fill="url(#s5)"/><circle cx="336.1" cy="217.5" r="2.65" fill="url(#s0)"/><circle cx="287.0" cy="217.2" r="2.65" fill="url(#s0)"/><circle cx="355.1" cy="220.8" r="2.66" fill="url(#s0)"/><circle cx="279.5" cy="217.5" r="2.66" fill="url(#s0)"/><circle cx="185.8" cy="305.3" r="2.66" fill="url(#s5)"/><circle cx="328.6" cy="217.6" r="2.66" fill="url(#s0)"/><circle cx="249.5" cy="220.5" r="2.66" fill="url(#s0)"/><circle cx="227.5" cy="233.9" r="2.66" fill="url(#s0)"/><circle cx="272.0" cy="217.9" r="2.66" fill="url(#s0)"/><circle cx="321.1" cy="217.9" r="2.66" fill="url(#s0)"/><circle cx="370.7" cy="229.2" r="2.66" fill="url(#s0)"/><circle cx="257.0" cy="219.2" r="2.66" fill="url(#s0)"/><circle cx="264.5" cy="218.4" r="2.66" fill="url(#s0)"/><circle cx="455.4" cy="336.6" r="2.66" fill="url(#s0)"/><circle cx="189.2" cy="298.6" r="2.66" fill="url(#s5)"/><circle cx="313.6" cy="218.3" r="2.66" fill="url(#s0)"/><circle cx="347.7" cy="220.1" r="2.66" fill="url(#s0)"/><circle cx="78.2" cy="271.4" r="2.66" fill="url(#s0)"/><circle cx="238.4" cy="226.1" r="2.66" fill="url(#s0)"/><circle cx="223.9" cy="238.8" r="2.66" fill="url(#s0)"/><circle cx="451.5" cy="331.0" r="2.66" fill="url(#s1)"/><circle cx="306.1" cy="218.6" r="2.66" fill="url(#s0)"/><circle cx="192.6" cy="292.1" r="2.66" fill="url(#s5)"/><circle cx="359.3" cy="223.9" r="2.66" fill="url(#s0)"/><circle cx="374.9" cy="233.1" r="2.66" fill="url(#s1)"/><circle cx="298.6" cy="219.0" r="2.66" fill="url(#s0)"/><circle cx="447.6" cy="325.3" r="2.66" fill="url(#s3)"/><circle cx="196.0" cy="285.6" r="2.66" fill="url(#s5)"/><circle cx="220.4" cy="243.9" r="2.66" fill="url(#s1)"/><circle cx="340.2" cy="219.8" r="2.66" fill="url(#s0)"/><circle cx="291.0" cy="219.3" r="2.66" fill="url(#s0)"/><circle cx="443.7" cy="319.6" r="2.66" fill="url(#s4)"/><circle cx="199.4" cy="279.2" r="2.66" fill="url(#s5)"/><circle cx="245.9" cy="223.9" r="2.67" fill="url(#s0)"/><circle cx="216.8" cy="249.3" r="2.67" fill="url(#s1)"/><circle cx="332.7" cy="219.8" r="2.67" fill="url(#s0)"/><circle cx="283.5" cy="219.6" r="2.67" fill="url(#s0)"/><circle cx="379.0" cy="237.1" r="2.67" fill="url(#s1)"/><circle cx="202.9" cy="272.9" r="2.67" fill="url(#s5)"/><circle cx="213.3" cy="254.9" r="2.67" fill="url(#s2)"/><circle cx="234.8" cy="230.2" r="2.67" fill="url(#s0)"/><circle cx="206.3" cy="266.7" r="2.67" fill="url(#s5)"/><circle cx="439.7" cy="314.0" r="2.67" fill="url(#s5)"/><circle cx="209.8" cy="260.7" r="2.67" fill="url(#s3)"/><circle cx="276.0" cy="220.0" r="2.67" fill="url(#s0)"/><circle cx="351.9" cy="222.8" r="2.67" fill="url(#s0)"/><circle cx="253.3" cy="222.3" r="2.67" fill="url(#s0)"/><circle cx="363.5" cy="227.1" r="2.67" fill="url(#s0)"/><circle cx="325.2" cy="220.1" r="2.67" fill="url(#s0)"/><circle cx="268.4" cy="220.5" r="2.67" fill="url(#s0)"/><circle cx="260.9" cy="221.2" r="2.67" fill="url(#s0)"/><circle cx="435.8" cy="308.3" r="2.67" fill="url(#s5)"/><circle cx="383.2" cy="241.4" r="2.67" fill="url(#s2)"/><circle cx="317.7" cy="220.4" r="2.67" fill="url(#s0)"/><circle cx="431.8" cy="302.7" r="2.67" fill="url(#s5)"/><circle cx="310.2" cy="220.7" r="2.67" fill="url(#s0)"/><circle cx="387.3" cy="245.8" r="2.67" fill="url(#s3)"/><circle cx="231.2" cy="234.6" r="2.67" fill="url(#s0)"/><circle cx="344.4" cy="222.3" r="2.67" fill="url(#s0)"/><circle cx="427.8" cy="297.1" r="2.67" fill="url(#s5)"/><circle cx="302.6" cy="221.1" r="2.67" fill="url(#s0)"/><circle cx="242.2" cy="227.5" r="2.67" fill="url(#s0)"/><circle cx="391.4" cy="250.3" r="2.67" fill="url(#s5)"/><circle cx="423.9" cy="291.5" r="2.67" fill="url(#s5)"/><circle cx="367.7" cy="230.5" r="2.67" fill="url(#s0)"/><circle cx="295.1" cy="221.4" r="2.67" fill="url(#s0)"/><circle cx="419.9" cy="286.0" r="2.67" fill="url(#s5)"/><circle cx="395.5" cy="255.1" r="2.67" fill="url(#s5)"/><circle cx="154.1" cy="365.0" r="2.68" fill="url(#s0)"/><circle cx="356.1" cy="225.7" r="2.68" fill="url(#s0)"/><circle cx="336.9" cy="222.2" r="2.68" fill="url(#s0)"/><circle cx="415.8" cy="280.6" r="2.68" fill="url(#s5)"/><circle cx="287.5" cy="221.7" r="2.68" fill="url(#s0)"/><circle cx="399.6" cy="259.9" r="2.68" fill="url(#s5)"/><circle cx="157.5" cy="358.8" r="2.68" fill="url(#s1)"/><circle cx="411.8" cy="275.3" r="2.68" fill="url(#s5)"/><circle cx="403.7" cy="264.9" r="2.68" fill="url(#s5)"/><circle cx="407.8" cy="270.0" r="2.68" fill="url(#s5)"/><circle cx="227.5" cy="239.1" r="2.68" fill="url(#s0)"/><circle cx="249.7" cy="225.5" r="2.68" fill="url(#s0)"/><circle cx="279.9" cy="222.1" r="2.68" fill="url(#s0)"/><circle cx="160.9" cy="352.5" r="2.68" fill="url(#s4)"/><circle cx="329.4" cy="222.3" r="2.68" fill="url(#s0)"/><circle cx="272.3" cy="222.5" r="2.68" fill="url(#s0)"/><circle cx="257.2" cy="224.1" r="2.68" fill="url(#s0)"/><circle cx="164.4" cy="346.1" r="2.68" fill="url(#s5)"/><circle cx="371.8" cy="234.0" r="2.68" fill="url(#s1)"/><circle cx="264.8" cy="223.2" r="2.68" fill="url(#s0)"/><circle cx="321.8" cy="222.5" r="2.68" fill="url(#s0)"/><circle cx="238.5" cy="231.3" r="2.68" fill="url(#s0)"/><circle cx="167.8" cy="339.7" r="2.68" fill="url(#s5)"/><circle cx="348.6" cy="224.9" r="2.68" fill="url(#s0)"/><circle cx="223.9" cy="243.9" r="2.68" fill="url(#s1)"/><circle cx="314.3" cy="222.8" r="2.68" fill="url(#s0)"/><circle cx="171.2" cy="333.3" r="2.68" fill="url(#s5)"/><circle cx="360.3" cy="228.7" r="2.68" fill="url(#s0)"/><circle cx="306.7" cy="223.2" r="2.68" fill="url(#s0)"/><circle cx="174.7" cy="326.9" r="2.68" fill="url(#s5)"/><circle cx="376.0" cy="237.8" r="2.68" fill="url(#s1)"/><circle cx="220.3" cy="248.9" r="2.68" fill="url(#s1)"/><circle cx="299.1" cy="223.5" r="2.68" fill="url(#s0)"/><circle cx="341.1" cy="224.6" r="2.68" fill="url(#s0)"/><circle cx="246.0" cy="229.0" r="2.69" fill="url(#s0)"/><circle cx="178.1" cy="320.5" r="2.69" fill="url(#s5)"/><circle cx="291.5" cy="223.8" r="2.69" fill="url(#s0)"/><circle cx="234.9" cy="235.4" r="2.69" fill="url(#s0)"/><circle cx="216.7" cy="254.2" r="2.69" fill="url(#s2)"/><circle cx="181.6" cy="314.0" r="2.69" fill="url(#s5)"/><circle cx="333.6" cy="224.5" r="2.69" fill="url(#s0)"/><circle cx="283.9" cy="224.2" r="2.69" fill="url(#s0)"/><circle cx="380.2" cy="241.7" r="2.69" fill="url(#s2)"/><circle cx="253.5" cy="227.2" r="2.69" fill="url(#s0)"/><circle cx="185.0" cy="307.7" r="2.69" fill="url(#s5)"/><circle cx="352.8" cy="227.6" r="2.69" fill="url(#s0)"/><circle cx="276.3" cy="224.6" r="2.69" fill="url(#s0)"/><circle cx="213.1" cy="259.6" r="2.69" fill="url(#s3)"/><circle cx="364.5" cy="231.9" r="2.69" fill="url(#s0)"/><circle cx="326.0" cy="224.7" r="2.69" fill="url(#s0)"/><circle cx="261.1" cy="226.0" r="2.69" fill="url(#s0)"/><circle cx="268.7" cy="225.2" r="2.69" fill="url(#s0)"/><circle cx="188.5" cy="301.3" r="2.69" fill="url(#s5)"/><circle cx="209.6" cy="265.1" r="2.69" fill="url(#s5)"/><circle cx="192.0" cy="295.0" r="2.69" fill="url(#s5)"/><circle cx="318.4" cy="225.0" r="2.69" fill="url(#s0)"/><circle cx="206.0" cy="270.9" r="2.69" fill="url(#s5)"/><circle cx="195.5" cy="288.8" r="2.69" fill="url(#s5)"/><circle cx="202.5" cy="276.7" r="2.69" fill="url(#s5)"/><circle cx="199.0" cy="282.7" r="2.69" fill="url(#s5)"/><circle cx="384.4" cy="245.7" r="2.69" fill="url(#s3)"/><circle cx="231.2" cy="239.7" r="2.69" fill="url(#s0)"/><circle cx="310.8" cy="225.3" r="2.69" fill="url(#s0)"/><circle cx="242.3" cy="232.6" r="2.69" fill="url(#s0)"/><circle cx="345.3" cy="227.1" r="2.69" fill="url(#s0)"/><circle cx="303.2" cy="225.7" r="2.69" fill="url(#s0)"/><circle cx="368.8" cy="235.2" r="2.70" fill="url(#s0)"/><circle cx="388.6" cy="249.9" r="2.70" fill="url(#s5)"/><circle cx="295.6" cy="226.0" r="2.70" fill="url(#s0)"/><circle cx="357.1" cy="230.5" r="2.70" fill="url(#s0)"/><circle cx="337.8" cy="226.9" r="2.70" fill="url(#s0)"/><circle cx="249.9" cy="230.5" r="2.70" fill="url(#s0)"/><circle cx="288.0" cy="226.4" r="2.70" fill="url(#s0)"/><circle cx="227.5" cy="244.1" r="2.70" fill="url(#s0)"/><circle cx="392.8" cy="254.2" r="2.70" fill="url(#s5)"/><circle cx="280.3" cy="226.8" r="2.70" fill="url(#s0)"/><circle cx="330.2" cy="226.9" r="2.70" fill="url(#s0)"/><circle cx="257.4" cy="229.0" r="2.70" fill="url(#s0)"/><circle cx="272.7" cy="227.3" r="2.70" fill="url(#s0)"/><circle cx="265.1" cy="228.0" r="2.70" fill="url(#s0)"/><circle cx="238.6" cy="236.4" r="2.70" fill="url(#s0)"/><circle cx="397.0" cy="258.7" r="2.70" fill="url(#s5)"/><circle cx="322.6" cy="227.2" r="2.70" fill="url(#s0)"/><circle cx="373.0" cy="238.6" r="2.70" fill="url(#s1)"/><circle cx="349.6" cy="229.7" r="2.70" fill="url(#s0)"/><circle cx="223.9" cy="248.8" r="2.70" fill="url(#s1)"/><circle cx="314.9" cy="227.5" r="2.70" fill="url(#s0)"/><circle cx="401.2" cy="263.3" r="2.70" fill="url(#s5)"/><circle cx="361.3" cy="233.4" r="2.70" fill="url(#s0)"/><circle cx="307.3" cy="227.8" r="2.70" fill="url(#s0)"/><circle cx="405.3" cy="268.0" r="2.70" fill="url(#s5)"/><circle cx="454.6" cy="330.4" r="2.71" fill="url(#s0)"/><circle cx="342.0" cy="229.3" r="2.71" fill="url(#s0)"/><circle cx="299.7" cy="228.2" r="2.71" fill="url(#s0)"/><circle cx="450.5" cy="325.0" r="2.71" fill="url(#s1)"/><circle cx="246.2" cy="233.9" r="2.71" fill="url(#s0)"/><circle cx="409.5" cy="272.8" r="2.71" fill="url(#s5)"/><circle cx="220.2" cy="253.6" r="2.71" fill="url(#s2)"/><circle cx="377.3" cy="242.2" r="2.71" fill="url(#s1)"/><circle cx="446.5" cy="319.6" r="2.71" fill="url(#s3)"/><circle cx="413.7" cy="277.7" r="2.71" fill="url(#s5)"/><circle cx="442.4" cy="314.2" r="2.71" fill="url(#s5)"/><circle cx="292.0" cy="228.5" r="2.71" fill="url(#s0)"/><circle cx="234.9" cy="240.3" r="2.71" fill="url(#s0)"/><circle cx="438.3" cy="308.8" r="2.71" fill="url(#s5)"/><circle cx="417.8" cy="282.7" r="2.71" fill="url(#s5)"/><circle cx="434.2" cy="303.5" r="2.71" fill="url(#s5)"/><circle cx="421.9" cy="287.8" r="2.71" fill="url(#s5)"/><circle cx="430.1" cy="298.2" r="2.71" fill="url(#s5)"/><circle cx="426.0" cy="293.0" r="2.71" fill="url(#s5)"/><circle cx="334.4" cy="229.2" r="2.71" fill="url(#s0)"/><circle cx="284.4" cy="228.9" r="2.71" fill="url(#s0)"/><circle cx="253.7" cy="232.1" r="2.71" fill="url(#s0)"/><circle cx="216.6" cy="258.6" r="2.71" fill="url(#s3)"/><circle cx="276.7" cy="229.4" r="2.71" fill="url(#s0)"/><circle cx="353.8" cy="232.3" r="2.71" fill="url(#s0)"/><circle cx="261.4" cy="230.9" r="2.71" fill="url(#s0)"/><circle cx="269.0" cy="230.0" r="2.71" fill="url(#s0)"/><circle cx="326.8" cy="229.4" r="2.71" fill="url(#s0)"/><circle cx="365.6" cy="236.5" r="2.71" fill="url(#s0)"/><circle cx="381.5" cy="245.9" r="2.71" fill="url(#s2)"/><circle cx="319.1" cy="229.7" r="2.71" fill="url(#s0)"/><circle cx="212.9" cy="263.7" r="2.71" fill="url(#s5)"/><circle cx="231.2" cy="244.5" r="2.71" fill="url(#s0)"/><circle cx="311.4" cy="230.0" r="2.71" fill="url(#s0)"/><circle cx="242.4" cy="237.5" r="2.71" fill="url(#s0)"/><circle cx="346.2" cy="231.8" r="2.71" fill="url(#s0)"/><circle cx="209.3" cy="269.1" r="2.72" fill="url(#s5)"/><circle cx="303.8" cy="230.4" r="2.72" fill="url(#s0)"/><circle cx="385.8" cy="249.7" r="2.72" fill="url(#s3)"/><circle cx="296.1" cy="230.7" r="2.72" fill="url(#s0)"/><circle cx="205.7" cy="274.5" r="2.72" fill="url(#s5)"/><circle cx="369.9" cy="239.7" r="2.72" fill="url(#s1)"/><circle cx="338.6" cy="231.6" r="2.72" fill="url(#s0)"/><circle cx="358.1" cy="235.1" r="2.72" fill="url(#s0)"/><circle cx="250.0" cy="235.3" r="2.72" fill="url(#s0)"/><circle cx="288.4" cy="231.1" r="2.72" fill="url(#s0)"/><circle cx="202.0" cy="280.1" r="2.72" fill="url(#s5)"/><circle cx="227.5" cy="248.8" r="2.72" fill="url(#s1)"/><circle cx="155.7" cy="358.8" r="2.72" fill="url(#s0)"/><circle cx="280.7" cy="231.5" r="2.72" fill="url(#s0)"/><circle cx="159.3" cy="352.7" r="2.72" fill="url(#s1)"/><circle cx="331.0" cy="231.7" r="2.72" fill="url(#s0)"/><circle cx="390.0" cy="253.7" r="2.72" fill="url(#s5)"/><circle cx="198.4" cy="285.8" r="2.72" fill="url(#s5)"/><circle cx="162.8" cy="346.5" r="2.72" fill="url(#s4)"/><circle cx="257.7" cy="233.8" r="2.72" fill="url(#s0)"/><circle cx="166.3" cy="340.3" r="2.72" fill="url(#s5)"/><circle cx="273.0" cy="232.0" r="2.72" fill="url(#s0)"/><circle cx="265.3" cy="232.8" r="2.72" fill="url(#s0)"/><circle cx="194.8" cy="291.6" r="2.72" fill="url(#s5)"/><circle cx="169.9" cy="334.1" r="2.72" fill="url(#s5)"/><circle cx="238.7" cy="241.2" r="2.72" fill="url(#s0)"/><circle cx="173.4" cy="327.9" r="2.72" fill="url(#s5)"/><circle cx="191.2" cy="297.5" r="2.72" fill="url(#s5)"/><circle cx="177.0" cy="321.7" r="2.72" fill="url(#s5)"/><circle cx="323.3" cy="231.9" r="2.72" fill="url(#s0)"/><circle cx="187.7" cy="303.5" r="2.72" fill="url(#s5)"/><circle cx="180.5" cy="315.6" r="2.72" fill="url(#s5)"/><circle cx="184.1" cy="309.5" r="2.72" fill="url(#s5)"/><circle cx="350.5" cy="234.3" r="2.72" fill="url(#s0)"/><circle cx="315.6" cy="232.2" r="2.72" fill="url(#s0)"/><circle cx="374.2" cy="243.0" r="2.72" fill="url(#s1)"/><circle cx="394.3" cy="257.8" r="2.72" fill="url(#s5)"/><circle cx="223.8" cy="253.2" r="2.73" fill="url(#s1)"/><circle cx="307.9" cy="232.6" r="2.73" fill="url(#s0)"/><circle cx="362.4" cy="238.0" r="2.73" fill="url(#s0)"/><circle cx="300.2" cy="232.9" r="2.73" fill="url(#s0)"/><circle cx="342.9" cy="234.0" r="2.73" fill="url(#s0)"/><circle cx="246.3" cy="238.7" r="2.73" fill="url(#s0)"/><circle cx="398.6" cy="262.0" r="2.73" fill="url(#s5)"/><circle cx="292.5" cy="233.3" r="2.73" fill="url(#s0)"/><circle cx="235.0" cy="245.0" r="2.73" fill="url(#s0)"/><circle cx="220.1" cy="257.9" r="2.73" fill="url(#s2)"/><circle cx="335.2" cy="234.0" r="2.73" fill="url(#s0)"/><circle cx="284.8" cy="233.7" r="2.73" fill="url(#s0)"/><circle cx="378.5" cy="246.4" r="2.73" fill="url(#s2)"/><circle cx="253.9" cy="236.9" r="2.73" fill="url(#s0)"/><circle cx="402.8" cy="266.3" r="2.73" fill="url(#s5)"/><circle cx="277.1" cy="234.1" r="2.73" fill="url(#s0)"/><circle cx="261.6" cy="235.6" r="2.73" fill="url(#s0)"/><circle cx="354.8" cy="236.9" r="2.73" fill="url(#s0)"/><circle cx="269.3" cy="234.7" r="2.73" fill="url(#s0)"/><circle cx="327.5" cy="234.1" r="2.73" fill="url(#s0)"/><circle cx="366.7" cy="240.9" r="2.73" fill="url(#s0)"/><circle cx="319.8" cy="234.4" r="2.73" fill="url(#s0)"/><circle cx="407.1" cy="270.7" r="2.74" fill="url(#s5)"/><circle cx="216.4" cy="262.6" r="2.74" fill="url(#s4)"/><circle cx="312.1" cy="234.8" r="2.74" fill="url(#s0)"/><circle cx="242.5" cy="242.2" r="2.74" fill="url(#s0)"/><circle cx="382.8" cy="249.9" r="2.74" fill="url(#s2)"/><circle cx="231.2" cy="249.0" r="2.74" fill="url(#s1)"/><circle cx="347.2" cy="236.4" r="2.74" fill="url(#s0)"/><circle cx="411.4" cy="275.2" r="2.74" fill="url(#s5)"/><circle cx="304.4" cy="235.1" r="2.74" fill="url(#s0)"/><circle cx="212.6" cy="267.5" r="2.74" fill="url(#s5)"/><circle cx="296.6" cy="235.5" r="2.74" fill="url(#s0)"/><circle cx="415.6" cy="279.7" r="2.74" fill="url(#s5)"/><circle cx="339.5" cy="236.3" r="2.74" fill="url(#s0)"/><circle cx="250.2" cy="240.1" r="2.74" fill="url(#s0)"/><circle cx="288.9" cy="235.9" r="2.74" fill="url(#s0)"/><circle cx="359.2" cy="239.6" r="2.74" fill="url(#s0)"/><circle cx="371.1" cy="244.0" r="2.74" fill="url(#s1)"/><circle cx="419.9" cy="284.4" r="2.74" fill="url(#s5)"/><circle cx="387.2" cy="253.5" r="2.74" fill="url(#s4)"/><circle cx="281.1" cy="236.3" r="2.74" fill="url(#s0)"/><circle cx="331.8" cy="236.4" r="2.74" fill="url(#s0)"/><circle cx="208.9" cy="272.6" r="2.74" fill="url(#s5)"/><circle cx="257.9" cy="238.6" r="2.74" fill="url(#s0)"/><circle cx="273.4" cy="236.8" r="2.74" fill="url(#s0)"/><circle cx="265.6" cy="237.5" r="2.74" fill="url(#s0)"/><circle cx="227.4" cy="253.1" r="2.74" fill="url(#s1)"/><circle cx="424.1" cy="289.2" r="2.74" fill="url(#s5)"/><circle cx="324.1" cy="236.7" r="2.74" fill="url(#s0)"/><circle cx="238.7" cy="245.7" r="2.75" fill="url(#s0)"/><circle cx="428.4" cy="294.0" r="2.75" fill="url(#s5)"/><circle cx="316.3" cy="237.0" r="2.75" fill="url(#s0)"/><circle cx="351.5" cy="238.9" r="2.75" fill="url(#s0)"/><circle cx="205.2" cy="277.7" r="2.75" fill="url(#s5)"/><circle cx="432.6" cy="298.9" r="2.75" fill="url(#s5)"/><circle cx="391.5" cy="257.2" r="2.75" fill="url(#s5)"/><circle cx="308.6" cy="237.4" r="2.75" fill="url(#s0)"/><circle cx="436.8" cy="303.8" r="2.75" fill="url(#s5)"/><circle cx="375.4" cy="247.1" r="2.75" fill="url(#s1)"/><circle cx="201.5" cy="283.0" r="2.75" fill="url(#s5)"/><circle cx="441.0" cy="308.8" r="2.75" fill="url(#s5)"/><circle cx="300.8" cy="237.7" r="2.75" fill="url(#s0)"/><circle cx="363.5" cy="242.4" r="2.75" fill="url(#s0)"/><circle cx="343.8" cy="238.7" r="2.75" fill="url(#s0)"/><circle cx="223.7" cy="257.4" r="2.75" fill="url(#s2)"/><circle cx="445.3" cy="313.9" r="2.75" fill="url(#s4)"/><circle cx="246.4" cy="243.3" r="2.75" fill="url(#s0)"/><circle cx="293.0" cy="238.1" r="2.75" fill="url(#s0)"/><circle cx="449.5" cy="319.0" r="2.75" fill="url(#s2)"/><circle cx="453.7" cy="324.1" r="2.75" fill="url(#s0)"/><circle cx="197.8" cy="288.4" r="2.75" fill="url(#s5)"/><circle cx="285.2" cy="238.5" r="2.75" fill="url(#s0)"/><circle cx="336.1" cy="238.7" r="2.75" fill="url(#s0)"/><circle cx="395.9" cy="261.0" r="2.75" fill="url(#s5)"/><circle cx="235.0" cy="249.4" r="2.75" fill="url(#s1)"/><circle cx="254.1" cy="241.6" r="2.75" fill="url(#s0)"/><circle cx="277.5" cy="238.9" r="2.75" fill="url(#s0)"/><circle cx="194.1" cy="293.9" r="2.76" fill="url(#s5)"/><circle cx="328.3" cy="238.9" r="2.76" fill="url(#s0)"/><circle cx="261.9" cy="240.4" r="2.76" fill="url(#s0)"/><circle cx="269.7" cy="239.5" r="2.76" fill="url(#s0)"/><circle cx="355.9" cy="241.5" r="2.76" fill="url(#s0)"/><circle cx="379.8" cy="250.3" r="2.76" fill="url(#s2)"/><circle cx="219.9" cy="261.8" r="2.76" fill="url(#s3)"/><circle cx="320.6" cy="239.3" r="2.76" fill="url(#s0)"/><circle cx="190.4" cy="299.4" r="2.76" fill="url(#s5)"/><circle cx="400.2" cy="264.9" r="2.76" fill="url(#s5)"/><circle cx="367.9" cy="245.2" r="2.76" fill="url(#s0)"/><circle cx="312.8" cy="239.6" r="2.76" fill="url(#s0)"/><circle cx="186.7" cy="305.1" r="2.76" fill="url(#s5)"/><circle cx="305.0" cy="240.0" r="2.76" fill="url(#s0)"/><circle cx="348.2" cy="241.1" r="2.76" fill="url(#s0)"/><circle cx="242.6" cy="246.7" r="2.76" fill="url(#s0)"/><circle cx="183.1" cy="310.8" r="2.76" fill="url(#s5)"/><circle cx="297.2" cy="240.4" r="2.76" fill="url(#s0)"/><circle cx="231.1" cy="253.3" r="2.76" fill="url(#s1)"/><circle cx="179.4" cy="316.6" r="2.76" fill="url(#s5)"/><circle cx="216.1" cy="266.3" r="2.76" fill="url(#s4)"/><circle cx="404.6" cy="268.9" r="2.76" fill="url(#s5)"/><circle cx="175.7" cy="322.5" r="2.76" fill="url(#s5)"/><circle cx="340.4" cy="241.0" r="2.76" fill="url(#s0)"/><circle cx="384.2" cy="253.6" r="2.76" fill="url(#s2)"/><circle cx="289.4" cy="240.7" r="2.76" fill="url(#s0)"/><circle cx="172.0" cy="328.3" r="2.76" fill="url(#s5)"/><circle cx="250.3" cy="244.7" r="2.76" fill="url(#s0)"/><circle cx="281.6" cy="241.1" r="2.77" fill="url(#s0)"/><circle cx="168.4" cy="334.3" r="2.77" fill="url(#s5)"/><circle cx="360.3" cy="244.1" r="2.77" fill="url(#s0)"/><circle cx="332.6" cy="241.2" r="2.77" fill="url(#s0)"/><circle cx="164.7" cy="340.2" r="2.77" fill="url(#s4)"/><circle cx="273.7" cy="241.6" r="2.77" fill="url(#s0)"/><circle cx="258.1" cy="243.2" r="2.77" fill="url(#s0)"/><circle cx="161.1" cy="346.2" r="2.77" fill="url(#s1)"/><circle cx="265.9" cy="242.3" r="2.77" fill="url(#s0)"/><circle cx="372.3" cy="248.1" r="2.77" fill="url(#s1)"/><circle cx="408.9" cy="273.0" r="2.77" fill="url(#s5)"/><circle cx="324.8" cy="241.5" r="2.77" fill="url(#s0)"/><circle cx="157.4" cy="352.2" r="2.77" fill="url(#s0)"/><circle cx="212.3" cy="270.9" r="2.77" fill="url(#s5)"/><circle cx="317.0" cy="241.9" r="2.77" fill="url(#s0)"/><circle cx="227.3" cy="257.2" r="2.77" fill="url(#s1)"/><circle cx="238.8" cy="250.1" r="2.77" fill="url(#s0)"/><circle cx="352.5" cy="243.5" r="2.77" fill="url(#s0)"/><circle cx="388.6" cy="257.0" r="2.77" fill="url(#s3)"/><circle cx="309.2" cy="242.3" r="2.77" fill="url(#s0)"/><circle cx="413.3" cy="277.2" r="2.77" fill="url(#s5)"/><circle cx="301.4" cy="242.7" r="2.77" fill="url(#s0)"/><circle cx="208.5" cy="275.7" r="2.77" fill="url(#s5)"/><circle cx="344.8" cy="243.4" r="2.77" fill="url(#s0)"/><circle cx="293.5" cy="243.0" r="2.77" fill="url(#s0)"/><circle cx="364.7" cy="246.7" r="2.77" fill="url(#s0)"/><circle cx="246.5" cy="247.8" r="2.78" fill="url(#s0)"/><circle cx="376.7" cy="251.1" r="2.78" fill="url(#s1)"/><circle cx="417.7" cy="281.4" r="2.78" fill="url(#s5)"/><circle cx="285.7" cy="243.4" r="2.78" fill="url(#s0)"/><circle cx="337.0" cy="243.5" r="2.78" fill="url(#s0)"/><circle cx="393.1" cy="260.5" r="2.78" fill="url(#s5)"/><circle cx="277.8" cy="243.8" r="2.78" fill="url(#s0)"/><circle cx="223.5" cy="261.2" r="2.78" fill="url(#s2)"/><circle cx="254.3" cy="246.2" r="2.78" fill="url(#s0)"/><circle cx="204.7" cy="280.5" r="2.78" fill="url(#s5)"/><circle cx="329.1" cy="243.8" r="2.78" fill="url(#s0)"/><circle cx="270.0" cy="244.3" r="2.78" fill="url(#s0)"/><circle cx="262.1" cy="245.1" r="2.78" fill="url(#s0)"/><circle cx="234.9" cy="253.7" r="2.78" fill="url(#s1)"/><circle cx="422.1" cy="285.8" r="2.78" fill="url(#s5)"/><circle cx="321.3" cy="244.2" r="2.78" fill="url(#s0)"/><circle cx="357.0" cy="246.0" r="2.78" fill="url(#s0)"/><circle cx="313.5" cy="244.6" r="2.78" fill="url(#s0)"/><circle cx="200.9" cy="285.5" r="2.78" fill="url(#s5)"/><circle cx="426.4" cy="290.2" r="2.78" fill="url(#s5)"/><circle cx="305.6" cy="245.0" r="2.78" fill="url(#s0)"/><circle cx="397.5" cy="264.0" r="2.78" fill="url(#s5)"/><circle cx="381.2" cy="254.1" r="2.78" fill="url(#s1)"/><circle cx="369.1" cy="249.4" r="2.78" fill="url(#s0)"/><circle cx="349.2" cy="245.8" r="2.78" fill="url(#s0)"/><circle cx="297.7" cy="245.4" r="2.78" fill="url(#s0)"/><circle cx="219.6" cy="265.4" r="2.78" fill="url(#s3)"/><circle cx="242.7" cy="251.1" r="2.79" fill="url(#s0)"/><circle cx="430.8" cy="294.6" r="2.79" fill="url(#s5)"/><circle cx="289.9" cy="245.7" r="2.79" fill="url(#s0)"/><circle cx="197.1" cy="290.6" r="2.79" fill="url(#s5)"/><circle cx="341.3" cy="245.8" r="2.79" fill="url(#s0)"/><circle cx="328.1" cy="456.9" r="2.79" fill="url(#s4)"/><circle cx="332.4" cy="462.1" r="2.79" fill="url(#s4)"/><circle cx="282.0" cy="246.0" r="2.79" fill="url(#s0)"/><circle cx="320.3" cy="457.6" r="2.79" fill="url(#s5)"/><circle cx="231.1" cy="257.3" r="2.79" fill="url(#s1)"/><circle cx="336.0" cy="455.9" r="2.79" fill="url(#s1)"/><circle cx="324.5" cy="462.9" r="2.79" fill="url(#s5)"/><circle cx="333.5" cy="246.1" r="2.79" fill="url(#s0)"/><circle cx="340.3" cy="461.2" r="2.79" fill="url(#s1)"/><circle cx="250.5" cy="249.2" r="2.79" fill="url(#s0)"/><circle cx="435.2" cy="299.2" r="2.79" fill="url(#s5)"/><circle cx="401.9" cy="267.6" r="2.79" fill="url(#s5)"/><circle cx="274.1" cy="246.4" r="2.79" fill="url(#s0)"/><circle cx="316.6" cy="463.5" r="2.79" fill="url(#s5)"/><circle cx="323.9" cy="451.0" r="2.79" fill="url(#s3)"/><circle cx="312.4" cy="458.1" r="2.79" fill="url(#s5)"/><circle cx="361.4" cy="248.5" r="2.79" fill="url(#s0)"/><circle cx="325.6" cy="246.5" r="2.79" fill="url(#s0)"/><circle cx="331.8" cy="450.1" r="2.79" fill="url(#s1)"/><circle cx="343.9" cy="454.6" r="2.79" fill="url(#s0)"/><circle cx="258.3" cy="247.9" r="2.79" fill="url(#s0)"/><circle cx="348.2" cy="459.9" r="2.79" fill="url(#s0)"/><circle cx="266.2" cy="247.0" r="2.79" fill="url(#s0)"/><circle cx="193.3" cy="295.7" r="2.79" fill="url(#s5)"/><circle cx="316.0" cy="451.7" r="2.79" fill="url(#s3)"/><circle cx="336.6" cy="466.8" r="2.79" fill="url(#s5)"/><circle cx="385.7" cy="257.2" r="2.79" fill="url(#s2)"/><circle cx="344.5" cy="465.9" r="2.79" fill="url(#s0)"/><circle cx="317.7" cy="247.0" r="2.79" fill="url(#s0)"/><circle cx="215.8" cy="269.7" r="2.79" fill="url(#s5)"/><circle cx="308.7" cy="463.9" r="2.79" fill="url(#s5)"/><circle cx="328.8" cy="467.6" r="2.79" fill="url(#s5)"/><circle cx="439.6" cy="303.8" r="2.79" fill="url(#s5)"/><circle cx="339.7" cy="448.8" r="2.79" fill="url(#s0)"/><circle cx="304.5" cy="458.3" r="2.79" fill="url(#s1)"/><circle cx="352.4" cy="464.8" r="2.79" fill="url(#s0)"/><circle cx="320.9" cy="468.2" r="2.79" fill="url(#s5)"/><circle cx="373.6" cy="252.2" r="2.79" fill="url(#s1)"/><circle cx="309.9" cy="247.4" r="2.79" fill="url(#s0)"/><circle cx="308.2" cy="452.0" r="2.79" fill="url(#s1)"/><circle cx="356.1" cy="458.4" r="2.79" fill="url(#s0)"/><circle cx="351.9" cy="453.0" r="2.79" fill="url(#s0)"/><circle cx="189.5" cy="301.0" r="2.79" fill="url(#s5)"/><circle cx="353.6" cy="248.2" r="2.79" fill="url(#s0)"/><circle cx="327.6" cy="443.8" r="2.79" fill="url(#s0)"/><circle cx="319.7" cy="444.6" r="2.79" fill="url(#s1)"/><circle cx="443.9" cy="308.4" r="2.79" fill="url(#s5)"/><circle cx="313.0" cy="468.7" r="2.80" fill="url(#s5)"/><circle cx="302.0" cy="247.8" r="2.80" fill="url(#s0)"/><circle cx="300.9" cy="464.1" r="2.80" fill="url(#s2)"/><circle cx="360.4" cy="463.4" r="2.80" fill="url(#s0)"/><circle cx="238.8" cy="254.4" r="2.80" fill="url(#s0)"/><circle cx="406.4" cy="271.3" r="2.80" fill="url(#s5)"/><circle cx="347.7" cy="447.1" r="2.80" fill="url(#s0)"/><circle cx="335.5" cy="442.6" r="2.80" fill="url(#s0)"/><circle cx="311.8" cy="445.1" r="2.80" fill="url(#s0)"/><circle cx="294.1" cy="248.1" r="2.80" fill="url(#s0)"/><circle cx="296.6" cy="458.3" r="2.80" fill="url(#s0)"/><circle cx="305.1" cy="469.1" r="2.80" fill="url(#s5)"/><circle cx="300.3" cy="452.0" r="2.80" fill="url(#s0)"/><circle cx="227.2" cy="261.1" r="2.80" fill="url(#s1)"/><circle cx="348.9" cy="470.2" r="2.80" fill="url(#s1)"/><circle cx="448.3" cy="313.2" r="2.80" fill="url(#s2)"/><circle cx="345.7" cy="248.2" r="2.80" fill="url(#s0)"/><circle cx="356.8" cy="469.2" r="2.80" fill="url(#s0)"/><circle cx="341.0" cy="470.9" r="2.80" fill="url(#s5)"/><circle cx="185.7" cy="306.3" r="2.80" fill="url(#s5)"/><circle cx="211.9" cy="274.0" r="2.80" fill="url(#s5)"/><circle cx="333.1" cy="471.6" r="2.80" fill="url(#s5)"/><circle cx="286.2" cy="248.4" r="2.80" fill="url(#s0)"/><circle cx="292.9" cy="464.2" r="2.80" fill="url(#s0)"/><circle cx="364.1" cy="456.4" r="2.80" fill="url(#s0)"/><circle cx="364.7" cy="468.0" r="2.80" fill="url(#s0)"/><circle cx="337.9" cy="248.5" r="2.80" fill="url(#s0)"/><circle cx="390.1" cy="260.4" r="2.80" fill="url(#s3)"/><circle cx="303.9" cy="445.3" r="2.80" fill="url(#s0)"/><circle cx="359.9" cy="450.9" r="2.80" fill="url(#s0)"/><circle cx="452.7" cy="317.9" r="2.80" fill="url(#s0)"/><circle cx="343.5" cy="440.9" r="2.80" fill="url(#s0)"/><circle cx="297.2" cy="469.3" r="2.80" fill="url(#s3)"/><circle cx="368.4" cy="461.6" r="2.80" fill="url(#s0)"/><circle cx="325.2" cy="472.1" r="2.80" fill="url(#s5)"/><circle cx="246.6" cy="252.3" r="2.80" fill="url(#s0)"/><circle cx="365.9" cy="251.1" r="2.80" fill="url(#s0)"/><circle cx="278.2" cy="248.7" r="2.80" fill="url(#s0)"/><circle cx="323.4" cy="437.0" r="2.80" fill="url(#s0)"/><circle cx="330.0" cy="248.9" r="2.80" fill="url(#s0)"/><circle cx="181.9" cy="311.7" r="2.80" fill="url(#s5)"/><circle cx="410.9" cy="275.1" r="2.80" fill="url(#s5)"/><circle cx="315.5" cy="437.7" r="2.80" fill="url(#s0)"/><circle cx="317.3" cy="472.7" r="2.80" fill="url(#s5)"/><circle cx="355.7" cy="445.0" r="2.80" fill="url(#s0)"/><circle cx="331.4" cy="435.9" r="2.80" fill="url(#s0)"/><circle cx="270.3" cy="249.2" r="2.80" fill="url(#s0)"/><circle cx="322.1" cy="249.4" r="2.80" fill="url(#s0)"/><circle cx="254.5" cy="250.8" r="2.80" fill="url(#s0)"/><circle cx="288.7" cy="458.1" r="2.80" fill="url(#s0)"/><circle cx="378.1" cy="255.0" r="2.80" fill="url(#s1)"/><circle cx="292.4" cy="451.7" r="2.80" fill="url(#s0)"/><circle cx="262.4" cy="249.8" r="2.80" fill="url(#s0)"/><circle cx="309.4" cy="473.2" r="2.80" fill="url(#s5)"/><circle cx="289.3" cy="469.5" r="2.80" fill="url(#s0)"/><circle cx="314.2" cy="249.8" r="2.80" fill="url(#s0)"/><circle cx="178.1" cy="317.2" r="2.80" fill="url(#s5)"/><circle cx="285.0" cy="463.9" r="2.80" fill="url(#s0)"/><circle cx="307.6" cy="438.0" r="2.80" fill="url(#s0)"/><circle cx="361.2" cy="473.2" r="2.81" fill="url(#s0)"/><circle cx="296.0" cy="445.0" r="2.81" fill="url(#s0)"/><circle cx="358.0" cy="250.6" r="2.81" fill="url(#s0)"/><circle cx="208.0" cy="278.5" r="2.81" fill="url(#s5)"/><circle cx="339.3" cy="434.4" r="2.81" fill="url(#s0)"/><circle cx="306.2" cy="250.2" r="2.81" fill="url(#s0)"/><circle cx="353.3" cy="473.9" r="2.81" fill="url(#s1)"/><circle cx="301.4" cy="473.6" r="2.81" fill="url(#s5)"/><circle cx="351.5" cy="438.8" r="2.81" fill="url(#s0)"/><circle cx="234.9" cy="257.8" r="2.81" fill="url(#s1)"/><circle cx="223.3" cy="264.9" r="2.81" fill="url(#s2)"/><circle cx="372.2" cy="454.0" r="2.81" fill="url(#s0)"/><circle cx="345.4" cy="474.4" r="2.81" fill="url(#s5)"/><circle cx="174.3" cy="322.7" r="2.81" fill="url(#s5)"/><circle cx="298.3" cy="250.6" r="2.81" fill="url(#s0)"/><circle cx="415.4" cy="279.0" r="2.81" fill="url(#s5)"/><circle cx="394.7" cy="263.6" r="2.81" fill="url(#s3)"/><circle cx="368.0" cy="448.4" r="2.81" fill="url(#s0)"/><circle cx="293.5" cy="474.0" r="2.81" fill="url(#s5)"/><circle cx="350.2" cy="250.5" r="2.81" fill="url(#s0)"/><circle cx="281.3" cy="469.3" r="2.81" fill="url(#s0)"/><circle cx="337.4" cy="474.9" r="2.81" fill="url(#s5)"/><circle cx="299.7" cy="437.9" r="2.81" fill="url(#s0)"/><circle cx="319.2" cy="429.8" r="2.81" fill="url(#s0)"/><circle cx="290.4" cy="250.8" r="2.81" fill="url(#s0)"/><circle cx="327.2" cy="428.9" r="2.81" fill="url(#s0)"/><circle cx="280.7" cy="457.4" r="2.81" fill="url(#s0)"/><circle cx="170.5" cy="328.3" r="2.81" fill="url(#s5)"/><circle cx="284.4" cy="451.1" r="2.81" fill="url(#s0)"/><circle cx="363.8" cy="442.5" r="2.81" fill="url(#s0)"/><circle cx="370.4" cy="253.7" r="2.81" fill="url(#s0)"/><circle cx="342.3" cy="250.8" r="2.81" fill="url(#s0)"/><circle cx="347.3" cy="432.3" r="2.81" fill="url(#s0)"/><circle cx="329.5" cy="475.4" r="2.81" fill="url(#s5)"/><circle cx="311.3" cy="430.3" r="2.81" fill="url(#s0)"/><circle cx="285.6" cy="474.2" r="2.81" fill="url(#s1)"/><circle cx="277.0" cy="463.4" r="2.81" fill="url(#s0)"/><circle cx="282.4" cy="251.1" r="2.81" fill="url(#s0)"/><circle cx="242.7" cy="255.4" r="2.81" fill="url(#s0)"/><circle cx="204.2" cy="283.0" r="2.81" fill="url(#s5)"/><circle cx="382.6" cy="257.9" r="2.81" fill="url(#s1)"/><circle cx="334.3" cy="251.2" r="2.81" fill="url(#s0)"/><circle cx="288.1" cy="444.4" r="2.81" fill="url(#s0)"/><circle cx="335.2" cy="427.5" r="2.81" fill="url(#s0)"/><circle cx="166.7" cy="333.9" r="2.81" fill="url(#s4)"/><circle cx="321.6" cy="475.9" r="2.81" fill="url(#s5)"/><circle cx="419.8" cy="282.9" r="2.81" fill="url(#s5)"/><circle cx="326.4" cy="251.8" r="2.81" fill="url(#s0)"/><circle cx="274.5" cy="251.4" r="2.81" fill="url(#s0)"/><circle cx="359.6" cy="436.3" r="2.81" fill="url(#s0)"/><circle cx="318.5" cy="252.3" r="2.81" fill="url(#s0)"/><circle cx="250.6" cy="253.7" r="2.81" fill="url(#s0)"/><circle cx="313.7" cy="476.4" r="2.81" fill="url(#s5)"/><circle cx="219.4" cy="268.8" r="2.81" fill="url(#s3)"/><circle cx="273.3" cy="468.9" r="2.81" fill="url(#s0)"/><circle cx="266.5" cy="251.9" r="2.81" fill="url(#s0)"/><circle cx="303.4" cy="430.3" r="2.81" fill="url(#s0)"/><circle cx="162.9" cy="339.6" r="2.81" fill="url(#s1)"/><circle cx="277.6" cy="474.3" r="2.82" fill="url(#s0)"/><circle cx="399.2" cy="266.9" r="2.82" fill="url(#s4)"/><circle cx="258.5" cy="252.6" r="2.82" fill="url(#s0)"/><circle cx="362.5" cy="253.0" r="2.82" fill="url(#s0)"/><circle cx="291.7" cy="437.3" r="2.82" fill="url(#s0)"/><circle cx="310.5" cy="252.7" r="2.82" fill="url(#s0)"/><circle cx="231.0" cy="261.2" r="2.82" fill="url(#s1)"/><circle cx="305.7" cy="476.9" r="2.82" fill="url(#s5)"/><circle cx="357.7" cy="477.1" r="2.82" fill="url(#s0)"/><circle cx="343.2" cy="425.6" r="2.82" fill="url(#s0)"/><circle cx="159.1" cy="345.3" r="2.82" fill="url(#s0)"/><circle cx="302.6" cy="253.1" r="2.82" fill="url(#s0)"/><circle cx="297.8" cy="477.5" r="2.82" fill="url(#s5)"/><circle cx="200.3" cy="287.7" r="2.82" fill="url(#s5)"/><circle cx="424.4" cy="286.9" r="2.82" fill="url(#s5)"/><circle cx="376.2" cy="445.3" r="2.82" fill="url(#s0)"/><circle cx="355.4" cy="429.8" r="2.82" fill="url(#s0)"/><circle cx="323.0" cy="421.5" r="2.82" fill="url(#s0)"/><circle cx="272.7" cy="456.4" r="2.82" fill="url(#s0)"/><circle cx="354.6" cy="252.9" r="2.82" fill="url(#s0)"/><circle cx="315.0" cy="422.2" r="2.82" fill="url(#s0)"/><circle cx="289.8" cy="478.0" r="2.82" fill="url(#s5)"/><circle cx="276.4" cy="450.0" r="2.82" fill="url(#s0)"/><circle cx="294.6" cy="253.4" r="2.82" fill="url(#s0)"/><circle cx="349.8" cy="477.4" r="2.82" fill="url(#s3)"/><circle cx="269.0" cy="462.4" r="2.82" fill="url(#s0)"/><circle cx="269.6" cy="474.1" r="2.82" fill="url(#s0)"/><circle cx="331.0" cy="420.3" r="2.82" fill="url(#s0)"/><circle cx="374.9" cy="256.3" r="2.82" fill="url(#s0)"/><circle cx="387.1" cy="260.8" r="2.82" fill="url(#s1)"/><circle cx="295.4" cy="429.9" r="2.82" fill="url(#s0)"/><circle cx="372.0" cy="439.3" r="2.82" fill="url(#s0)"/><circle cx="281.8" cy="478.5" r="2.82" fill="url(#s2)"/><circle cx="280.1" cy="443.3" r="2.82" fill="url(#s0)"/><circle cx="346.7" cy="253.2" r="2.82" fill="url(#s0)"/><circle cx="286.6" cy="253.6" r="2.82" fill="url(#s0)"/><circle cx="307.1" cy="422.5" r="2.82" fill="url(#s0)"/><circle cx="341.9" cy="477.6" r="2.82" fill="url(#s5)"/><circle cx="238.8" cy="258.6" r="2.82" fill="url(#s0)"/><circle cx="265.3" cy="468.2" r="2.82" fill="url(#s0)"/><circle cx="403.7" cy="270.2" r="2.82" fill="url(#s5)"/><circle cx="338.8" cy="253.6" r="2.82" fill="url(#s0)"/><circle cx="215.4" cy="272.8" r="2.82" fill="url(#s4)"/><circle cx="428.9" cy="290.9" r="2.82" fill="url(#s5)"/><circle cx="196.4" cy="292.4" r="2.82" fill="url(#s5)"/><circle cx="330.8" cy="254.2" r="2.82" fill="url(#s0)"/><circle cx="273.8" cy="478.8" r="2.82" fill="url(#s0)"/><circle cx="278.6" cy="253.9" r="2.82" fill="url(#s0)"/><circle cx="351.3" cy="423.1" r="2.82" fill="url(#s0)"/><circle cx="339.0" cy="418.5" r="2.82" fill="url(#s0)"/><circle cx="367.8" cy="433.1" r="2.82" fill="url(#s0)"/><circle cx="283.7" cy="436.2" r="2.82" fill="url(#s0)"/><circle cx="322.8" cy="254.8" r="2.82" fill="url(#s0)"/><circle cx="334.0" cy="477.9" r="2.83" fill="url(#s5)"/><circle cx="270.6" cy="254.2" r="2.83" fill="url(#s0)"/><circle cx="314.9" cy="255.3" r="2.83" fill="url(#s0)"/><circle cx="227.0" cy="264.8" r="2.83" fill="url(#s1)"/><circle cx="367.0" cy="255.5" r="2.83" fill="url(#s0)"/><circle cx="246.7" cy="256.7" r="2.83" fill="url(#s0)"/><circle cx="261.5" cy="473.6" r="2.83" fill="url(#s0)"/><circle cx="299.1" cy="422.2" r="2.83" fill="url(#s0)"/><circle cx="262.6" cy="254.7" r="2.83" fill="url(#s0)"/><circle cx="306.9" cy="255.7" r="2.83" fill="url(#s0)"/><circle cx="254.7" cy="255.5" r="2.83" fill="url(#s0)"/><circle cx="265.8" cy="478.9" r="2.83" fill="url(#s0)"/><circle cx="326.0" cy="478.3" r="2.83" fill="url(#s5)"/><circle cx="433.4" cy="295.1" r="2.83" fill="url(#s5)"/><circle cx="318.8" cy="413.8" r="2.83" fill="url(#s0)"/><circle cx="363.6" cy="426.7" r="2.83" fill="url(#s0)"/><circle cx="192.4" cy="297.3" r="2.83" fill="url(#s5)"/><circle cx="287.4" cy="428.9" r="2.83" fill="url(#s0)"/><circle cx="326.8" cy="412.8" r="2.83" fill="url(#s0)"/><circle cx="298.9" cy="256.0" r="2.83" fill="url(#s0)"/><circle cx="391.7" cy="263.7" r="2.83" fill="url(#s1)"/><circle cx="318.0" cy="478.7" r="2.83" fill="url(#s5)"/><circle cx="359.1" cy="255.3" r="2.83" fill="url(#s0)"/><circle cx="408.3" cy="273.7" r="2.83" fill="url(#s5)"/><circle cx="379.4" cy="259.0" r="2.83" fill="url(#s0)"/><circle cx="264.6" cy="454.8" r="2.83" fill="url(#s0)"/><circle cx="310.8" cy="414.3" r="2.83" fill="url(#s0)"/><circle cx="260.9" cy="461.0" r="2.83" fill="url(#s0)"/><circle cx="347.1" cy="416.2" r="2.83" fill="url(#s0)"/><circle cx="268.3" cy="448.4" r="2.83" fill="url(#s0)"/><circle cx="211.5" cy="276.9" r="2.83" fill="url(#s5)"/><circle cx="310.0" cy="479.3" r="2.83" fill="url(#s5)"/><circle cx="290.9" cy="256.3" r="2.83" fill="url(#s0)"/><circle cx="351.2" cy="255.5" r="2.83" fill="url(#s0)"/><circle cx="302.0" cy="480.0" r="2.83" fill="url(#s5)"/><circle cx="334.8" cy="411.2" r="2.83" fill="url(#s0)"/><circle cx="272.0" cy="441.6" r="2.83" fill="url(#s0)"/><circle cx="257.1" cy="466.9" r="2.83" fill="url(#s0)"/><circle cx="294.0" cy="480.7" r="2.83" fill="url(#s5)"/><circle cx="437.9" cy="299.2" r="2.83" fill="url(#s5)"/><circle cx="286.0" cy="481.5" r="2.83" fill="url(#s5)"/><circle cx="343.2" cy="256.0" r="2.83" fill="url(#s0)"/><circle cx="234.8" cy="261.8" r="2.83" fill="url(#s0)"/><circle cx="278.0" cy="482.2" r="2.83" fill="url(#s1)"/><circle cx="359.5" cy="420.0" r="2.83" fill="url(#s0)"/><circle cx="282.9" cy="256.5" r="2.83" fill="url(#s0)"/><circle cx="188.5" cy="302.2" r="2.83" fill="url(#s5)"/><circle cx="335.2" cy="256.6" r="2.83" fill="url(#s0)"/><circle cx="302.8" cy="414.2" r="2.83" fill="url(#s0)"/><circle cx="291.1" cy="421.4" r="2.83" fill="url(#s0)"/><circle cx="380.4" cy="435.4" r="2.83" fill="url(#s0)"/><circle cx="354.4" cy="479.7" r="2.84" fill="url(#s1)"/><circle cx="327.2" cy="257.3" r="2.84" fill="url(#s0)"/><circle cx="270.0" cy="482.8" r="2.84" fill="url(#s0)"/><circle cx="223.1" cy="268.4" r="2.84" fill="url(#s2)"/><circle cx="275.7" cy="434.7" r="2.84" fill="url(#s0)"/><circle cx="319.2" cy="257.9" r="2.84" fill="url(#s0)"/><circle cx="274.8" cy="256.7" r="2.84" fill="url(#s0)"/><circle cx="371.6" cy="258.0" r="2.84" fill="url(#s0)"/><circle cx="412.9" cy="277.1" r="2.84" fill="url(#s5)"/><circle cx="311.2" cy="258.4" r="2.84" fill="url(#s0)"/><circle cx="442.4" cy="303.5" r="2.84" fill="url(#s5)"/><circle cx="242.7" cy="259.7" r="2.84" fill="url(#s0)"/><circle cx="376.2" cy="429.2" r="2.84" fill="url(#s0)"/><circle cx="342.9" cy="409.1" r="2.84" fill="url(#s0)"/><circle cx="396.3" cy="266.7" r="2.84" fill="url(#s2)"/><circle cx="266.8" cy="256.9" r="2.84" fill="url(#s0)"/><circle cx="207.5" cy="281.1" r="2.84" fill="url(#s5)"/><circle cx="303.2" cy="258.8" r="2.84" fill="url(#s0)"/><circle cx="346.5" cy="479.7" r="2.84" fill="url(#s5)"/><circle cx="184.6" cy="307.1" r="2.84" fill="url(#s5)"/><circle cx="322.6" cy="405.0" r="2.84" fill="url(#s0)"/><circle cx="250.7" cy="258.3" r="2.84" fill="url(#s0)"/><circle cx="258.8" cy="257.5" r="2.84" fill="url(#s0)"/><circle cx="279.3" cy="427.4" r="2.84" fill="url(#s0)"/><circle cx="314.6" cy="405.8" r="2.84" fill="url(#s0)"/><circle cx="355.3" cy="413.3" r="2.84" fill="url(#s0)"/><circle cx="384.0" cy="261.7" r="2.84" fill="url(#s0)"/><circle cx="363.7" cy="257.7" r="2.84" fill="url(#s0)"/><circle cx="294.8" cy="413.6" r="2.84" fill="url(#s0)"/><circle cx="295.2" cy="259.0" r="2.84" fill="url(#s0)"/><circle cx="330.6" cy="403.7" r="2.84" fill="url(#s0)"/><circle cx="447.0" cy="307.8" r="2.84" fill="url(#s4)"/><circle cx="372.0" cy="422.9" r="2.84" fill="url(#s0)"/><circle cx="306.5" cy="406.0" r="2.84" fill="url(#s0)"/><circle cx="355.7" cy="257.9" r="2.84" fill="url(#s0)"/><circle cx="338.5" cy="479.7" r="2.84" fill="url(#s5)"/><circle cx="287.1" cy="259.2" r="2.84" fill="url(#s0)"/><circle cx="417.5" cy="280.7" r="2.84" fill="url(#s5)"/><circle cx="180.7" cy="312.2" r="2.84" fill="url(#s5)"/><circle cx="256.4" cy="452.7" r="2.84" fill="url(#s0)"/><circle cx="347.7" cy="258.5" r="2.84" fill="url(#s0)"/><circle cx="230.9" cy="265.1" r="2.84" fill="url(#s1)"/><circle cx="252.6" cy="459.0" r="2.84" fill="url(#s0)"/><circle cx="283.0" cy="420.0" r="2.85" fill="url(#s0)"/><circle cx="339.7" cy="259.1" r="2.85" fill="url(#s0)"/><circle cx="260.1" cy="446.2" r="2.85" fill="url(#s0)"/><circle cx="219.1" cy="272.1" r="2.85" fill="url(#s2)"/><circle cx="331.6" cy="259.9" r="2.85" fill="url(#s0)"/><circle cx="323.6" cy="260.6" r="2.85" fill="url(#s0)"/><circle cx="338.7" cy="401.8" r="2.85" fill="url(#s0)"/><circle cx="451.5" cy="312.1" r="2.85" fill="url(#s0)"/><circle cx="351.1" cy="406.3" r="2.85" fill="url(#s0)"/><circle cx="279.1" cy="259.3" r="2.85" fill="url(#s0)"/><circle cx="203.5" cy="285.3" r="2.85" fill="url(#s5)"/><circle cx="367.8" cy="416.4" r="2.85" fill="url(#s0)"/><circle cx="330.5" cy="479.9" r="2.85" fill="url(#s5)"/><circle cx="263.8" cy="439.5" r="2.85" fill="url(#s0)"/><circle cx="315.6" cy="261.2" r="2.85" fill="url(#s0)"/><circle cx="376.2" cy="260.6" r="2.85" fill="url(#s0)"/><circle cx="400.9" cy="269.8" r="2.85" fill="url(#s3)"/><circle cx="298.5" cy="405.6" r="2.85" fill="url(#s0)"/><circle cx="307.5" cy="261.6" r="2.85" fill="url(#s0)"/><circle cx="176.8" cy="317.3" r="2.85" fill="url(#s5)"/><circle cx="271.0" cy="259.5" r="2.85" fill="url(#s0)"/><circle cx="322.5" cy="480.2" r="2.85" fill="url(#s5)"/><circle cx="274.2" cy="485.4" r="2.85" fill="url(#s0)"/><circle cx="238.8" cy="262.8" r="2.85" fill="url(#s0)"/><circle cx="267.5" cy="432.5" r="2.85" fill="url(#s0)"/><circle cx="388.6" cy="264.4" r="2.85" fill="url(#s1)"/><circle cx="318.3" cy="397.1" r="2.85" fill="url(#s0)"/><circle cx="286.7" cy="412.4" r="2.85" fill="url(#s0)"/><circle cx="299.5" cy="261.9" r="2.85" fill="url(#s0)"/><circle cx="282.2" cy="484.4" r="2.85" fill="url(#s2)"/><circle cx="326.4" cy="396.0" r="2.85" fill="url(#s0)"/><circle cx="422.1" cy="284.3" r="2.85" fill="url(#s5)"/><circle cx="314.4" cy="480.8" r="2.85" fill="url(#s5)"/><circle cx="262.9" cy="259.7" r="2.85" fill="url(#s0)"/><circle cx="290.3" cy="483.3" r="2.85" fill="url(#s5)"/><circle cx="368.3" cy="260.2" r="2.85" fill="url(#s0)"/><circle cx="363.6" cy="409.7" r="2.85" fill="url(#s0)"/><circle cx="310.3" cy="397.6" r="2.85" fill="url(#s0)"/><circle cx="306.4" cy="481.5" r="2.85" fill="url(#s5)"/><circle cx="246.8" cy="261.2" r="2.85" fill="url(#s0)"/><circle cx="298.3" cy="482.3" r="2.85" fill="url(#s5)"/><circle cx="254.8" cy="260.3" r="2.85" fill="url(#s0)"/><circle cx="291.4" cy="262.1" r="2.85" fill="url(#s0)"/><circle cx="271.2" cy="425.4" r="2.85" fill="url(#s0)"/><circle cx="346.9" cy="399.2" r="2.85" fill="url(#s0)"/><circle cx="172.8" cy="322.5" r="2.85" fill="url(#s5)"/><circle cx="360.2" cy="260.4" r="2.85" fill="url(#s0)"/><circle cx="199.5" cy="289.7" r="2.85" fill="url(#s5)"/><circle cx="334.5" cy="394.4" r="2.86" fill="url(#s0)"/><circle cx="215.1" cy="275.8" r="2.86" fill="url(#s3)"/><circle cx="384.7" cy="424.7" r="2.86" fill="url(#s0)"/><circle cx="352.2" cy="260.9" r="2.86" fill="url(#s0)"/><circle cx="226.8" cy="268.5" r="2.86" fill="url(#s1)"/><circle cx="344.1" cy="261.6" r="2.86" fill="url(#s0)"/><circle cx="336.1" cy="262.5" r="2.86" fill="url(#s0)"/><circle cx="405.6" cy="272.9" r="2.86" fill="url(#s3)"/><circle cx="283.3" cy="262.2" r="2.86" fill="url(#s0)"/><circle cx="328.0" cy="263.3" r="2.86" fill="url(#s0)"/><circle cx="302.2" cy="397.4" r="2.86" fill="url(#s0)"/><circle cx="290.4" cy="404.6" r="2.86" fill="url(#s0)"/><circle cx="319.9" cy="264.0" r="2.86" fill="url(#s0)"/><circle cx="274.9" cy="418.1" r="2.86" fill="url(#s0)"/><circle cx="359.4" cy="402.9" r="2.86" fill="url(#s0)"/><circle cx="380.8" cy="263.1" r="2.86" fill="url(#s0)"/><circle cx="311.9" cy="264.6" r="2.86" fill="url(#s0)"/><circle cx="168.9" cy="327.8" r="2.86" fill="url(#s5)"/><circle cx="426.7" cy="287.9" r="2.86" fill="url(#s5)"/><circle cx="380.5" cy="418.4" r="2.86" fill="url(#s0)"/><circle cx="275.2" cy="262.2" r="2.86" fill="url(#s0)"/><circle cx="303.8" cy="265.0" r="2.86" fill="url(#s0)"/><circle cx="351.1" cy="481.1" r="2.86" fill="url(#s1)"/><circle cx="393.3" cy="267.2" r="2.86" fill="url(#s1)"/><circle cx="342.7" cy="392.1" r="2.86" fill="url(#s0)"/><circle cx="322.2" cy="388.2" r="2.86" fill="url(#s0)"/><circle cx="195.5" cy="294.1" r="2.86" fill="url(#s5)"/><circle cx="234.8" cy="265.9" r="2.86" fill="url(#s0)"/><circle cx="314.1" cy="389.0" r="2.86" fill="url(#s0)"/><circle cx="248.0" cy="449.9" r="2.86" fill="url(#s0)"/><circle cx="267.1" cy="262.3" r="2.86" fill="url(#s0)"/><circle cx="295.7" cy="265.2" r="2.86" fill="url(#s0)"/><circle cx="278.6" cy="410.6" r="2.86" fill="url(#s0)"/><circle cx="164.9" cy="333.1" r="2.86" fill="url(#s2)"/><circle cx="376.2" cy="412.0" r="2.86" fill="url(#s0)"/><circle cx="372.9" cy="262.6" r="2.86" fill="url(#s0)"/><circle cx="251.7" cy="443.4" r="2.86" fill="url(#s0)"/><circle cx="294.2" cy="396.7" r="2.86" fill="url(#s0)"/><circle cx="330.3" cy="386.8" r="2.86" fill="url(#s0)"/><circle cx="355.1" cy="396.1" r="2.86" fill="url(#s0)"/><circle cx="259.0" cy="262.6" r="2.86" fill="url(#s0)"/><circle cx="255.5" cy="436.6" r="2.87" fill="url(#s0)"/><circle cx="211.0" cy="279.6" r="2.87" fill="url(#s4)"/><circle cx="410.2" cy="276.0" r="2.87" fill="url(#s4)"/><circle cx="242.8" cy="264.2" r="2.87" fill="url(#s0)"/><circle cx="306.0" cy="389.1" r="2.87" fill="url(#s0)"/><circle cx="431.4" cy="291.7" r="2.87" fill="url(#s5)"/><circle cx="287.6" cy="265.2" r="2.87" fill="url(#s0)"/><circle cx="364.8" cy="262.8" r="2.87" fill="url(#s0)"/><circle cx="250.9" cy="263.1" r="2.87" fill="url(#s0)"/><circle cx="343.1" cy="480.8" r="2.87" fill="url(#s5)"/><circle cx="332.5" cy="266.1" r="2.87" fill="url(#s0)"/><circle cx="324.4" cy="266.9" r="2.87" fill="url(#s0)"/><circle cx="222.8" cy="271.9" r="2.87" fill="url(#s1)"/><circle cx="340.6" cy="265.1" r="2.87" fill="url(#s0)"/><circle cx="356.8" cy="263.4" r="2.87" fill="url(#s0)"/><circle cx="161.0" cy="338.4" r="2.87" fill="url(#s0)"/><circle cx="348.7" cy="264.2" r="2.87" fill="url(#s0)"/><circle cx="259.2" cy="429.7" r="2.87" fill="url(#s0)"/><circle cx="316.3" cy="267.6" r="2.87" fill="url(#s0)"/><circle cx="372.0" cy="405.5" r="2.87" fill="url(#s0)"/><circle cx="282.3" cy="403.0" r="2.87" fill="url(#s0)"/><circle cx="279.5" cy="265.2" r="2.87" fill="url(#s0)"/><circle cx="308.2" cy="268.1" r="2.87" fill="url(#s0)"/><circle cx="338.4" cy="384.8" r="2.87" fill="url(#s0)"/><circle cx="385.5" cy="265.7" r="2.87" fill="url(#s0)"/><circle cx="191.5" cy="298.6" r="2.87" fill="url(#s5)"/><circle cx="262.9" cy="422.6" r="2.87" fill="url(#s0)"/><circle cx="398.0" cy="270.0" r="2.87" fill="url(#s1)"/><circle cx="350.9" cy="389.1" r="2.87" fill="url(#s0)"/><circle cx="335.1" cy="480.8" r="2.87" fill="url(#s5)"/><circle cx="300.1" cy="268.4" r="2.87" fill="url(#s0)"/><circle cx="297.9" cy="388.7" r="2.87" fill="url(#s0)"/><circle cx="278.3" cy="486.7" r="2.87" fill="url(#s0)"/><circle cx="436.0" cy="295.4" r="2.87" fill="url(#s5)"/><circle cx="317.9" cy="380.3" r="2.87" fill="url(#s0)"/><circle cx="367.8" cy="398.9" r="2.87" fill="url(#s0)"/><circle cx="271.4" cy="265.1" r="2.87" fill="url(#s0)"/><circle cx="326.0" cy="379.2" r="2.87" fill="url(#s0)"/><circle cx="266.6" cy="415.5" r="2.87" fill="url(#s0)"/><circle cx="286.0" cy="395.3" r="2.87" fill="url(#s0)"/><circle cx="414.9" cy="279.2" r="2.87" fill="url(#s5)"/><circle cx="309.8" cy="380.7" r="2.87" fill="url(#s0)"/><circle cx="291.9" cy="268.5" r="2.87" fill="url(#s0)"/><circle cx="230.7" cy="269.0" r="2.87" fill="url(#s0)"/><circle cx="377.5" cy="265.1" r="2.87" fill="url(#s0)"/><circle cx="207.0" cy="283.5" r="2.87" fill="url(#s5)"/><circle cx="327.0" cy="480.9" r="2.87" fill="url(#s5)"/><circle cx="286.4" cy="485.3" r="2.87" fill="url(#s3)"/><circle cx="263.2" cy="265.2" r="2.88" fill="url(#s0)"/><circle cx="328.8" cy="269.9" r="2.88" fill="url(#s0)"/><circle cx="320.7" cy="270.7" r="2.88" fill="url(#s0)"/><circle cx="187.5" cy="303.1" r="2.88" fill="url(#s5)"/><circle cx="336.9" cy="268.9" r="2.88" fill="url(#s0)"/><circle cx="294.5" cy="484.0" r="2.88" fill="url(#s5)"/><circle cx="346.7" cy="382.1" r="2.88" fill="url(#s0)"/><circle cx="334.2" cy="377.4" r="2.88" fill="url(#s0)"/><circle cx="318.9" cy="481.3" r="2.88" fill="url(#s5)"/><circle cx="363.5" cy="392.2" r="2.88" fill="url(#s0)"/><circle cx="369.5" cy="265.2" r="2.88" fill="url(#s0)"/><circle cx="312.6" cy="271.3" r="2.88" fill="url(#s0)"/><circle cx="345.1" cy="267.8" r="2.88" fill="url(#s0)"/><circle cx="283.8" cy="268.4" r="2.88" fill="url(#s0)"/><circle cx="270.3" cy="408.2" r="2.88" fill="url(#s0)"/><circle cx="218.7" cy="275.3" r="2.88" fill="url(#s1)"/><circle cx="255.0" cy="265.4" r="2.88" fill="url(#s0)"/><circle cx="238.8" cy="267.1" r="2.88" fill="url(#s0)"/><circle cx="302.7" cy="482.9" r="2.88" fill="url(#s5)"/><circle cx="310.8" cy="482.0" r="2.88" fill="url(#s5)"/><circle cx="353.2" cy="266.8" r="2.88" fill="url(#s0)"/><circle cx="361.3" cy="265.8" r="2.88" fill="url(#s0)"/><circle cx="301.7" cy="380.6" r="2.88" fill="url(#s0)"/><circle cx="440.7" cy="299.3" r="2.88" fill="url(#s5)"/><circle cx="246.9" cy="266.0" r="2.88" fill="url(#s0)"/><circle cx="304.4" cy="271.7" r="2.88" fill="url(#s0)"/><circle cx="389.2" cy="413.1" r="2.88" fill="url(#s0)"/><circle cx="289.8" cy="387.6" r="2.88" fill="url(#s0)"/><circle cx="390.2" cy="268.3" r="2.88" fill="url(#s0)"/><circle cx="402.7" cy="272.9" r="2.88" fill="url(#s1)"/><circle cx="275.6" cy="268.3" r="2.88" fill="url(#s0)"/><circle cx="296.3" cy="271.9" r="2.88" fill="url(#s0)"/><circle cx="274.1" cy="400.8" r="2.88" fill="url(#s0)"/><circle cx="359.3" cy="385.5" r="2.88" fill="url(#s0)"/><circle cx="321.7" cy="371.5" r="2.88" fill="url(#s0)"/><circle cx="384.9" cy="406.8" r="2.88" fill="url(#s0)"/><circle cx="419.6" cy="282.5" r="2.88" fill="url(#s5)"/><circle cx="313.6" cy="372.3" r="2.88" fill="url(#s0)"/><circle cx="342.4" cy="375.1" r="2.88" fill="url(#s0)"/><circle cx="183.4" cy="307.8" r="2.88" fill="url(#s5)"/><circle cx="202.9" cy="287.5" r="2.88" fill="url(#s5)"/><circle cx="329.9" cy="370.1" r="2.88" fill="url(#s0)"/><circle cx="243.2" cy="439.8" r="2.88" fill="url(#s0)"/><circle cx="267.5" cy="268.1" r="2.89" fill="url(#s0)"/><circle cx="325.1" cy="273.9" r="2.89" fill="url(#s0)"/><circle cx="445.4" cy="303.2" r="2.89" fill="url(#s5)"/><circle cx="288.1" cy="271.9" r="2.89" fill="url(#s0)"/><circle cx="317.0" cy="274.7" r="2.89" fill="url(#s0)"/><circle cx="333.3" cy="272.9" r="2.89" fill="url(#s0)"/><circle cx="382.2" cy="267.6" r="2.89" fill="url(#s0)"/><circle cx="293.5" cy="379.8" r="2.89" fill="url(#s0)"/><circle cx="380.6" cy="400.5" r="2.89" fill="url(#s0)"/><circle cx="305.4" cy="372.4" r="2.89" fill="url(#s0)"/><circle cx="247.0" cy="433.0" r="2.89" fill="url(#s0)"/><circle cx="226.7" cy="272.2" r="2.89" fill="url(#s0)"/><circle cx="277.8" cy="393.3" r="2.89" fill="url(#s0)"/><circle cx="341.4" cy="271.8" r="2.89" fill="url(#s0)"/><circle cx="308.8" cy="275.2" r="2.89" fill="url(#s0)"/><circle cx="355.0" cy="378.8" r="2.89" fill="url(#s0)"/><circle cx="250.7" cy="426.2" r="2.89" fill="url(#s0)"/><circle cx="349.6" cy="270.5" r="2.89" fill="url(#s0)"/><circle cx="374.1" cy="267.7" r="2.89" fill="url(#s0)"/><circle cx="259.3" cy="268.1" r="2.89" fill="url(#s0)"/><circle cx="214.7" cy="278.9" r="2.89" fill="url(#s2)"/><circle cx="357.8" cy="269.4" r="2.89" fill="url(#s0)"/><circle cx="300.7" cy="275.5" r="2.89" fill="url(#s0)"/><circle cx="280.0" cy="271.6" r="2.89" fill="url(#s0)"/><circle cx="366.0" cy="268.4" r="2.89" fill="url(#s0)"/><circle cx="376.3" cy="394.1" r="2.89" fill="url(#s0)"/><circle cx="338.1" cy="368.0" r="2.89" fill="url(#s0)"/><circle cx="254.5" cy="419.2" r="2.89" fill="url(#s0)"/><circle cx="407.4" cy="275.8" r="2.89" fill="url(#s1)"/><circle cx="179.4" cy="312.5" r="2.89" fill="url(#s5)"/><circle cx="234.7" cy="270.2" r="2.89" fill="url(#s0)"/><circle cx="394.9" cy="271.0" r="2.89" fill="url(#s0)"/><circle cx="424.4" cy="285.8" r="2.89" fill="url(#s5)"/><circle cx="251.0" cy="268.3" r="2.89" fill="url(#s0)"/><circle cx="281.5" cy="385.8" r="2.89" fill="url(#s0)"/><circle cx="317.4" cy="363.8" r="2.89" fill="url(#s0)"/><circle cx="450.1" cy="307.1" r="2.89" fill="url(#s1)"/><circle cx="297.3" cy="371.9" r="2.89" fill="url(#s0)"/><circle cx="347.9" cy="481.3" r="2.89" fill="url(#s1)"/><circle cx="242.9" cy="268.9" r="2.89" fill="url(#s0)"/><circle cx="325.6" cy="362.7" r="2.89" fill="url(#s0)"/><circle cx="350.7" cy="372.0" r="2.89" fill="url(#s0)"/><circle cx="292.5" cy="275.5" r="2.89" fill="url(#s0)"/><circle cx="258.2" cy="412.2" r="2.89" fill="url(#s0)"/><circle cx="198.8" cy="291.5" r="2.89" fill="url(#s5)"/><circle cx="309.2" cy="364.3" r="2.89" fill="url(#s0)"/><circle cx="372.1" cy="387.7" r="2.89" fill="url(#s0)"/><circle cx="321.4" cy="278.2" r="2.89" fill="url(#s0)"/><circle cx="329.6" cy="277.2" r="2.89" fill="url(#s0)"/><circle cx="271.7" cy="271.4" r="2.89" fill="url(#s0)"/><circle cx="313.2" cy="278.9" r="2.89" fill="url(#s0)"/><circle cx="337.8" cy="276.0" r="2.89" fill="url(#s0)"/><circle cx="262.0" cy="405.1" r="2.90" fill="url(#s0)"/><circle cx="305.1" cy="279.3" r="2.90" fill="url(#s0)"/><circle cx="333.8" cy="361.0" r="2.90" fill="url(#s0)"/><circle cx="285.3" cy="378.3" r="2.90" fill="url(#s0)"/><circle cx="284.3" cy="275.3" r="2.90" fill="url(#s0)"/><circle cx="346.0" cy="274.7" r="2.90" fill="url(#s0)"/><circle cx="386.9" cy="270.2" r="2.90" fill="url(#s0)"/><circle cx="175.3" cy="317.3" r="2.90" fill="url(#s5)"/><circle cx="367.8" cy="381.3" r="2.90" fill="url(#s0)"/><circle cx="346.4" cy="365.3" r="2.90" fill="url(#s0)"/><circle cx="301.1" cy="364.1" r="2.90" fill="url(#s0)"/><circle cx="263.5" cy="271.1" r="2.90" fill="url(#s0)"/><circle cx="222.6" cy="275.5" r="2.90" fill="url(#s1)"/><circle cx="339.8" cy="480.9" r="2.90" fill="url(#s4)"/><circle cx="354.2" cy="273.3" r="2.90" fill="url(#s0)"/><circle cx="296.9" cy="279.4" r="2.90" fill="url(#s0)"/><circle cx="265.7" cy="397.9" r="2.90" fill="url(#s0)"/><circle cx="429.1" cy="289.2" r="2.90" fill="url(#s5)"/><circle cx="210.5" cy="282.4" r="2.90" fill="url(#s2)"/><circle cx="321.3" cy="355.4" r="2.90" fill="url(#s0)"/><circle cx="378.8" cy="270.2" r="2.90" fill="url(#s0)"/><circle cx="362.4" cy="272.0" r="2.90" fill="url(#s0)"/><circle cx="313.1" cy="356.1" r="2.90" fill="url(#s0)"/><circle cx="412.2" cy="278.7" r="2.90" fill="url(#s1)"/><circle cx="289.1" cy="370.8" r="2.90" fill="url(#s0)"/><circle cx="363.4" cy="374.8" r="2.90" fill="url(#s0)"/><circle cx="317.7" cy="282.7" r="2.90" fill="url(#s0)"/><circle cx="282.5" cy="486.7" r="2.90" fill="url(#s0)"/><circle cx="325.9" cy="281.8" r="2.90" fill="url(#s0)"/><circle cx="370.6" cy="270.9" r="2.90" fill="url(#s0)"/><circle cx="276.1" cy="274.9" r="2.90" fill="url(#s0)"/><circle cx="399.6" cy="273.6" r="2.90" fill="url(#s0)"/><circle cx="255.3" cy="271.0" r="2.90" fill="url(#s0)"/><circle cx="329.5" cy="354.0" r="2.90" fill="url(#s0)"/><circle cx="334.1" cy="280.6" r="2.90" fill="url(#s0)"/><circle cx="309.5" cy="283.3" r="2.90" fill="url(#s0)"/><circle cx="194.7" cy="295.7" r="2.90" fill="url(#s5)"/><circle cx="342.1" cy="358.6" r="2.90" fill="url(#s0)"/><circle cx="269.5" cy="390.7" r="2.90" fill="url(#s0)"/><circle cx="288.7" cy="279.2" r="2.90" fill="url(#s0)"/><circle cx="304.9" cy="356.3" r="2.90" fill="url(#s0)"/><circle cx="230.6" cy="273.2" r="2.90" fill="url(#s0)"/><circle cx="331.7" cy="480.8" r="2.90" fill="url(#s5)"/><circle cx="171.2" cy="322.1" r="2.90" fill="url(#s5)"/><circle cx="342.3" cy="279.2" r="2.90" fill="url(#s0)"/><circle cx="359.1" cy="368.4" r="2.90" fill="url(#s0)"/><circle cx="247.0" cy="271.2" r="2.90" fill="url(#s0)"/><circle cx="301.3" cy="283.5" r="2.90" fill="url(#s0)"/><circle cx="290.7" cy="485.0" r="2.90" fill="url(#s2)"/><circle cx="292.9" cy="363.2" r="2.91" fill="url(#s0)"/><circle cx="393.8" cy="400.9" r="2.91" fill="url(#s0)"/><circle cx="238.8" cy="271.8" r="2.91" fill="url(#s0)"/><circle cx="273.2" cy="383.5" r="2.91" fill="url(#s0)"/><circle cx="267.8" cy="274.5" r="2.91" fill="url(#s0)"/><circle cx="350.5" cy="277.7" r="2.91" fill="url(#s0)"/><circle cx="337.7" cy="351.9" r="2.91" fill="url(#s0)"/><circle cx="316.9" cy="348.1" r="2.91" fill="url(#s0)"/><circle cx="323.5" cy="481.0" r="2.91" fill="url(#s5)"/><circle cx="322.1" cy="286.6" r="2.91" fill="url(#s0)"/><circle cx="325.1" cy="347.0" r="2.91" fill="url(#s0)"/><circle cx="389.4" cy="394.8" r="2.91" fill="url(#s0)"/><circle cx="313.9" cy="287.4" r="2.91" fill="url(#s0)"/><circle cx="298.9" cy="483.6" r="2.91" fill="url(#s5)"/><circle cx="280.4" cy="278.9" r="2.91" fill="url(#s0)"/><circle cx="354.8" cy="362.0" r="2.91" fill="url(#s0)"/><circle cx="330.3" cy="285.5" r="2.91" fill="url(#s0)"/><circle cx="433.9" cy="292.6" r="2.91" fill="url(#s5)"/><circle cx="293.0" cy="283.4" r="2.91" fill="url(#s0)"/><circle cx="391.7" cy="272.7" r="2.91" fill="url(#s0)"/><circle cx="308.7" cy="348.5" r="2.91" fill="url(#s0)"/><circle cx="315.3" cy="481.6" r="2.91" fill="url(#s5)"/><circle cx="277.0" cy="376.2" r="2.91" fill="url(#s0)"/><circle cx="358.8" cy="276.1" r="2.91" fill="url(#s0)"/><circle cx="307.1" cy="482.4" r="2.91" fill="url(#s5)"/><circle cx="296.7" cy="355.8" r="2.91" fill="url(#s0)"/><circle cx="305.7" cy="287.8" r="2.91" fill="url(#s0)"/><circle cx="167.1" cy="327.0" r="2.91" fill="url(#s2)"/><circle cx="385.1" cy="388.6" r="2.91" fill="url(#s0)"/><circle cx="338.6" cy="284.1" r="2.91" fill="url(#s0)"/><circle cx="417.0" cy="281.7" r="2.91" fill="url(#s2)"/><circle cx="218.4" cy="278.8" r="2.91" fill="url(#s1)"/><circle cx="206.4" cy="286.1" r="2.91" fill="url(#s3)"/><circle cx="238.3" cy="428.6" r="2.91" fill="url(#s0)"/><circle cx="333.4" cy="345.3" r="2.91" fill="url(#s0)"/><circle cx="259.5" cy="274.1" r="2.91" fill="url(#s0)"/><circle cx="190.5" cy="299.8" r="2.91" fill="url(#s5)"/><circle cx="350.4" cy="355.6" r="2.91" fill="url(#s0)"/><circle cx="367.1" cy="274.6" r="2.91" fill="url(#s0)"/><circle cx="383.5" cy="272.7" r="2.91" fill="url(#s0)"/><circle cx="242.1" cy="421.9" r="2.91" fill="url(#s0)"/><circle cx="280.8" cy="369.0" r="2.91" fill="url(#s0)"/><circle cx="380.8" cy="382.5" r="2.91" fill="url(#s0)"/><circle cx="375.3" cy="273.4" r="2.91" fill="url(#s0)"/><circle cx="404.4" cy="276.4" r="2.91" fill="url(#s0)"/><circle cx="318.3" cy="291.7" r="2.91" fill="url(#s0)"/><circle cx="297.5" cy="287.9" r="2.91" fill="url(#s0)"/><circle cx="320.7" cy="340.2" r="2.91" fill="url(#s0)"/><circle cx="346.8" cy="282.5" r="2.91" fill="url(#s0)"/><circle cx="284.8" cy="283.1" r="2.91" fill="url(#s0)"/><circle cx="326.6" cy="290.7" r="2.91" fill="url(#s0)"/><circle cx="272.2" cy="278.3" r="2.91" fill="url(#s0)"/><circle cx="300.5" cy="348.3" r="2.91" fill="url(#s0)"/><circle cx="312.5" cy="340.9" r="2.91" fill="url(#s0)"/><circle cx="245.9" cy="415.1" r="2.91" fill="url(#s0)"/><circle cx="310.1" cy="292.3" r="2.91" fill="url(#s0)"/><circle cx="346.1" cy="349.3" r="2.91" fill="url(#s0)"/><circle cx="329.0" cy="338.8" r="2.91" fill="url(#s0)"/><circle cx="376.4" cy="376.3" r="2.91" fill="url(#s0)"/><circle cx="334.8" cy="289.4" r="2.92" fill="url(#s0)"/><circle cx="284.6" cy="361.8" r="2.92" fill="url(#s0)"/><circle cx="251.2" cy="273.9" r="2.92" fill="url(#s0)"/><circle cx="249.7" cy="408.2" r="2.92" fill="url(#s0)"/><circle cx="355.1" cy="280.7" r="2.92" fill="url(#s0)"/><circle cx="163.0" cy="332.0" r="2.92" fill="url(#s0)"/><circle cx="301.9" cy="292.5" r="2.92" fill="url(#s0)"/><circle cx="226.5" cy="276.3" r="2.92" fill="url(#s0)"/><circle cx="304.3" cy="341.0" r="2.92" fill="url(#s0)"/><circle cx="438.7" cy="296.0" r="2.92" fill="url(#s5)"/><circle cx="341.7" cy="343.0" r="2.92" fill="url(#s0)"/><circle cx="372.0" cy="370.2" r="2.92" fill="url(#s0)"/><circle cx="253.4" cy="401.3" r="2.92" fill="url(#s0)"/><circle cx="322.8" cy="296.2" r="2.92" fill="url(#s0)"/><circle cx="289.2" cy="287.6" r="2.92" fill="url(#s0)"/><circle cx="314.5" cy="297.0" r="2.92" fill="url(#s0)"/><circle cx="316.4" cy="333.4" r="2.92" fill="url(#s0)"/><circle cx="343.1" cy="287.7" r="2.92" fill="url(#s0)"/><circle cx="288.4" cy="354.6" r="2.92" fill="url(#s0)"/><circle cx="324.6" cy="332.4" r="2.92" fill="url(#s0)"/><circle cx="243.0" cy="274.1" r="2.92" fill="url(#s0)"/><circle cx="331.0" cy="294.9" r="2.92" fill="url(#s0)"/><circle cx="234.7" cy="274.8" r="2.92" fill="url(#s0)"/><circle cx="276.5" cy="282.5" r="2.92" fill="url(#s0)"/><circle cx="263.9" cy="277.7" r="2.92" fill="url(#s0)"/><circle cx="257.2" cy="394.3" r="2.92" fill="url(#s0)"/><circle cx="367.7" cy="364.1" r="2.92" fill="url(#s0)"/><circle cx="337.3" cy="336.8" r="2.92" fill="url(#s0)"/><circle cx="306.3" cy="297.4" r="2.92" fill="url(#s0)"/><circle cx="308.1" cy="333.9" r="2.92" fill="url(#s0)"/><circle cx="363.4" cy="278.9" r="2.92" fill="url(#s0)"/><circle cx="396.4" cy="275.3" r="2.92" fill="url(#s0)"/><circle cx="186.4" cy="304.1" r="2.92" fill="url(#s5)"/><circle cx="292.2" cy="347.5" r="2.92" fill="url(#s0)"/><circle cx="421.8" cy="284.7" r="2.92" fill="url(#s2)"/><circle cx="319.0" cy="301.9" r="2.92" fill="url(#s0)"/><circle cx="293.6" cy="292.4" r="2.92" fill="url(#s0)"/><circle cx="320.2" cy="326.1" r="2.92" fill="url(#s0)"/><circle cx="332.9" cy="330.8" r="2.92" fill="url(#s0)"/><circle cx="261.0" cy="387.4" r="2.92" fill="url(#s0)"/><circle cx="363.3" cy="358.0" r="2.92" fill="url(#s0)"/><circle cx="327.2" cy="300.8" r="2.92" fill="url(#s0)"/><circle cx="310.7" cy="302.5" r="2.92" fill="url(#s0)"/><circle cx="312.0" cy="326.8" r="2.92" fill="url(#s0)"/><circle cx="202.2" cy="289.8" r="2.92" fill="url(#s4)"/><circle cx="339.3" cy="293.3" r="2.92" fill="url(#s0)"/><circle cx="351.4" cy="285.8" r="2.92" fill="url(#s0)"/><circle cx="296.0" cy="340.6" r="2.92" fill="url(#s0)"/><circle cx="328.5" cy="324.8" r="2.92" fill="url(#s0)"/><circle cx="371.8" cy="277.3" r="2.92" fill="url(#s0)"/><circle cx="214.3" cy="282.1" r="2.92" fill="url(#s1)"/><circle cx="315.2" cy="307.8" r="2.92" fill="url(#s0)"/><circle cx="323.4" cy="306.9" r="2.92" fill="url(#s0)"/><circle cx="315.8" cy="320.0" r="2.92" fill="url(#s0)"/><circle cx="358.9" cy="352.0" r="2.92" fill="url(#s0)"/><circle cx="298.1" cy="297.4" r="2.92" fill="url(#s0)"/><circle cx="264.8" cy="380.4" r="2.92" fill="url(#s0)"/><circle cx="280.9" cy="287.0" r="2.92" fill="url(#s0)"/><circle cx="324.0" cy="319.0" r="2.92" fill="url(#s0)"/><circle cx="319.6" cy="313.3" r="2.92" fill="url(#s0)"/><circle cx="388.3" cy="275.3" r="2.92" fill="url(#s0)"/><circle cx="409.3" cy="279.1" r="2.92" fill="url(#s0)"/><circle cx="299.9" cy="333.7" r="2.92" fill="url(#s0)"/><circle cx="335.5" cy="299.2" r="2.92" fill="url(#s0)"/><circle cx="311.4" cy="314.0" r="2.92" fill="url(#s0)"/><circle cx="380.1" cy="276.0" r="2.92" fill="url(#s0)"/><circle cx="302.5" cy="302.7" r="2.92" fill="url(#s0)"/><circle cx="255.5" cy="277.2" r="2.92" fill="url(#s0)"/><circle cx="354.5" cy="346.0" r="2.92" fill="url(#s0)"/><circle cx="303.7" cy="327.0" r="2.92" fill="url(#s0)"/><circle cx="327.9" cy="312.1" r="2.92" fill="url(#s0)"/><circle cx="306.9" cy="308.3" r="2.92" fill="url(#s0)"/><circle cx="307.5" cy="320.4" r="2.92" fill="url(#s0)"/><circle cx="331.7" cy="305.5" r="2.92" fill="url(#s0)"/><circle cx="268.6" cy="373.5" r="2.92" fill="url(#s0)"/><circle cx="443.6" cy="299.5" r="2.92" fill="url(#s5)"/><circle cx="268.2" cy="281.7" r="2.93" fill="url(#s0)"/><circle cx="350.1" cy="340.1" r="2.93" fill="url(#s0)"/><circle cx="347.6" cy="291.4" r="2.93" fill="url(#s0)"/><circle cx="332.3" cy="317.5" r="2.93" fill="url(#s0)"/><circle cx="359.8" cy="283.8" r="2.93" fill="url(#s0)"/><circle cx="345.6" cy="334.3" r="2.93" fill="url(#s0)"/><circle cx="285.3" cy="291.8" r="2.93" fill="url(#s0)"/><circle cx="336.8" cy="323.0" r="2.93" fill="url(#s0)"/><circle cx="341.2" cy="328.6" r="2.93" fill="url(#s0)"/><circle cx="272.5" cy="366.5" r="2.93" fill="url(#s0)"/><circle cx="303.1" cy="314.2" r="2.93" fill="url(#s0)"/><circle cx="336.2" cy="310.4" r="2.93" fill="url(#s0)"/><circle cx="343.8" cy="297.3" r="2.93" fill="url(#s0)"/><circle cx="289.8" cy="297.0" r="2.93" fill="url(#s0)"/><circle cx="276.3" cy="359.7" r="2.93" fill="url(#s0)"/><circle cx="298.7" cy="308.2" r="2.93" fill="url(#s0)"/><circle cx="340.0" cy="303.7" r="2.93" fill="url(#s0)"/><circle cx="299.3" cy="320.3" r="2.93" fill="url(#s0)"/><circle cx="294.2" cy="302.5" r="2.93" fill="url(#s0)"/><circle cx="247.2" cy="276.9" r="2.93" fill="url(#s0)"/><circle cx="182.2" cy="308.4" r="2.93" fill="url(#s5)"/><circle cx="280.1" cy="352.9" r="2.93" fill="url(#s0)"/><circle cx="222.3" cy="279.4" r="2.93" fill="url(#s0)"/><circle cx="272.6" cy="286.2" r="2.93" fill="url(#s0)"/><circle cx="295.4" cy="326.5" r="2.93" fill="url(#s0)"/><circle cx="283.9" cy="346.1" r="2.93" fill="url(#s0)"/><circle cx="340.7" cy="315.4" r="2.93" fill="url(#s0)"/><circle cx="368.1" cy="281.8" r="2.93" fill="url(#s0)"/><circle cx="344.7" cy="480.4" r="2.93" fill="url(#s1)"/><circle cx="426.7" cy="287.7" r="2.93" fill="url(#s2)"/><circle cx="291.6" cy="332.9" r="2.93" fill="url(#s0)"/><circle cx="287.8" cy="339.5" r="2.93" fill="url(#s0)"/><circle cx="356.0" cy="289.2" r="2.93" fill="url(#s0)"/><circle cx="259.9" cy="281.0" r="2.93" fill="url(#s0)"/><circle cx="401.3" cy="277.9" r="2.93" fill="url(#s0)"/><circle cx="238.9" cy="277.0" r="2.93" fill="url(#s0)"/><circle cx="294.8" cy="313.8" r="2.93" fill="url(#s0)"/><circle cx="230.6" cy="277.8" r="2.93" fill="url(#s0)"/><circle cx="345.1" cy="320.6" r="2.93" fill="url(#s0)"/><circle cx="198.0" cy="293.5" r="2.93" fill="url(#s5)"/><circle cx="398.5" cy="388.3" r="2.93" fill="url(#s0)"/><circle cx="344.5" cy="308.3" r="2.93" fill="url(#s0)"/><circle cx="277.0" cy="291.0" r="2.93" fill="url(#s0)"/><circle cx="352.2" cy="295.1" r="2.93" fill="url(#s0)"/><circle cx="448.4" cy="303.0" r="2.93" fill="url(#s2)"/><circle cx="394.1" cy="382.4" r="2.93" fill="url(#s0)"/><circle cx="348.4" cy="301.5" r="2.93" fill="url(#s0)"/><circle cx="376.5" cy="280.0" r="2.93" fill="url(#s0)"/><circle cx="349.6" cy="325.8" r="2.93" fill="url(#s0)"/><circle cx="290.4" cy="307.7" r="2.93" fill="url(#s0)"/><circle cx="389.7" cy="376.6" r="2.93" fill="url(#s0)"/><circle cx="281.5" cy="296.2" r="2.93" fill="url(#s0)"/><circle cx="414.1" cy="281.8" r="2.93" fill="url(#s0)"/><circle cx="210.1" cy="285.5" r="2.93" fill="url(#s1)"/><circle cx="291.0" cy="319.6" r="2.94" fill="url(#s0)"/><circle cx="285.9" cy="301.8" r="2.94" fill="url(#s0)"/><circle cx="354.1" cy="331.2" r="2.94" fill="url(#s0)"/><circle cx="393.1" cy="277.8" r="2.94" fill="url(#s0)"/><circle cx="385.2" cy="370.7" r="2.94" fill="url(#s0)"/><circle cx="384.8" cy="278.6" r="2.94" fill="url(#s0)"/><circle cx="364.4" cy="287.0" r="2.94" fill="url(#s0)"/><circle cx="380.8" cy="364.9" r="2.94" fill="url(#s0)"/><circle cx="358.5" cy="336.6" r="2.94" fill="url(#s0)"/><circle cx="376.4" cy="359.1" r="2.94" fill="url(#s0)"/><circle cx="363.0" cy="342.2" r="2.94" fill="url(#s0)"/><circle cx="349.0" cy="312.9" r="2.94" fill="url(#s0)"/><circle cx="371.9" cy="353.4" r="2.94" fill="url(#s0)"/><circle cx="367.5" cy="347.8" r="2.94" fill="url(#s0)"/><circle cx="264.2" cy="285.2" r="2.94" fill="url(#s0)"/><circle cx="286.7" cy="485.4" r="2.94" fill="url(#s0)"/><circle cx="336.5" cy="480.0" r="2.94" fill="url(#s3)"/><circle cx="251.5" cy="280.3" r="2.94" fill="url(#s0)"/><circle cx="287.1" cy="325.6" r="2.94" fill="url(#s0)"/><circle cx="178.0" cy="312.7" r="2.94" fill="url(#s5)"/><circle cx="286.5" cy="313.0" r="2.94" fill="url(#s0)"/><circle cx="360.6" cy="292.7" r="2.94" fill="url(#s0)"/><circle cx="352.9" cy="305.7" r="2.94" fill="url(#s0)"/><circle cx="283.3" cy="331.6" r="2.94" fill="url(#s0)"/><circle cx="356.8" cy="298.9" r="2.94" fill="url(#s0)"/><circle cx="353.6" cy="317.7" r="2.94" fill="url(#s0)"/><circle cx="233.2" cy="416.8" r="2.94" fill="url(#s0)"/><circle cx="431.6" cy="290.8" r="2.94" fill="url(#s3)"/><circle cx="268.7" cy="289.9" r="2.94" fill="url(#s0)"/><circle cx="237.1" cy="410.1" r="2.94" fill="url(#s0)"/><circle cx="372.8" cy="284.7" r="2.94" fill="url(#s0)"/><circle cx="279.4" cy="337.8" r="2.94" fill="url(#s0)"/><circle cx="240.9" cy="403.5" r="2.94" fill="url(#s0)"/><circle cx="282.0" cy="306.7" r="2.94" fill="url(#s0)"/><circle cx="295.0" cy="483.6" r="2.94" fill="url(#s2)"/><circle cx="244.7" cy="396.8" r="2.94" fill="url(#s0)"/><circle cx="328.3" cy="480.0" r="2.94" fill="url(#s3)"/><circle cx="275.5" cy="344.1" r="2.94" fill="url(#s0)"/><circle cx="248.6" cy="390.1" r="2.94" fill="url(#s0)"/><circle cx="243.1" cy="279.9" r="2.94" fill="url(#s0)"/><circle cx="273.1" cy="295.1" r="2.94" fill="url(#s0)"/><circle cx="218.1" cy="282.6" r="2.94" fill="url(#s0)"/><circle cx="277.6" cy="300.7" r="2.94" fill="url(#s0)"/><circle cx="252.4" cy="383.4" r="2.94" fill="url(#s0)"/><circle cx="271.7" cy="350.5" r="2.94" fill="url(#s0)"/><circle cx="193.8" cy="297.4" r="2.94" fill="url(#s5)"/><circle cx="256.3" cy="376.7" r="2.94" fill="url(#s0)"/><circle cx="406.1" cy="280.5" r="2.94" fill="url(#s0)"/><circle cx="282.6" cy="318.5" r="2.94" fill="url(#s0)"/><circle cx="358.1" cy="322.6" r="2.94" fill="url(#s0)"/><circle cx="267.8" cy="357.0" r="2.94" fill="url(#s0)"/><circle cx="260.1" cy="370.1" r="2.94" fill="url(#s0)"/><circle cx="264.0" cy="363.5" r="2.94" fill="url(#s0)"/><circle cx="255.8" cy="284.3" r="2.94" fill="url(#s0)"/><circle cx="357.5" cy="310.1" r="2.94" fill="url(#s0)"/><circle cx="303.3" cy="482.1" r="2.94" fill="url(#s4)"/><circle cx="320.0" cy="480.3" r="2.95" fill="url(#s3)"/><circle cx="381.2" cy="282.8" r="2.95" fill="url(#s0)"/><circle cx="369.1" cy="290.2" r="2.95" fill="url(#s0)"/><circle cx="234.7" cy="280.0" r="2.95" fill="url(#s0)"/><circle cx="419.0" cy="284.6" r="2.95" fill="url(#s0)"/><circle cx="311.7" cy="481.0" r="2.95" fill="url(#s4)"/><circle cx="226.4" cy="280.8" r="2.95" fill="url(#s0)"/><circle cx="362.6" cy="327.6" r="2.95" fill="url(#s0)"/><circle cx="173.8" cy="317.2" r="2.95" fill="url(#s5)"/><circle cx="205.8" cy="288.9" r="2.95" fill="url(#s1)"/><circle cx="361.4" cy="302.9" r="2.95" fill="url(#s0)"/><circle cx="398.0" cy="280.4" r="2.95" fill="url(#s0)"/><circle cx="278.7" cy="324.1" r="2.95" fill="url(#s0)"/><circle cx="365.3" cy="296.2" r="2.95" fill="url(#s0)"/><circle cx="389.6" cy="281.2" r="2.95" fill="url(#s0)"/><circle cx="278.1" cy="311.7" r="2.95" fill="url(#s0)"/><circle cx="260.2" cy="288.8" r="2.95" fill="url(#s0)"/><circle cx="367.1" cy="332.7" r="2.95" fill="url(#s0)"/><circle cx="362.1" cy="314.5" r="2.95" fill="url(#s0)"/><circle cx="436.5" cy="293.9" r="2.95" fill="url(#s3)"/><circle cx="273.6" cy="305.3" r="2.95" fill="url(#s0)"/><circle cx="247.4" cy="283.4" r="2.95" fill="url(#s0)"/><circle cx="274.9" cy="329.8" r="2.95" fill="url(#s0)"/><circle cx="371.7" cy="337.8" r="2.95" fill="url(#s0)"/><circle cx="264.7" cy="293.8" r="2.95" fill="url(#s0)"/><circle cx="377.6" cy="287.7" r="2.95" fill="url(#s0)"/><circle cx="269.2" cy="299.3" r="2.95" fill="url(#s0)"/><circle cx="376.2" cy="343.0" r="2.95" fill="url(#s0)"/><circle cx="274.2" cy="316.8" r="2.95" fill="url(#s0)"/><circle cx="189.5" cy="301.2" r="2.95" fill="url(#s5)"/><circle cx="366.0" cy="306.8" r="2.95" fill="url(#s0)"/><circle cx="271.0" cy="335.6" r="2.95" fill="url(#s0)"/><circle cx="366.7" cy="319.0" r="2.95" fill="url(#s0)"/><circle cx="380.7" cy="348.3" r="2.95" fill="url(#s0)"/><circle cx="373.8" cy="293.4" r="2.96" fill="url(#s0)"/><circle cx="169.5" cy="321.6" r="2.96" fill="url(#s3)"/><circle cx="411.1" cy="283.1" r="2.96" fill="url(#s0)"/><circle cx="369.9" cy="299.8" r="2.96" fill="url(#s0)"/><circle cx="213.9" cy="285.7" r="2.96" fill="url(#s0)"/><circle cx="239.0" cy="283.0" r="2.96" fill="url(#s0)"/><circle cx="385.2" cy="353.7" r="2.96" fill="url(#s0)"/><circle cx="386.0" cy="285.5" r="2.96" fill="url(#s0)"/><circle cx="251.8" cy="287.6" r="2.96" fill="url(#s0)"/><circle cx="267.1" cy="341.5" r="2.96" fill="url(#s0)"/><circle cx="424.0" cy="287.5" r="2.96" fill="url(#s0)"/><circle cx="389.8" cy="359.1" r="2.96" fill="url(#s0)"/><circle cx="269.7" cy="310.0" r="2.96" fill="url(#s0)"/><circle cx="394.3" cy="364.5" r="2.96" fill="url(#s0)"/><circle cx="371.2" cy="323.6" r="2.96" fill="url(#s0)"/><circle cx="270.3" cy="322.1" r="2.96" fill="url(#s0)"/><circle cx="201.6" cy="292.4" r="2.96" fill="url(#s2)"/><circle cx="402.8" cy="283.0" r="2.96" fill="url(#s0)"/><circle cx="394.5" cy="283.9" r="2.96" fill="url(#s0)"/><circle cx="263.2" cy="347.6" r="2.96" fill="url(#s0)"/><circle cx="230.5" cy="283.0" r="2.96" fill="url(#s0)"/><circle cx="398.8" cy="370.0" r="2.96" fill="url(#s0)"/><circle cx="222.2" cy="283.9" r="2.96" fill="url(#s0)"/><circle cx="403.3" cy="375.5" r="2.96" fill="url(#s0)"/><circle cx="256.2" cy="292.4" r="2.96" fill="url(#s0)"/><circle cx="441.4" cy="297.1" r="2.96" fill="url(#s2)"/><circle cx="370.7" cy="310.9" r="2.96" fill="url(#s0)"/><circle cx="265.2" cy="303.6" r="2.96" fill="url(#s0)"/><circle cx="259.3" cy="353.7" r="2.96" fill="url(#s0)"/><circle cx="260.7" cy="297.7" r="2.96" fill="url(#s0)"/><circle cx="382.3" cy="290.7" r="2.96" fill="url(#s0)"/><circle cx="375.8" cy="328.3" r="2.96" fill="url(#s0)"/><circle cx="255.4" cy="359.9" r="2.96" fill="url(#s0)"/><circle cx="165.3" cy="326.2" r="2.96" fill="url(#s0)"/><circle cx="374.6" cy="303.5" r="2.96" fill="url(#s0)"/><circle cx="243.3" cy="286.6" r="2.96" fill="url(#s0)"/><circle cx="266.4" cy="327.4" r="2.96" fill="url(#s0)"/><circle cx="378.5" cy="296.7" r="2.96" fill="url(#s0)"/><circle cx="185.3" cy="305.2" r="2.96" fill="url(#s5)"/><circle cx="251.5" cy="366.1" r="2.97" fill="url(#s0)"/><circle cx="265.7" cy="314.8" r="2.97" fill="url(#s0)"/><circle cx="247.5" cy="372.4" r="2.97" fill="url(#s0)"/><circle cx="375.3" cy="315.1" r="2.97" fill="url(#s0)"/><circle cx="416.0" cy="285.8" r="2.97" fill="url(#s0)"/><circle cx="380.4" cy="333.0" r="2.97" fill="url(#s0)"/><circle cx="243.6" cy="378.7" r="2.97" fill="url(#s0)"/><circle cx="390.9" cy="288.3" r="2.97" fill="url(#s0)"/><circle cx="428.9" cy="290.3" r="2.97" fill="url(#s0)"/><circle cx="239.7" cy="385.1" r="2.97" fill="url(#s0)"/><circle cx="209.6" cy="289.0" r="2.97" fill="url(#s0)"/><circle cx="262.4" cy="332.9" r="2.97" fill="url(#s0)"/><circle cx="247.7" cy="291.0" r="2.97" fill="url(#s0)"/><circle cx="235.8" cy="391.5" r="2.97" fill="url(#s0)"/><circle cx="234.8" cy="286.0" r="2.97" fill="url(#s0)"/><circle cx="261.2" cy="308.0" r="2.97" fill="url(#s0)"/><circle cx="446.4" cy="300.3" r="2.97" fill="url(#s1)"/><circle cx="231.9" cy="398.0" r="2.97" fill="url(#s0)"/><circle cx="385.0" cy="337.9" r="2.97" fill="url(#s0)"/><circle cx="399.4" cy="286.5" r="2.97" fill="url(#s0)"/><circle cx="407.8" cy="285.6" r="2.97" fill="url(#s0)"/><circle cx="197.3" cy="295.9" r="2.97" fill="url(#s2)"/><circle cx="228.0" cy="404.4" r="2.97" fill="url(#s0)"/><circle cx="379.3" cy="307.2" r="2.97" fill="url(#s0)"/><circle cx="252.1" cy="296.0" r="2.97" fill="url(#s0)"/><circle cx="256.6" cy="301.7" r="2.97" fill="url(#s0)"/><circle cx="387.1" cy="293.7" r="2.97" fill="url(#s0)"/><circle cx="261.8" cy="319.7" r="2.97" fill="url(#s0)"/><circle cx="380.0" cy="319.3" r="2.97" fill="url(#s0)"/><circle cx="226.3" cy="286.0" r="2.97" fill="url(#s0)"/><circle cx="217.9" cy="286.9" r="2.97" fill="url(#s0)"/><circle cx="258.5" cy="338.5" r="2.97" fill="url(#s0)"/><circle cx="383.3" cy="300.1" r="2.97" fill="url(#s0)"/><circle cx="389.7" cy="342.7" r="2.97" fill="url(#s0)"/><circle cx="341.5" cy="478.5" r="2.98" fill="url(#s1)"/><circle cx="181.0" cy="309.1" r="2.98" fill="url(#s5)"/><circle cx="239.1" cy="289.8" r="2.98" fill="url(#s0)"/><circle cx="394.3" cy="347.7" r="2.98" fill="url(#s0)"/><circle cx="254.5" cy="344.1" r="2.98" fill="url(#s0)"/><circle cx="257.2" cy="312.5" r="2.98" fill="url(#s0)"/><circle cx="384.7" cy="323.6" r="2.98" fill="url(#s0)"/><circle cx="421.0" cy="288.5" r="2.98" fill="url(#s0)"/><circle cx="395.7" cy="291.2" r="2.98" fill="url(#s0)"/><circle cx="257.8" cy="324.7" r="2.98" fill="url(#s0)"/><circle cx="433.9" cy="293.2" r="2.98" fill="url(#s0)"/><circle cx="384.1" cy="311.0" r="2.98" fill="url(#s0)"/><circle cx="291.1" cy="483.0" r="2.98" fill="url(#s0)"/><circle cx="398.9" cy="352.7" r="2.98" fill="url(#s0)"/><circle cx="333.2" cy="478.1" r="2.98" fill="url(#s2)"/><circle cx="250.6" cy="349.9" r="2.98" fill="url(#s0)"/><circle cx="243.6" cy="294.4" r="2.98" fill="url(#s0)"/><circle cx="205.3" cy="292.2" r="2.98" fill="url(#s0)"/><circle cx="252.6" cy="305.8" r="2.98" fill="url(#s0)"/><circle cx="392.0" cy="296.8" r="2.98" fill="url(#s0)"/><circle cx="404.3" cy="289.2" r="2.98" fill="url(#s0)"/><circle cx="388.1" cy="303.5" r="2.98" fill="url(#s0)"/><circle cx="412.7" cy="288.2" r="2.98" fill="url(#s0)"/><circle cx="248.1" cy="299.8" r="2.98" fill="url(#s0)"/><circle cx="192.9" cy="299.5" r="2.98" fill="url(#s2)"/><circle cx="403.5" cy="357.8" r="2.98" fill="url(#s0)"/><circle cx="230.6" cy="289.1" r="2.98" fill="url(#s0)"/><circle cx="389.3" cy="327.9" r="2.98" fill="url(#s0)"/><circle cx="299.5" cy="481.2" r="2.98" fill="url(#s1)"/><circle cx="246.6" cy="355.7" r="2.99" fill="url(#s0)"/><circle cx="176.6" cy="313.2" r="2.99" fill="url(#s5)"/><circle cx="253.8" cy="329.8" r="2.99" fill="url(#s0)"/><circle cx="324.8" cy="478.2" r="2.99" fill="url(#s2)"/><circle cx="408.1" cy="362.9" r="2.99" fill="url(#s0)"/><circle cx="213.6" cy="290.1" r="2.99" fill="url(#y)"/><circle cx="253.1" cy="317.0" r="2.99" fill="url(#s0)"/><circle cx="307.9" cy="479.8" r="2.99" fill="url(#s3)"/><circle cx="388.8" cy="314.8" r="2.99" fill="url(#s0)"/><circle cx="222.0" cy="289.1" r="2.99" fill="url(#s0)"/><circle cx="316.4" cy="478.8" r="2.99" fill="url(#s3)"/><circle cx="242.6" cy="361.5" r="2.99" fill="url(#s0)"/><circle cx="394.0" cy="332.4" r="2.99" fill="url(#s0)"/><circle cx="400.6" cy="294.0" r="2.99" fill="url(#s0)"/><circle cx="439.0" cy="296.1" r="2.99" fill="url(#s0)"/><circle cx="426.0" cy="291.2" r="2.99" fill="url(#s0)"/><circle cx="234.9" cy="293.1" r="2.99" fill="url(#s0)"/><circle cx="238.6" cy="367.5" r="2.99" fill="url(#s0)"/><circle cx="249.8" cy="335.0" r="2.99" fill="url(#s0)"/><circle cx="392.9" cy="306.9" r="2.99" fill="url(#s0)"/><circle cx="248.5" cy="309.9" r="2.99" fill="url(#s0)"/><circle cx="396.8" cy="299.9" r="2.99" fill="url(#s0)"/><circle cx="239.4" cy="297.9" r="2.99" fill="url(#s0)"/><circle cx="393.6" cy="318.7" r="3.00" fill="url(#s0)"/><circle cx="234.7" cy="373.5" r="3.00" fill="url(#s0)"/><circle cx="409.3" cy="292.0" r="3.00" fill="url(#s0)"/><circle cx="243.9" cy="303.5" r="3.00" fill="url(#s0)"/><circle cx="398.8" cy="336.9" r="3.00" fill="url(#s0)"/><circle cx="201.0" cy="295.5" r="3.00" fill="url(#s0)"/><circle cx="417.7" cy="290.9" r="3.00" fill="url(#s0)"/><circle cx="249.1" cy="321.7" r="3.00" fill="url(#s0)"/><circle cx="188.6" cy="303.1" r="3.00" fill="url(#s2)"/><circle cx="172.3" cy="317.3" r="3.00" fill="url(#s3)"/><circle cx="226.3" cy="292.3" r="3.00" fill="url(#s0)"/><circle cx="230.7" cy="379.5" r="3.00" fill="url(#s0)"/><circle cx="245.7" cy="340.2" r="3.00" fill="url(#s0)"/><circle cx="403.5" cy="341.4" r="3.00" fill="url(#s0)"/><circle cx="226.7" cy="385.6" r="3.00" fill="url(#s0)"/><circle cx="209.3" cy="293.2" r="3.00" fill="url(#s0)"/><circle cx="397.7" cy="310.4" r="3.00" fill="url(#s0)"/><circle cx="217.7" cy="292.2" r="3.00" fill="url(#s0)"/><circle cx="405.6" cy="296.9" r="3.00" fill="url(#s0)"/><circle cx="444.1" cy="299.0" r="3.00" fill="url(#s0)"/><circle cx="398.4" cy="322.7" r="3.00" fill="url(#s0)"/><circle cx="244.4" cy="314.1" r="3.00" fill="url(#s0)"/><circle cx="431.1" cy="293.9" r="3.00" fill="url(#s0)"/><circle cx="222.7" cy="391.7" r="3.00" fill="url(#s0)"/><circle cx="241.7" cy="345.6" r="3.00" fill="url(#s0)"/><circle cx="245.0" cy="326.4" r="3.00" fill="url(#s0)"/><circle cx="401.7" cy="303.1" r="3.00" fill="url(#s0)"/><circle cx="230.7" cy="296.4" r="3.00" fill="url(#s0)"/><circle cx="408.2" cy="346.0" r="3.01" fill="url(#s0)"/><circle cx="239.8" cy="307.4" r="3.01" fill="url(#s0)"/><circle cx="167.9" cy="321.4" r="3.01" fill="url(#s1)"/><circle cx="414.3" cy="294.7" r="3.01" fill="url(#s0)"/><circle cx="235.2" cy="301.4" r="3.01" fill="url(#s0)"/><circle cx="422.8" cy="293.6" r="3.01" fill="url(#s0)"/><circle cx="184.2" cy="306.7" r="3.01" fill="url(#s3)"/><circle cx="196.6" cy="298.9" r="3.01" fill="url(#s0)"/><circle cx="237.7" cy="351.0" r="3.01" fill="url(#s0)"/><circle cx="403.2" cy="326.7" r="3.01" fill="url(#s0)"/><circle cx="413.0" cy="350.7" r="3.01" fill="url(#s0)"/><circle cx="402.6" cy="314.0" r="3.01" fill="url(#s0)"/><circle cx="240.9" cy="331.2" r="3.01" fill="url(#s0)"/><circle cx="222.0" cy="295.4" r="3.01" fill="url(#s0)"/><circle cx="240.3" cy="318.4" r="3.01" fill="url(#s0)"/><circle cx="410.6" cy="299.8" r="3.01" fill="url(#s0)"/><circle cx="406.7" cy="306.3" r="3.02" fill="url(#s0)"/><circle cx="233.6" cy="356.5" r="3.02" fill="url(#s0)"/><circle cx="436.2" cy="296.7" r="3.02" fill="url(#s0)"/><circle cx="204.9" cy="296.4" r="3.02" fill="url(#s0)"/><circle cx="213.4" cy="295.3" r="3.02" fill="url(#s0)"/><circle cx="408.0" cy="330.8" r="3.02" fill="url(#s0)"/><circle cx="226.4" cy="299.7" r="3.02" fill="url(#s0)"/><circle cx="235.6" cy="311.3" r="3.02" fill="url(#s0)"/><circle cx="419.3" cy="297.5" r="3.02" fill="url(#s0)"/><circle cx="236.8" cy="336.1" r="3.02" fill="url(#s0)"/><circle cx="407.5" cy="317.6" r="3.02" fill="url(#s0)"/><circle cx="229.5" cy="362.1" r="3.02" fill="url(#s0)"/><circle cx="231.0" cy="305.0" r="3.02" fill="url(#s0)"/><circle cx="427.9" cy="296.3" r="3.02" fill="url(#s0)"/><circle cx="179.8" cy="310.4" r="3.02" fill="url(#s3)"/><circle cx="236.1" cy="322.8" r="3.02" fill="url(#s0)"/><circle cx="192.2" cy="302.3" r="3.02" fill="url(#s0)"/><circle cx="412.8" cy="335.0" r="3.02" fill="url(#s0)"/><circle cx="225.5" cy="367.7" r="3.03" fill="url(#s0)"/><circle cx="415.6" cy="302.8" r="3.03" fill="url(#s0)"/><circle cx="411.6" cy="309.5" r="3.03" fill="url(#s0)"/><circle cx="338.3" cy="475.6" r="3.03" fill="url(#s1)"/><circle cx="217.7" cy="298.6" r="3.03" fill="url(#s0)"/><circle cx="441.3" cy="299.5" r="3.03" fill="url(#s0)"/><circle cx="232.7" cy="341.0" r="3.03" fill="url(#s0)"/><circle cx="295.5" cy="479.6" r="3.03" fill="url(#s0)"/><circle cx="412.4" cy="321.2" r="3.03" fill="url(#s0)"/><circle cx="221.4" cy="373.4" r="3.03" fill="url(#s0)"/><circle cx="200.5" cy="299.6" r="3.03" fill="url(#s0)"/><circle cx="231.4" cy="315.3" r="3.03" fill="url(#s0)"/><circle cx="209.0" cy="298.5" r="3.03" fill="url(#s0)"/><circle cx="417.7" cy="339.2" r="3.03" fill="url(#s0)"/><circle cx="329.8" cy="475.4" r="3.03" fill="url(#s2)"/><circle cx="424.4" cy="300.2" r="3.03" fill="url(#s0)"/><circle cx="222.1" cy="303.1" r="3.03" fill="url(#s0)"/><circle cx="231.9" cy="327.2" r="3.03" fill="url(#s0)"/><circle cx="175.3" cy="314.2" r="3.03" fill="url(#s1)"/><circle cx="226.7" cy="308.6" r="3.03" fill="url(#s0)"/><circle cx="433.0" cy="299.0" r="3.03" fill="url(#s0)"/><circle cx="304.1" cy="477.8" r="3.03" fill="url(#s1)"/><circle cx="217.3" cy="379.1" r="3.03" fill="url(#s0)"/><circle cx="321.2" cy="475.7" r="3.04" fill="url(#s2)"/><circle cx="228.5" cy="346.0" r="3.04" fill="url(#s0)"/><circle cx="312.7" cy="476.5" r="3.04" fill="url(#s2)"/><circle cx="416.6" cy="312.8" r="3.04" fill="url(#s0)"/><circle cx="187.7" cy="305.7" r="3.04" fill="url(#s0)"/><circle cx="420.6" cy="305.8" r="3.04" fill="url(#s0)"/><circle cx="417.3" cy="324.9" r="3.04" fill="url(#s0)"/><circle cx="213.3" cy="301.8" r="3.04" fill="url(#s0)"/><circle cx="227.1" cy="319.3" r="3.04" fill="url(#s0)"/><circle cx="227.7" cy="331.7" r="3.04" fill="url(#s0)"/><circle cx="224.4" cy="351.1" r="3.04" fill="url(#s0)"/><circle cx="196.0" cy="302.8" r="3.04" fill="url(#s0)"/><circle cx="429.5" cy="303.1" r="3.04" fill="url(#s0)"/><circle cx="204.6" cy="301.7" r="3.05" fill="url(#s0)"/><circle cx="170.8" cy="318.0" r="3.05" fill="url(#s0)"/><circle cx="217.8" cy="306.5" r="3.05" fill="url(#s0)"/><circle cx="438.2" cy="301.8" r="3.05" fill="url(#s0)"/><circle cx="222.4" cy="312.3" r="3.05" fill="url(#s0)"/><circle cx="421.6" cy="316.1" r="3.05" fill="url(#s0)"/><circle cx="422.3" cy="328.7" r="3.05" fill="url(#s0)"/><circle cx="425.7" cy="308.8" r="3.05" fill="url(#s0)"/><circle cx="220.2" cy="356.3" r="3.05" fill="url(#s0)"/><circle cx="183.2" cy="309.1" r="3.05" fill="url(#s0)"/><circle cx="223.5" cy="336.3" r="3.05" fill="url(#s0)"/><circle cx="222.9" cy="323.4" r="3.05" fill="url(#s0)"/><circle cx="208.9" cy="305.1" r="3.06" fill="url(#s0)"/><circle cx="216.0" cy="361.5" r="3.06" fill="url(#s0)"/><circle cx="434.7" cy="305.9" r="3.06" fill="url(#s0)"/><circle cx="426.7" cy="319.5" r="3.06" fill="url(#s0)"/><circle cx="218.1" cy="316.0" r="3.06" fill="url(#s0)"/><circle cx="191.5" cy="306.1" r="3.06" fill="url(#s0)"/><circle cx="213.4" cy="309.9" r="3.06" fill="url(#s0)"/><circle cx="200.1" cy="304.9" r="3.06" fill="url(#s0)"/><circle cx="430.9" cy="311.8" r="3.06" fill="url(#s0)"/><circle cx="219.3" cy="340.9" r="3.06" fill="url(#s0)"/><circle cx="211.8" cy="366.8" r="3.06" fill="url(#s0)"/><circle cx="178.7" cy="312.6" r="3.06" fill="url(#s0)"/><circle cx="218.6" cy="327.5" r="3.06" fill="url(#s0)"/><circle cx="204.4" cy="308.4" r="3.07" fill="url(#s0)"/><circle cx="215.0" cy="345.6" r="3.07" fill="url(#s0)"/><circle cx="213.7" cy="319.8" r="3.07" fill="url(#s0)"/><circle cx="187.0" cy="309.4" r="3.07" fill="url(#s0)"/><circle cx="209.0" cy="313.4" r="3.07" fill="url(#s0)"/><circle cx="195.6" cy="308.1" r="3.08" fill="url(#s0)"/><circle cx="214.2" cy="331.7" r="3.08" fill="url(#s0)"/><circle cx="174.1" cy="316.2" r="3.08" fill="url(#s0)"/><circle cx="210.7" cy="350.4" r="3.08" fill="url(#s0)"/><circle cx="334.9" cy="472.0" r="3.08" fill="url(#s1)"/><circle cx="300.1" cy="475.3" r="3.08" fill="url(#s0)"/><circle cx="209.3" cy="323.6" r="3.09" fill="url(#s0)"/><circle cx="199.9" cy="311.7" r="3.09" fill="url(#s0)"/><circle cx="326.3" cy="472.0" r="3.09" fill="url(#s2)"/><circle cx="209.9" cy="336.0" r="3.09" fill="url(#s0)"/><circle cx="308.8" cy="473.7" r="3.09" fill="url(#s1)"/><circle cx="204.5" cy="316.9" r="3.09" fill="url(#s0)"/><circle cx="317.6" cy="472.6" r="3.09" fill="url(#s2)"/><circle cx="182.4" cy="312.8" r="3.09" fill="url(#s0)"/><circle cx="206.4" cy="355.2" r="3.09" fill="url(#s0)"/><circle cx="191.0" cy="311.4" r="3.09" fill="url(#s0)"/><circle cx="204.9" cy="327.5" r="3.10" fill="url(#s0)"/><circle cx="205.5" cy="340.3" r="3.10" fill="url(#s0)"/><circle cx="195.4" cy="315.1" r="3.10" fill="url(#s0)"/><circle cx="200.0" cy="320.5" r="3.10" fill="url(#s0)"/><circle cx="177.7" cy="316.1" r="3.10" fill="url(#s0)"/><circle cx="186.4" cy="314.7" r="3.11" fill="url(#s0)"/><circle cx="201.1" cy="344.7" r="3.11" fill="url(#s0)"/><circle cx="200.4" cy="331.4" r="3.11" fill="url(#s0)"/><circle cx="190.8" cy="318.5" r="3.12" fill="url(#s0)"/><circle cx="195.5" cy="324.1" r="3.12" fill="url(#s0)"/><circle cx="181.8" cy="318.0" r="3.12" fill="url(#s0)"/><circle cx="195.9" cy="335.4" r="3.12" fill="url(#s0)"/><circle cx="186.2" cy="321.9" r="3.13" fill="url(#s0)"/><circle cx="190.9" cy="327.8" r="3.13" fill="url(#s0)"/><circle cx="331.5" cy="467.8" r="3.14" fill="url(#s1)"/><circle cx="304.9" cy="470.4" r="3.14" fill="url(#s0)"/><circle cx="322.7" cy="468.0" r="3.15" fill="url(#s1)"/><circle cx="313.8" cy="468.9" r="3.15" fill="url(#s1)"/><circle cx="328.0" cy="463.1" r="3.21" fill="url(#s1)"/><circle cx="309.8" cy="464.9" r="3.21" fill="url(#s0)"/><circle cx="318.9" cy="463.7" r="3.21" fill="url(#s1)"/><circle cx="324.3" cy="458.3" r="3.27" fill="url(#s0)"/><circle cx="315.0" cy="459.2" r="3.27" fill="url(#s0)"/><circle cx="320.4" cy="453.6" r="3.34" fill="url(#s0)"/></g><rect x="164.5" y="264.5" width="126.7" height="23" fill="#000" fill-opacity="0.8"/>
<g font-family="Liberation Serif, serif" font-style="italic" font-size="12" fill="#a5a4a3" stroke="#a5a4a3" stroke-width="0.3" opacity="0.999">
<text x="139.6" y="279.9" textLength="9.6" lengthAdjust="spacingAndGlyphs">X:</text>
<text x="157.8" y="279.9" textLength="25.9" lengthAdjust="spacingAndGlyphs">-0.50</text>
<text x="190.4" y="279.9" textLength="10.6" lengthAdjust="spacingAndGlyphs">Y:</text>
<text x="206.8" y="279.9" textLength="22.0" lengthAdjust="spacingAndGlyphs">0.99</text>
<text x="235.5" y="279.9" textLength="9.6" lengthAdjust="spacingAndGlyphs">Z:</text>
<text x="252.8" y="279.9" textLength="31.7" lengthAdjust="spacingAndGlyphs">-21.50</text>
</g>
</svg></div>
<div class="btn" style="top:46px"><div class="t13">Change label style</div></div>
<div class="btn" style="top:80px"><div class="t13">Change camera preset</div></div>
<div class="btn" style="top:114px"><div class="t13" style="letter-spacing:0.35px">Toggle item count</div></div>
<div class="cb" style="top:148px"></div><div class="cb" style="top:169px"></div><div class="cb" style="top:190px"></div>
<svg style="position:absolute;left:636px;top:140px" width="24" height="70" viewBox="0 0 24 70"><g fill="none" stroke="#101a30" stroke-width="2" stroke-linecap="round" stroke-linejoin="round"><path d="M7.9 12.9L11.4 17.1L18.1 6.8"/><path d="M7.9 33.9L11.4 38.1L18.1 27.8"/><path d="M7.9 54.9L11.4 59.1L18.1 48.8"/></g></svg>
<div class="t13" style="left:658px;top:148px">Show background</div>
<div class="t13" style="left:658px;top:169px">Show grid</div>
<div class="t13" style="left:658px;top:190px;letter-spacing:0.2px">Smooth dots</div>
<div class="t13" style="left:640px;top:213px;letter-spacing:0.15px">Change dot style</div>
<div class="combo" style="top:238px"><div class="t13">Sphere</div><div class="arr" style="top:4px;border-bottom:4px solid #444"></div><div class="arr" style="top:11px;border-top:4px solid #444"></div></div>
<div class="t13" style="left:640px;top:269px">Change theme</div>
<div class="combo" style="top:292px"><div class="t13">Ebony</div><div class="arr" style="top:4px;border-bottom:4px solid #444"></div><div class="arr" style="top:11px;border-top:4px solid #444"></div></div>
<div class="t13" style="left:640px;top:322px;letter-spacing:0.25px">Adjust shadow quality</div>
<div class="combo" style="top:346px"><div class="t13">Low Soft</div><div class="arr" style="top:4px;border-bottom:4px solid #444"></div><div class="arr" style="top:11px;border-top:4px solid #444"></div></div>
<div class="t13" style="left:640px;top:376px;letter-spacing:0.2px">Change font</div>
<div style="position:absolute;left:638.5px;top:398.5px;width:220px;height:24px;border-radius:5px;background:#8cb0e2;box-shadow:0 0 1.5px 0.5px rgba(140,176,226,.7)"></div>
<div style="position:absolute;left:641px;top:401px;width:215px;height:19px;background:#fff;border-radius:1px"></div>
<div style="position:absolute;left:838px;top:401px;width:18px;height:19px;border-left:1px solid #888;border-radius:0 3px 3px 0;background:linear-gradient(#fdfdfd,#f4f4f4 45%,#e8e8e8 55%,#f0f0f0)"><div class="arr" style="left:6px;top:7px;border-left-width:3.5px;border-right-width:3.5px;border-top:5px solid #3a3a3a"></div></div>
<div class="t13" style="left:643px;top:403px;letter-spacing:-0.3px">PilGi</div>
<div style="position:absolute;right:0;bottom:0;width:3px;height:3px;background:radial-gradient(circle at 0 0,transparent 2.5px,#222 3px)"></div>
</body></html>
